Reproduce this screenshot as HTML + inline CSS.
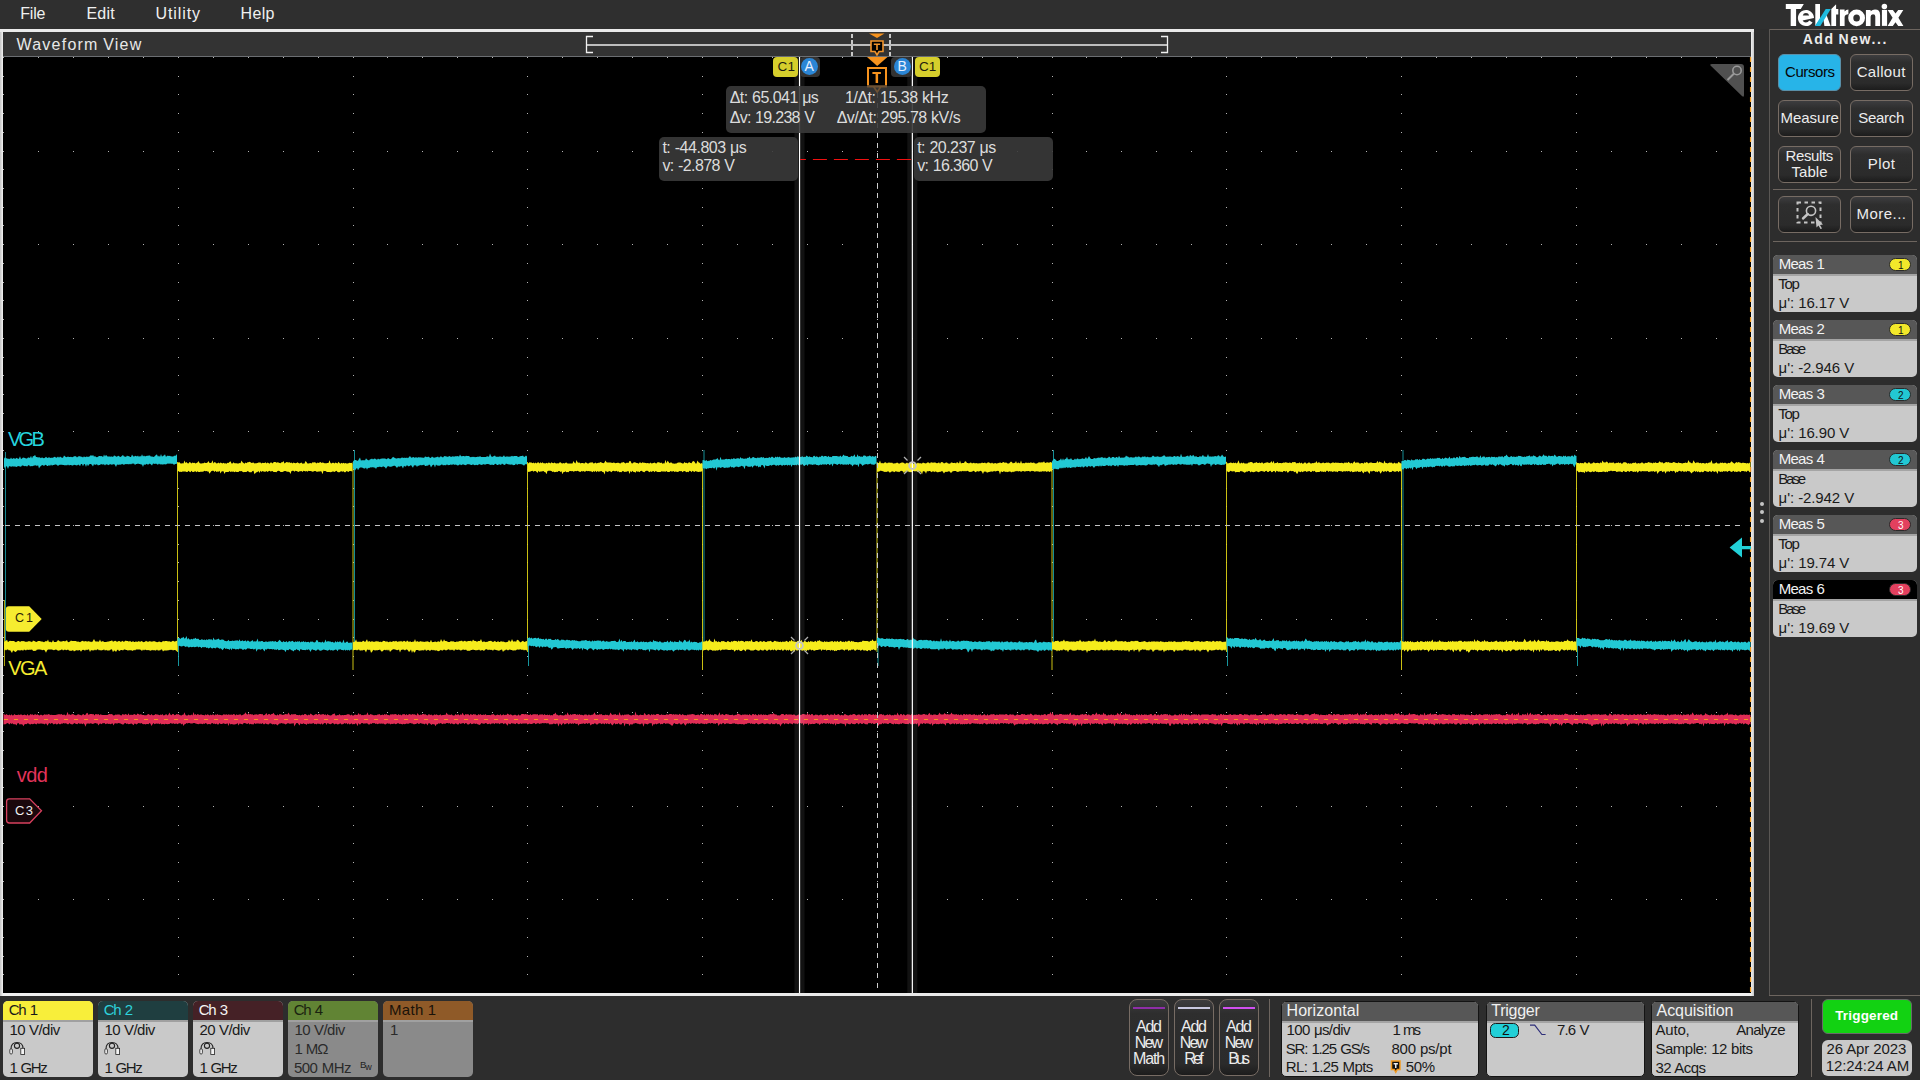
<!DOCTYPE html><html><head><meta charset="utf-8"><style>
*{margin:0;padding:0;box-sizing:border-box}
html,body{width:1920px;height:1080px;overflow:hidden;background:#2d2d2d;font-family:"Liberation Sans",sans-serif;color:#e6e6e6}
.a{position:absolute}
.t{position:absolute;white-space:nowrap;line-height:1}
</style></head><body>
<div class="a" style="left:0;top:0;width:1920px;height:29px;background:#2f2f2f"></div><div class="t" style="left:20.30px;top:6.00px;font-size:16px;color:#f0f0f0;letter-spacing:-0.250px;">File</div><div class="t" style="left:86.40px;top:6.00px;font-size:16px;color:#f0f0f0;letter-spacing:0.217px;">Edit</div><div class="t" style="left:155.50px;top:6.00px;font-size:16px;color:#f0f0f0;letter-spacing:0.917px;">Utility</div><div class="t" style="left:240.60px;top:6.00px;font-size:16px;color:#f0f0f0;letter-spacing:0.333px;">Help</div><div class="a" style="left:0;top:29px;width:1754px;height:967px;background:linear-gradient(90deg,#c4c4c4 0,#f2f2f2 3px,#e8e8e8 50%,#f2f2f2 calc(100% - 3px),#c8c8c8 100%)"></div><div class="a" style="left:0;top:29px;width:1754px;height:3px;background:#eaeaea"></div><div class="a" style="left:3px;top:32px;width:1748px;height:24px;background:#333333"></div><div class="a" style="left:3px;top:56px;width:1748px;height:1px;background:#6b6e72"></div><div class="a" style="left:3px;top:57px;width:1748px;height:936px;background:#000"></div><div class="t" style="left:16.40px;top:37.00px;font-size:16px;color:#e8e8e8;letter-spacing:1.250px;word-spacing:-1.250px;">Waveform View</div><svg class="a" style="left:0;top:0" width="1920" height="1080" viewBox="0 0 1920 1080"><path fill="#b4b4b4" shape-rendering="crispEdges" d="M3 57h1v1h-1zM3 76h1v1h-1zM3 94h1v1h-1zM3 113h1v1h-1zM3 132h1v1h-1zM3 151h1v1h-1zM3 169h1v1h-1zM3 188h1v1h-1zM3 207h1v1h-1zM3 225h1v1h-1zM3 244h1v1h-1zM3 263h1v1h-1zM3 282h1v1h-1zM3 300h1v1h-1zM3 319h1v1h-1zM3 338h1v1h-1zM3 357h1v1h-1zM3 375h1v1h-1zM3 394h1v1h-1zM3 413h1v1h-1zM3 431h1v1h-1zM3 450h1v1h-1zM3 469h1v1h-1zM3 488h1v1h-1zM3 506h1v1h-1zM3 525h1v1h-1zM3 544h1v1h-1zM3 562h1v1h-1zM3 581h1v1h-1zM3 600h1v1h-1zM3 619h1v1h-1zM3 637h1v1h-1zM3 656h1v1h-1zM3 675h1v1h-1zM3 693h1v1h-1zM3 712h1v1h-1zM3 731h1v1h-1zM3 750h1v1h-1zM3 768h1v1h-1zM3 787h1v1h-1zM3 806h1v1h-1zM3 825h1v1h-1zM3 843h1v1h-1zM3 862h1v1h-1zM3 881h1v1h-1zM3 899h1v1h-1zM3 918h1v1h-1zM3 937h1v1h-1zM3 956h1v1h-1zM3 974h1v1h-1zM38 57h1v1h-1zM38 151h1v1h-1zM38 244h1v1h-1zM38 338h1v1h-1zM38 431h1v1h-1zM38 525h1v1h-1zM38 619h1v1h-1zM38 712h1v1h-1zM38 806h1v1h-1zM38 899h1v1h-1zM73 57h1v1h-1zM73 151h1v1h-1zM73 244h1v1h-1zM73 338h1v1h-1zM73 431h1v1h-1zM73 525h1v1h-1zM73 619h1v1h-1zM73 712h1v1h-1zM73 806h1v1h-1zM73 899h1v1h-1zM108 57h1v1h-1zM108 151h1v1h-1zM108 244h1v1h-1zM108 338h1v1h-1zM108 431h1v1h-1zM108 525h1v1h-1zM108 619h1v1h-1zM108 712h1v1h-1zM108 806h1v1h-1zM108 899h1v1h-1zM143 57h1v1h-1zM143 151h1v1h-1zM143 244h1v1h-1zM143 338h1v1h-1zM143 431h1v1h-1zM143 525h1v1h-1zM143 619h1v1h-1zM143 712h1v1h-1zM143 806h1v1h-1zM143 899h1v1h-1zM178 57h1v1h-1zM178 76h1v1h-1zM178 94h1v1h-1zM178 113h1v1h-1zM178 132h1v1h-1zM178 151h1v1h-1zM178 169h1v1h-1zM178 188h1v1h-1zM178 207h1v1h-1zM178 225h1v1h-1zM178 244h1v1h-1zM178 263h1v1h-1zM178 282h1v1h-1zM178 300h1v1h-1zM178 319h1v1h-1zM178 338h1v1h-1zM178 357h1v1h-1zM178 375h1v1h-1zM178 394h1v1h-1zM178 413h1v1h-1zM178 431h1v1h-1zM178 450h1v1h-1zM178 469h1v1h-1zM178 488h1v1h-1zM178 506h1v1h-1zM178 525h1v1h-1zM178 544h1v1h-1zM178 562h1v1h-1zM178 581h1v1h-1zM178 600h1v1h-1zM178 619h1v1h-1zM178 637h1v1h-1zM178 656h1v1h-1zM178 675h1v1h-1zM178 693h1v1h-1zM178 712h1v1h-1zM178 731h1v1h-1zM178 750h1v1h-1zM178 768h1v1h-1zM178 787h1v1h-1zM178 806h1v1h-1zM178 825h1v1h-1zM178 843h1v1h-1zM178 862h1v1h-1zM178 881h1v1h-1zM178 899h1v1h-1zM178 918h1v1h-1zM178 937h1v1h-1zM178 956h1v1h-1zM178 974h1v1h-1zM213 57h1v1h-1zM213 151h1v1h-1zM213 244h1v1h-1zM213 338h1v1h-1zM213 431h1v1h-1zM213 525h1v1h-1zM213 619h1v1h-1zM213 712h1v1h-1zM213 806h1v1h-1zM213 899h1v1h-1zM248 57h1v1h-1zM248 151h1v1h-1zM248 244h1v1h-1zM248 338h1v1h-1zM248 431h1v1h-1zM248 525h1v1h-1zM248 619h1v1h-1zM248 712h1v1h-1zM248 806h1v1h-1zM248 899h1v1h-1zM283 57h1v1h-1zM283 151h1v1h-1zM283 244h1v1h-1zM283 338h1v1h-1zM283 431h1v1h-1zM283 525h1v1h-1zM283 619h1v1h-1zM283 712h1v1h-1zM283 806h1v1h-1zM283 899h1v1h-1zM318 57h1v1h-1zM318 151h1v1h-1zM318 244h1v1h-1zM318 338h1v1h-1zM318 431h1v1h-1zM318 525h1v1h-1zM318 619h1v1h-1zM318 712h1v1h-1zM318 806h1v1h-1zM318 899h1v1h-1zM353 57h1v1h-1zM353 76h1v1h-1zM353 94h1v1h-1zM353 113h1v1h-1zM353 132h1v1h-1zM353 151h1v1h-1zM353 169h1v1h-1zM353 188h1v1h-1zM353 207h1v1h-1zM353 225h1v1h-1zM353 244h1v1h-1zM353 263h1v1h-1zM353 282h1v1h-1zM353 300h1v1h-1zM353 319h1v1h-1zM353 338h1v1h-1zM353 357h1v1h-1zM353 375h1v1h-1zM353 394h1v1h-1zM353 413h1v1h-1zM353 431h1v1h-1zM353 450h1v1h-1zM353 469h1v1h-1zM353 488h1v1h-1zM353 506h1v1h-1zM353 525h1v1h-1zM353 544h1v1h-1zM353 562h1v1h-1zM353 581h1v1h-1zM353 600h1v1h-1zM353 619h1v1h-1zM353 637h1v1h-1zM353 656h1v1h-1zM353 675h1v1h-1zM353 693h1v1h-1zM353 712h1v1h-1zM353 731h1v1h-1zM353 750h1v1h-1zM353 768h1v1h-1zM353 787h1v1h-1zM353 806h1v1h-1zM353 825h1v1h-1zM353 843h1v1h-1zM353 862h1v1h-1zM353 881h1v1h-1zM353 899h1v1h-1zM353 918h1v1h-1zM353 937h1v1h-1zM353 956h1v1h-1zM353 974h1v1h-1zM387 57h1v1h-1zM387 151h1v1h-1zM387 244h1v1h-1zM387 338h1v1h-1zM387 431h1v1h-1zM387 525h1v1h-1zM387 619h1v1h-1zM387 712h1v1h-1zM387 806h1v1h-1zM387 899h1v1h-1zM422 57h1v1h-1zM422 151h1v1h-1zM422 244h1v1h-1zM422 338h1v1h-1zM422 431h1v1h-1zM422 525h1v1h-1zM422 619h1v1h-1zM422 712h1v1h-1zM422 806h1v1h-1zM422 899h1v1h-1zM457 57h1v1h-1zM457 151h1v1h-1zM457 244h1v1h-1zM457 338h1v1h-1zM457 431h1v1h-1zM457 525h1v1h-1zM457 619h1v1h-1zM457 712h1v1h-1zM457 806h1v1h-1zM457 899h1v1h-1zM492 57h1v1h-1zM492 151h1v1h-1zM492 244h1v1h-1zM492 338h1v1h-1zM492 431h1v1h-1zM492 525h1v1h-1zM492 619h1v1h-1zM492 712h1v1h-1zM492 806h1v1h-1zM492 899h1v1h-1zM527 57h1v1h-1zM527 76h1v1h-1zM527 94h1v1h-1zM527 113h1v1h-1zM527 132h1v1h-1zM527 151h1v1h-1zM527 169h1v1h-1zM527 188h1v1h-1zM527 207h1v1h-1zM527 225h1v1h-1zM527 244h1v1h-1zM527 263h1v1h-1zM527 282h1v1h-1zM527 300h1v1h-1zM527 319h1v1h-1zM527 338h1v1h-1zM527 357h1v1h-1zM527 375h1v1h-1zM527 394h1v1h-1zM527 413h1v1h-1zM527 431h1v1h-1zM527 450h1v1h-1zM527 469h1v1h-1zM527 488h1v1h-1zM527 506h1v1h-1zM527 525h1v1h-1zM527 544h1v1h-1zM527 562h1v1h-1zM527 581h1v1h-1zM527 600h1v1h-1zM527 619h1v1h-1zM527 637h1v1h-1zM527 656h1v1h-1zM527 675h1v1h-1zM527 693h1v1h-1zM527 712h1v1h-1zM527 731h1v1h-1zM527 750h1v1h-1zM527 768h1v1h-1zM527 787h1v1h-1zM527 806h1v1h-1zM527 825h1v1h-1zM527 843h1v1h-1zM527 862h1v1h-1zM527 881h1v1h-1zM527 899h1v1h-1zM527 918h1v1h-1zM527 937h1v1h-1zM527 956h1v1h-1zM527 974h1v1h-1zM562 57h1v1h-1zM562 151h1v1h-1zM562 244h1v1h-1zM562 338h1v1h-1zM562 431h1v1h-1zM562 525h1v1h-1zM562 619h1v1h-1zM562 712h1v1h-1zM562 806h1v1h-1zM562 899h1v1h-1zM597 57h1v1h-1zM597 151h1v1h-1zM597 244h1v1h-1zM597 338h1v1h-1zM597 431h1v1h-1zM597 525h1v1h-1zM597 619h1v1h-1zM597 712h1v1h-1zM597 806h1v1h-1zM597 899h1v1h-1zM632 57h1v1h-1zM632 151h1v1h-1zM632 244h1v1h-1zM632 338h1v1h-1zM632 431h1v1h-1zM632 525h1v1h-1zM632 619h1v1h-1zM632 712h1v1h-1zM632 806h1v1h-1zM632 899h1v1h-1zM667 57h1v1h-1zM667 151h1v1h-1zM667 244h1v1h-1zM667 338h1v1h-1zM667 431h1v1h-1zM667 525h1v1h-1zM667 619h1v1h-1zM667 712h1v1h-1zM667 806h1v1h-1zM667 899h1v1h-1zM702 57h1v1h-1zM702 76h1v1h-1zM702 94h1v1h-1zM702 113h1v1h-1zM702 132h1v1h-1zM702 151h1v1h-1zM702 169h1v1h-1zM702 188h1v1h-1zM702 207h1v1h-1zM702 225h1v1h-1zM702 244h1v1h-1zM702 263h1v1h-1zM702 282h1v1h-1zM702 300h1v1h-1zM702 319h1v1h-1zM702 338h1v1h-1zM702 357h1v1h-1zM702 375h1v1h-1zM702 394h1v1h-1zM702 413h1v1h-1zM702 431h1v1h-1zM702 450h1v1h-1zM702 469h1v1h-1zM702 488h1v1h-1zM702 506h1v1h-1zM702 525h1v1h-1zM702 544h1v1h-1zM702 562h1v1h-1zM702 581h1v1h-1zM702 600h1v1h-1zM702 619h1v1h-1zM702 637h1v1h-1zM702 656h1v1h-1zM702 675h1v1h-1zM702 693h1v1h-1zM702 712h1v1h-1zM702 731h1v1h-1zM702 750h1v1h-1zM702 768h1v1h-1zM702 787h1v1h-1zM702 806h1v1h-1zM702 825h1v1h-1zM702 843h1v1h-1zM702 862h1v1h-1zM702 881h1v1h-1zM702 899h1v1h-1zM702 918h1v1h-1zM702 937h1v1h-1zM702 956h1v1h-1zM702 974h1v1h-1zM737 57h1v1h-1zM737 151h1v1h-1zM737 244h1v1h-1zM737 338h1v1h-1zM737 431h1v1h-1zM737 525h1v1h-1zM737 619h1v1h-1zM737 712h1v1h-1zM737 806h1v1h-1zM737 899h1v1h-1zM772 57h1v1h-1zM772 151h1v1h-1zM772 244h1v1h-1zM772 338h1v1h-1zM772 431h1v1h-1zM772 525h1v1h-1zM772 619h1v1h-1zM772 712h1v1h-1zM772 806h1v1h-1zM772 899h1v1h-1zM807 57h1v1h-1zM807 151h1v1h-1zM807 244h1v1h-1zM807 338h1v1h-1zM807 431h1v1h-1zM807 525h1v1h-1zM807 619h1v1h-1zM807 712h1v1h-1zM807 806h1v1h-1zM807 899h1v1h-1zM842 57h1v1h-1zM842 151h1v1h-1zM842 244h1v1h-1zM842 338h1v1h-1zM842 431h1v1h-1zM842 525h1v1h-1zM842 619h1v1h-1zM842 712h1v1h-1zM842 806h1v1h-1zM842 899h1v1h-1zM877 57h1v1h-1zM877 76h1v1h-1zM877 94h1v1h-1zM877 113h1v1h-1zM877 132h1v1h-1zM877 151h1v1h-1zM877 169h1v1h-1zM877 188h1v1h-1zM877 207h1v1h-1zM877 225h1v1h-1zM877 244h1v1h-1zM877 263h1v1h-1zM877 282h1v1h-1zM877 300h1v1h-1zM877 319h1v1h-1zM877 338h1v1h-1zM877 357h1v1h-1zM877 375h1v1h-1zM877 394h1v1h-1zM877 413h1v1h-1zM877 431h1v1h-1zM877 450h1v1h-1zM877 469h1v1h-1zM877 488h1v1h-1zM877 506h1v1h-1zM877 525h1v1h-1zM877 544h1v1h-1zM877 562h1v1h-1zM877 581h1v1h-1zM877 600h1v1h-1zM877 619h1v1h-1zM877 637h1v1h-1zM877 656h1v1h-1zM877 675h1v1h-1zM877 693h1v1h-1zM877 712h1v1h-1zM877 731h1v1h-1zM877 750h1v1h-1zM877 768h1v1h-1zM877 787h1v1h-1zM877 806h1v1h-1zM877 825h1v1h-1zM877 843h1v1h-1zM877 862h1v1h-1zM877 881h1v1h-1zM877 899h1v1h-1zM877 918h1v1h-1zM877 937h1v1h-1zM877 956h1v1h-1zM877 974h1v1h-1zM912 57h1v1h-1zM912 151h1v1h-1zM912 244h1v1h-1zM912 338h1v1h-1zM912 431h1v1h-1zM912 525h1v1h-1zM912 619h1v1h-1zM912 712h1v1h-1zM912 806h1v1h-1zM912 899h1v1h-1zM947 57h1v1h-1zM947 151h1v1h-1zM947 244h1v1h-1zM947 338h1v1h-1zM947 431h1v1h-1zM947 525h1v1h-1zM947 619h1v1h-1zM947 712h1v1h-1zM947 806h1v1h-1zM947 899h1v1h-1zM982 57h1v1h-1zM982 151h1v1h-1zM982 244h1v1h-1zM982 338h1v1h-1zM982 431h1v1h-1zM982 525h1v1h-1zM982 619h1v1h-1zM982 712h1v1h-1zM982 806h1v1h-1zM982 899h1v1h-1zM1017 57h1v1h-1zM1017 151h1v1h-1zM1017 244h1v1h-1zM1017 338h1v1h-1zM1017 431h1v1h-1zM1017 525h1v1h-1zM1017 619h1v1h-1zM1017 712h1v1h-1zM1017 806h1v1h-1zM1017 899h1v1h-1zM1052 57h1v1h-1zM1052 76h1v1h-1zM1052 94h1v1h-1zM1052 113h1v1h-1zM1052 132h1v1h-1zM1052 151h1v1h-1zM1052 169h1v1h-1zM1052 188h1v1h-1zM1052 207h1v1h-1zM1052 225h1v1h-1zM1052 244h1v1h-1zM1052 263h1v1h-1zM1052 282h1v1h-1zM1052 300h1v1h-1zM1052 319h1v1h-1zM1052 338h1v1h-1zM1052 357h1v1h-1zM1052 375h1v1h-1zM1052 394h1v1h-1zM1052 413h1v1h-1zM1052 431h1v1h-1zM1052 450h1v1h-1zM1052 469h1v1h-1zM1052 488h1v1h-1zM1052 506h1v1h-1zM1052 525h1v1h-1zM1052 544h1v1h-1zM1052 562h1v1h-1zM1052 581h1v1h-1zM1052 600h1v1h-1zM1052 619h1v1h-1zM1052 637h1v1h-1zM1052 656h1v1h-1zM1052 675h1v1h-1zM1052 693h1v1h-1zM1052 712h1v1h-1zM1052 731h1v1h-1zM1052 750h1v1h-1zM1052 768h1v1h-1zM1052 787h1v1h-1zM1052 806h1v1h-1zM1052 825h1v1h-1zM1052 843h1v1h-1zM1052 862h1v1h-1zM1052 881h1v1h-1zM1052 899h1v1h-1zM1052 918h1v1h-1zM1052 937h1v1h-1zM1052 956h1v1h-1zM1052 974h1v1h-1zM1086 57h1v1h-1zM1086 151h1v1h-1zM1086 244h1v1h-1zM1086 338h1v1h-1zM1086 431h1v1h-1zM1086 525h1v1h-1zM1086 619h1v1h-1zM1086 712h1v1h-1zM1086 806h1v1h-1zM1086 899h1v1h-1zM1121 57h1v1h-1zM1121 151h1v1h-1zM1121 244h1v1h-1zM1121 338h1v1h-1zM1121 431h1v1h-1zM1121 525h1v1h-1zM1121 619h1v1h-1zM1121 712h1v1h-1zM1121 806h1v1h-1zM1121 899h1v1h-1zM1156 57h1v1h-1zM1156 151h1v1h-1zM1156 244h1v1h-1zM1156 338h1v1h-1zM1156 431h1v1h-1zM1156 525h1v1h-1zM1156 619h1v1h-1zM1156 712h1v1h-1zM1156 806h1v1h-1zM1156 899h1v1h-1zM1191 57h1v1h-1zM1191 151h1v1h-1zM1191 244h1v1h-1zM1191 338h1v1h-1zM1191 431h1v1h-1zM1191 525h1v1h-1zM1191 619h1v1h-1zM1191 712h1v1h-1zM1191 806h1v1h-1zM1191 899h1v1h-1zM1226 57h1v1h-1zM1226 76h1v1h-1zM1226 94h1v1h-1zM1226 113h1v1h-1zM1226 132h1v1h-1zM1226 151h1v1h-1zM1226 169h1v1h-1zM1226 188h1v1h-1zM1226 207h1v1h-1zM1226 225h1v1h-1zM1226 244h1v1h-1zM1226 263h1v1h-1zM1226 282h1v1h-1zM1226 300h1v1h-1zM1226 319h1v1h-1zM1226 338h1v1h-1zM1226 357h1v1h-1zM1226 375h1v1h-1zM1226 394h1v1h-1zM1226 413h1v1h-1zM1226 431h1v1h-1zM1226 450h1v1h-1zM1226 469h1v1h-1zM1226 488h1v1h-1zM1226 506h1v1h-1zM1226 525h1v1h-1zM1226 544h1v1h-1zM1226 562h1v1h-1zM1226 581h1v1h-1zM1226 600h1v1h-1zM1226 619h1v1h-1zM1226 637h1v1h-1zM1226 656h1v1h-1zM1226 675h1v1h-1zM1226 693h1v1h-1zM1226 712h1v1h-1zM1226 731h1v1h-1zM1226 750h1v1h-1zM1226 768h1v1h-1zM1226 787h1v1h-1zM1226 806h1v1h-1zM1226 825h1v1h-1zM1226 843h1v1h-1zM1226 862h1v1h-1zM1226 881h1v1h-1zM1226 899h1v1h-1zM1226 918h1v1h-1zM1226 937h1v1h-1zM1226 956h1v1h-1zM1226 974h1v1h-1zM1261 57h1v1h-1zM1261 151h1v1h-1zM1261 244h1v1h-1zM1261 338h1v1h-1zM1261 431h1v1h-1zM1261 525h1v1h-1zM1261 619h1v1h-1zM1261 712h1v1h-1zM1261 806h1v1h-1zM1261 899h1v1h-1zM1296 57h1v1h-1zM1296 151h1v1h-1zM1296 244h1v1h-1zM1296 338h1v1h-1zM1296 431h1v1h-1zM1296 525h1v1h-1zM1296 619h1v1h-1zM1296 712h1v1h-1zM1296 806h1v1h-1zM1296 899h1v1h-1zM1331 57h1v1h-1zM1331 151h1v1h-1zM1331 244h1v1h-1zM1331 338h1v1h-1zM1331 431h1v1h-1zM1331 525h1v1h-1zM1331 619h1v1h-1zM1331 712h1v1h-1zM1331 806h1v1h-1zM1331 899h1v1h-1zM1366 57h1v1h-1zM1366 151h1v1h-1zM1366 244h1v1h-1zM1366 338h1v1h-1zM1366 431h1v1h-1zM1366 525h1v1h-1zM1366 619h1v1h-1zM1366 712h1v1h-1zM1366 806h1v1h-1zM1366 899h1v1h-1zM1401 57h1v1h-1zM1401 76h1v1h-1zM1401 94h1v1h-1zM1401 113h1v1h-1zM1401 132h1v1h-1zM1401 151h1v1h-1zM1401 169h1v1h-1zM1401 188h1v1h-1zM1401 207h1v1h-1zM1401 225h1v1h-1zM1401 244h1v1h-1zM1401 263h1v1h-1zM1401 282h1v1h-1zM1401 300h1v1h-1zM1401 319h1v1h-1zM1401 338h1v1h-1zM1401 357h1v1h-1zM1401 375h1v1h-1zM1401 394h1v1h-1zM1401 413h1v1h-1zM1401 431h1v1h-1zM1401 450h1v1h-1zM1401 469h1v1h-1zM1401 488h1v1h-1zM1401 506h1v1h-1zM1401 525h1v1h-1zM1401 544h1v1h-1zM1401 562h1v1h-1zM1401 581h1v1h-1zM1401 600h1v1h-1zM1401 619h1v1h-1zM1401 637h1v1h-1zM1401 656h1v1h-1zM1401 675h1v1h-1zM1401 693h1v1h-1zM1401 712h1v1h-1zM1401 731h1v1h-1zM1401 750h1v1h-1zM1401 768h1v1h-1zM1401 787h1v1h-1zM1401 806h1v1h-1zM1401 825h1v1h-1zM1401 843h1v1h-1zM1401 862h1v1h-1zM1401 881h1v1h-1zM1401 899h1v1h-1zM1401 918h1v1h-1zM1401 937h1v1h-1zM1401 956h1v1h-1zM1401 974h1v1h-1zM1436 57h1v1h-1zM1436 151h1v1h-1zM1436 244h1v1h-1zM1436 338h1v1h-1zM1436 431h1v1h-1zM1436 525h1v1h-1zM1436 619h1v1h-1zM1436 712h1v1h-1zM1436 806h1v1h-1zM1436 899h1v1h-1zM1471 57h1v1h-1zM1471 151h1v1h-1zM1471 244h1v1h-1zM1471 338h1v1h-1zM1471 431h1v1h-1zM1471 525h1v1h-1zM1471 619h1v1h-1zM1471 712h1v1h-1zM1471 806h1v1h-1zM1471 899h1v1h-1zM1506 57h1v1h-1zM1506 151h1v1h-1zM1506 244h1v1h-1zM1506 338h1v1h-1zM1506 431h1v1h-1zM1506 525h1v1h-1zM1506 619h1v1h-1zM1506 712h1v1h-1zM1506 806h1v1h-1zM1506 899h1v1h-1zM1541 57h1v1h-1zM1541 151h1v1h-1zM1541 244h1v1h-1zM1541 338h1v1h-1zM1541 431h1v1h-1zM1541 525h1v1h-1zM1541 619h1v1h-1zM1541 712h1v1h-1zM1541 806h1v1h-1zM1541 899h1v1h-1zM1576 57h1v1h-1zM1576 76h1v1h-1zM1576 94h1v1h-1zM1576 113h1v1h-1zM1576 132h1v1h-1zM1576 151h1v1h-1zM1576 169h1v1h-1zM1576 188h1v1h-1zM1576 207h1v1h-1zM1576 225h1v1h-1zM1576 244h1v1h-1zM1576 263h1v1h-1zM1576 282h1v1h-1zM1576 300h1v1h-1zM1576 319h1v1h-1zM1576 338h1v1h-1zM1576 357h1v1h-1zM1576 375h1v1h-1zM1576 394h1v1h-1zM1576 413h1v1h-1zM1576 431h1v1h-1zM1576 450h1v1h-1zM1576 469h1v1h-1zM1576 488h1v1h-1zM1576 506h1v1h-1zM1576 525h1v1h-1zM1576 544h1v1h-1zM1576 562h1v1h-1zM1576 581h1v1h-1zM1576 600h1v1h-1zM1576 619h1v1h-1zM1576 637h1v1h-1zM1576 656h1v1h-1zM1576 675h1v1h-1zM1576 693h1v1h-1zM1576 712h1v1h-1zM1576 731h1v1h-1zM1576 750h1v1h-1zM1576 768h1v1h-1zM1576 787h1v1h-1zM1576 806h1v1h-1zM1576 825h1v1h-1zM1576 843h1v1h-1zM1576 862h1v1h-1zM1576 881h1v1h-1zM1576 899h1v1h-1zM1576 918h1v1h-1zM1576 937h1v1h-1zM1576 956h1v1h-1zM1576 974h1v1h-1zM1611 57h1v1h-1zM1611 151h1v1h-1zM1611 244h1v1h-1zM1611 338h1v1h-1zM1611 431h1v1h-1zM1611 525h1v1h-1zM1611 619h1v1h-1zM1611 712h1v1h-1zM1611 806h1v1h-1zM1611 899h1v1h-1zM1646 57h1v1h-1zM1646 151h1v1h-1zM1646 244h1v1h-1zM1646 338h1v1h-1zM1646 431h1v1h-1zM1646 525h1v1h-1zM1646 619h1v1h-1zM1646 712h1v1h-1zM1646 806h1v1h-1zM1646 899h1v1h-1zM1681 57h1v1h-1zM1681 151h1v1h-1zM1681 244h1v1h-1zM1681 338h1v1h-1zM1681 431h1v1h-1zM1681 525h1v1h-1zM1681 619h1v1h-1zM1681 712h1v1h-1zM1681 806h1v1h-1zM1681 899h1v1h-1zM1716 57h1v1h-1zM1716 151h1v1h-1zM1716 244h1v1h-1zM1716 338h1v1h-1zM1716 431h1v1h-1zM1716 525h1v1h-1zM1716 619h1v1h-1zM1716 712h1v1h-1zM1716 806h1v1h-1zM1716 899h1v1h-1z"/><rect x="177.0" y="462" width="1" height="190" fill="#e0d414" opacity="0.9"/><rect x="178.0" y="644" width="1" height="22" fill="#1ab0ba" opacity="0.85"/><rect x="352.5" y="464" width="1" height="206" fill="#e0d414" opacity="0.9"/><rect x="354.0" y="450" width="1" height="194" fill="#1ab0ba" opacity="0.8"/><rect x="527.0" y="462" width="1" height="190" fill="#e0d414" opacity="0.9"/><rect x="528.0" y="644" width="1" height="22" fill="#1ab0ba" opacity="0.85"/><rect x="702.0" y="464" width="1" height="206" fill="#e0d414" opacity="0.9"/><rect x="703.5" y="450" width="1" height="194" fill="#1ab0ba" opacity="0.8"/><rect x="876.5" y="462" width="1" height="190" fill="#e0d414" opacity="0.9"/><rect x="877.5" y="644" width="1" height="22" fill="#1ab0ba" opacity="0.85"/><rect x="1051.5" y="464" width="1" height="206" fill="#e0d414" opacity="0.9"/><rect x="1053.0" y="450" width="1" height="194" fill="#1ab0ba" opacity="0.8"/><rect x="1226.0" y="462" width="1" height="190" fill="#e0d414" opacity="0.9"/><rect x="1227.0" y="644" width="1" height="22" fill="#1ab0ba" opacity="0.85"/><rect x="1401.0" y="464" width="1" height="206" fill="#e0d414" opacity="0.9"/><rect x="1402.5" y="450" width="1" height="194" fill="#1ab0ba" opacity="0.8"/><rect x="1576.0" y="462" width="1" height="190" fill="#e0d414" opacity="0.9"/><rect x="1577.0" y="644" width="1" height="22" fill="#1ab0ba" opacity="0.85"/><rect x="4" y="600" width="1" height="66" fill="#d8cc10" opacity="0.8"/><rect x="5" y="452" width="1" height="190" fill="#1aa8b2" opacity="0.8"/><path fill="#22c8d3" d="M4.0 458.8 L5.0 457.3 L6.0 458.2 L7.0 458.3 L8.0 459.0 L9.0 458.4 L10.0 459.2 L11.0 457.4 L12.0 458.9 L13.0 458.5 L14.0 458.1 L15.0 458.9 L16.0 458.3 L17.0 457.7 L18.0 459.0 L19.0 458.4 L20.0 456.2 L21.0 459.0 L22.0 458.5 L23.0 457.5 L24.0 457.7 L25.0 458.0 L26.0 458.6 L27.0 458.6 L28.0 457.5 L29.0 457.6 L30.0 458.0 L31.0 455.7 L32.0 458.4 L33.0 456.1 L34.0 456.2 L35.0 454.8 L36.0 457.1 L37.0 457.1 L38.0 457.6 L39.0 457.2 L40.0 457.6 L41.0 458.3 L42.0 457.3 L43.0 457.9 L44.0 458.2 L45.0 457.8 L46.0 456.7 L47.0 457.7 L48.0 458.1 L49.0 456.9 L50.0 458.0 L51.0 457.8 L52.0 457.7 L53.0 457.7 L54.0 457.1 L55.0 456.7 L56.0 457.7 L57.0 457.4 L58.0 456.4 L59.0 457.8 L60.0 456.6 L61.0 457.2 L62.0 457.7 L63.0 457.7 L64.0 455.4 L65.0 456.2 L66.0 457.3 L67.0 457.1 L68.0 456.5 L69.0 457.0 L70.0 457.1 L71.0 456.8 L72.0 457.2 L73.0 457.0 L74.0 456.2 L75.0 456.2 L76.0 456.3 L77.0 457.4 L78.0 456.6 L79.0 456.2 L80.0 456.3 L81.0 456.7 L82.0 456.8 L83.0 457.5 L84.0 456.3 L85.0 457.2 L86.0 456.8 L87.0 456.6 L88.0 457.1 L89.0 456.6 L90.0 456.3 L91.0 454.7 L92.0 456.3 L93.0 454.7 L94.0 456.7 L95.0 456.0 L96.0 457.1 L97.0 457.3 L98.0 456.8 L99.0 455.9 L100.0 455.9 L101.0 456.2 L102.0 456.0 L103.0 457.3 L104.0 454.6 L105.0 456.5 L106.0 454.8 L107.0 456.0 L108.0 456.7 L109.0 456.2 L110.0 456.7 L111.0 456.6 L112.0 456.5 L113.0 456.9 L114.0 455.5 L115.0 455.8 L116.0 456.6 L117.0 456.8 L118.0 455.7 L119.0 456.0 L120.0 457.1 L121.0 456.7 L122.0 455.7 L123.0 454.9 L124.0 456.6 L125.0 456.4 L126.0 457.0 L127.0 455.6 L128.0 456.2 L129.0 455.9 L130.0 457.0 L131.0 456.9 L132.0 454.5 L133.0 456.0 L134.0 456.8 L135.0 455.7 L136.0 455.9 L137.0 456.4 L138.0 455.5 L139.0 457.0 L140.0 455.8 L141.0 456.8 L142.0 454.2 L143.0 456.6 L144.0 455.6 L145.0 456.6 L146.0 455.9 L147.0 455.7 L148.0 455.8 L149.0 455.6 L150.0 455.6 L151.0 456.8 L152.0 456.2 L153.0 457.0 L154.0 456.8 L155.0 456.0 L156.0 454.7 L157.0 454.6 L158.0 456.7 L159.0 455.6 L160.0 456.9 L161.0 453.9 L162.0 456.8 L163.0 455.8 L164.0 455.5 L165.0 454.3 L166.0 456.9 L167.0 455.7 L168.0 455.8 L169.0 456.0 L170.0 455.7 L171.0 456.4 L172.0 456.2 L173.0 456.7 L174.0 455.8 L175.0 455.7 L176.0 455.6 L177.0 454.0 L177.0 463.4 L176.0 464.0 L175.0 464.0 L174.0 464.9 L173.0 463.7 L172.0 463.7 L171.0 463.7 L170.0 463.4 L169.0 463.8 L168.0 463.4 L167.0 463.8 L166.0 464.4 L165.0 464.3 L164.0 464.2 L163.0 464.4 L162.0 464.4 L161.0 464.3 L160.0 464.5 L159.0 463.6 L158.0 464.8 L157.0 464.3 L156.0 463.4 L155.0 464.1 L154.0 463.7 L153.0 463.6 L152.0 465.4 L151.0 464.6 L150.0 463.8 L149.0 463.7 L148.0 464.9 L147.0 463.8 L146.0 464.3 L145.0 465.0 L144.0 464.2 L143.0 466.9 L142.0 464.6 L141.0 464.5 L140.0 464.1 L139.0 463.9 L138.0 463.6 L137.0 464.0 L136.0 464.1 L135.0 465.0 L134.0 463.5 L133.0 463.7 L132.0 463.5 L131.0 464.6 L130.0 463.7 L129.0 464.4 L128.0 463.9 L127.0 464.3 L126.0 463.9 L125.0 464.3 L124.0 464.7 L123.0 464.5 L122.0 463.8 L121.0 464.8 L120.0 464.4 L119.0 464.7 L118.0 464.8 L117.0 464.4 L116.0 466.9 L115.0 464.9 L114.0 464.0 L113.0 464.6 L112.0 464.4 L111.0 464.8 L110.0 463.7 L109.0 465.2 L108.0 464.8 L107.0 464.6 L106.0 464.3 L105.0 465.4 L104.0 464.3 L103.0 464.6 L102.0 464.4 L101.0 464.1 L100.0 465.1 L99.0 464.9 L98.0 465.6 L97.0 464.3 L96.0 464.4 L95.0 465.1 L94.0 464.1 L93.0 466.5 L92.0 465.0 L91.0 464.1 L90.0 464.0 L89.0 464.4 L88.0 466.3 L87.0 464.0 L86.0 467.0 L85.0 464.3 L84.0 464.1 L83.0 466.3 L82.0 464.0 L81.0 464.0 L80.0 466.3 L79.0 464.7 L78.0 464.8 L77.0 465.6 L76.0 465.2 L75.0 465.1 L74.0 464.8 L73.0 465.6 L72.0 465.5 L71.0 465.0 L70.0 464.9 L69.0 465.4 L68.0 464.6 L67.0 465.4 L66.0 465.1 L65.0 465.5 L64.0 465.1 L63.0 464.9 L62.0 464.8 L61.0 464.7 L60.0 464.7 L59.0 465.0 L58.0 465.9 L57.0 464.9 L56.0 464.6 L55.0 464.6 L54.0 465.1 L53.0 465.0 L52.0 465.7 L51.0 464.6 L50.0 465.9 L49.0 464.9 L48.0 466.1 L47.0 466.1 L46.0 464.7 L45.0 465.0 L44.0 466.0 L43.0 465.2 L42.0 465.0 L41.0 466.1 L40.0 466.8 L39.0 468.6 L38.0 465.0 L37.0 466.2 L36.0 465.3 L35.0 465.5 L34.0 465.5 L33.0 466.0 L32.0 466.3 L31.0 466.1 L30.0 466.6 L29.0 465.1 L28.0 465.5 L27.0 466.7 L26.0 465.7 L25.0 466.2 L24.0 465.9 L23.0 465.5 L22.0 465.4 L21.0 466.8 L20.0 466.5 L19.0 466.2 L18.0 466.1 L17.0 466.7 L16.0 466.9 L15.0 466.2 L14.0 466.7 L13.0 466.3 L12.0 466.5 L11.0 466.8 L10.0 466.2 L9.0 466.2 L8.0 469.0 L7.0 466.4 L6.0 466.3 L5.0 468.4 L4.0 466.5 Z"/><path fill="#f6ec1c" d="M4.0 642.1 L5.0 641.2 L6.0 640.8 L7.0 639.8 L8.0 642.2 L9.0 641.3 L10.0 640.8 L11.0 641.0 L12.0 640.9 L13.0 641.1 L14.0 641.1 L15.0 641.8 L16.0 642.2 L17.0 641.5 L18.0 641.1 L19.0 641.0 L20.0 641.9 L21.0 641.3 L22.0 640.9 L23.0 641.2 L24.0 641.1 L25.0 641.8 L26.0 641.7 L27.0 641.8 L28.0 641.6 L29.0 641.1 L30.0 641.6 L31.0 641.5 L32.0 642.3 L33.0 640.6 L34.0 641.0 L35.0 641.3 L36.0 641.9 L37.0 641.7 L38.0 641.0 L39.0 641.0 L40.0 641.0 L41.0 641.6 L42.0 641.6 L43.0 641.8 L44.0 642.2 L45.0 641.4 L46.0 641.0 L47.0 641.4 L48.0 639.6 L49.0 642.2 L50.0 641.5 L51.0 642.2 L52.0 642.2 L53.0 639.9 L54.0 642.1 L55.0 642.0 L56.0 642.0 L57.0 641.5 L58.0 640.0 L59.0 640.8 L60.0 641.6 L61.0 641.6 L62.0 641.4 L63.0 641.1 L64.0 641.0 L65.0 641.4 L66.0 640.8 L67.0 640.2 L68.0 642.2 L69.0 641.9 L70.0 641.5 L71.0 640.4 L72.0 641.0 L73.0 640.9 L74.0 641.1 L75.0 641.0 L76.0 641.0 L77.0 641.7 L78.0 641.6 L79.0 641.7 L80.0 642.3 L81.0 641.4 L82.0 641.1 L83.0 640.7 L84.0 641.7 L85.0 640.9 L86.0 641.3 L87.0 641.6 L88.0 641.5 L89.0 640.9 L90.0 642.0 L91.0 641.6 L92.0 642.2 L93.0 640.8 L94.0 639.0 L95.0 640.9 L96.0 641.7 L97.0 641.2 L98.0 641.8 L99.0 641.4 L100.0 639.4 L101.0 641.8 L102.0 641.6 L103.0 641.1 L104.0 642.1 L105.0 641.9 L106.0 642.1 L107.0 641.7 L108.0 641.5 L109.0 641.4 L110.0 641.0 L111.0 640.9 L112.0 640.2 L113.0 641.7 L114.0 641.3 L115.0 640.8 L116.0 640.9 L117.0 642.0 L118.0 641.2 L119.0 641.0 L120.0 641.2 L121.0 642.2 L122.0 640.7 L123.0 641.3 L124.0 642.1 L125.0 640.7 L126.0 640.7 L127.0 641.0 L128.0 641.1 L129.0 641.8 L130.0 640.8 L131.0 641.7 L132.0 642.1 L133.0 641.1 L134.0 642.1 L135.0 641.9 L136.0 641.2 L137.0 641.9 L138.0 641.6 L139.0 641.1 L140.0 642.0 L141.0 641.2 L142.0 641.0 L143.0 642.2 L144.0 642.0 L145.0 641.7 L146.0 640.8 L147.0 641.5 L148.0 641.7 L149.0 641.4 L150.0 641.1 L151.0 641.8 L152.0 641.4 L153.0 641.4 L154.0 641.1 L155.0 641.4 L156.0 641.7 L157.0 642.3 L158.0 642.0 L159.0 641.6 L160.0 641.7 L161.0 642.2 L162.0 641.9 L163.0 640.8 L164.0 641.4 L165.0 641.1 L166.0 641.1 L167.0 640.9 L168.0 641.5 L169.0 641.3 L170.0 641.4 L171.0 642.0 L172.0 641.3 L173.0 640.7 L174.0 641.2 L175.0 641.8 L176.0 640.8 L177.0 640.9 L177.0 651.6 L176.0 650.6 L175.0 649.9 L174.0 650.1 L173.0 650.5 L172.0 649.7 L171.0 649.9 L170.0 649.8 L169.0 650.3 L168.0 650.2 L167.0 650.5 L166.0 650.6 L165.0 650.5 L164.0 650.4 L163.0 651.4 L162.0 649.5 L161.0 649.6 L160.0 650.6 L159.0 650.2 L158.0 650.8 L157.0 649.4 L156.0 650.5 L155.0 650.4 L154.0 650.0 L153.0 650.6 L152.0 649.8 L151.0 650.7 L150.0 650.5 L149.0 650.2 L148.0 649.9 L147.0 650.3 L146.0 649.9 L145.0 649.5 L144.0 650.5 L143.0 649.5 L142.0 650.9 L141.0 650.1 L140.0 649.5 L139.0 649.6 L138.0 649.5 L137.0 649.6 L136.0 649.5 L135.0 650.5 L134.0 649.7 L133.0 650.7 L132.0 650.7 L131.0 649.9 L130.0 650.6 L129.0 650.1 L128.0 650.8 L127.0 650.1 L126.0 650.1 L125.0 649.6 L124.0 649.4 L123.0 650.4 L122.0 650.0 L121.0 650.1 L120.0 650.4 L119.0 651.2 L118.0 649.5 L117.0 650.3 L116.0 651.9 L115.0 650.7 L114.0 650.6 L113.0 652.3 L112.0 649.5 L111.0 649.3 L110.0 650.3 L109.0 650.5 L108.0 650.6 L107.0 650.4 L106.0 649.8 L105.0 650.8 L104.0 649.3 L103.0 650.3 L102.0 650.0 L101.0 650.7 L100.0 649.7 L99.0 650.5 L98.0 649.3 L97.0 649.4 L96.0 650.6 L95.0 649.6 L94.0 650.5 L93.0 650.2 L92.0 650.5 L91.0 649.9 L90.0 651.9 L89.0 649.5 L88.0 649.5 L87.0 650.2 L86.0 649.5 L85.0 650.7 L84.0 650.0 L83.0 649.8 L82.0 650.3 L81.0 651.8 L80.0 650.2 L79.0 649.9 L78.0 650.7 L77.0 649.9 L76.0 650.6 L75.0 650.8 L74.0 651.4 L73.0 650.1 L72.0 650.7 L71.0 650.8 L70.0 650.8 L69.0 650.6 L68.0 649.5 L67.0 650.1 L66.0 650.3 L65.0 649.4 L64.0 650.1 L63.0 650.5 L62.0 649.3 L61.0 650.0 L60.0 650.3 L59.0 650.6 L58.0 650.7 L57.0 649.9 L56.0 649.6 L55.0 649.7 L54.0 650.3 L53.0 650.1 L52.0 649.6 L51.0 649.5 L50.0 649.5 L49.0 649.4 L48.0 649.6 L47.0 650.6 L46.0 652.8 L45.0 650.7 L44.0 649.8 L43.0 650.0 L42.0 650.3 L41.0 649.4 L40.0 649.8 L39.0 649.3 L38.0 649.7 L37.0 649.6 L36.0 650.8 L35.0 650.7 L34.0 650.9 L33.0 650.8 L32.0 649.5 L31.0 649.7 L30.0 649.8 L29.0 649.7 L28.0 649.9 L27.0 649.5 L26.0 650.4 L25.0 650.0 L24.0 649.4 L23.0 650.9 L22.0 649.7 L21.0 650.6 L20.0 650.3 L19.0 650.6 L18.0 650.0 L17.0 650.8 L16.0 651.7 L15.0 651.9 L14.0 650.8 L13.0 650.5 L12.0 652.9 L11.0 651.5 L10.0 650.1 L9.0 650.6 L8.0 649.5 L7.0 649.6 L6.0 650.4 L5.0 649.6 L4.0 650.5 Z"/><path fill="#f6ec1c" d="M177.5 463.6 L178.5 462.3 L179.5 462.3 L180.5 463.5 L181.5 463.5 L182.5 463.2 L183.5 463.5 L184.5 460.6 L185.5 462.9 L186.5 462.1 L187.5 463.2 L188.5 463.6 L189.5 462.1 L190.5 462.6 L191.5 463.5 L192.5 462.6 L193.5 462.9 L194.5 462.8 L195.5 463.4 L196.5 462.9 L197.5 462.6 L198.5 461.0 L199.5 463.0 L200.5 463.6 L201.5 463.6 L202.5 463.2 L203.5 463.2 L204.5 462.4 L205.5 463.1 L206.5 463.0 L207.5 462.6 L208.5 461.0 L209.5 463.0 L210.5 463.0 L211.5 462.8 L212.5 460.3 L213.5 463.6 L214.5 462.1 L215.5 462.4 L216.5 463.5 L217.5 463.2 L218.5 462.6 L219.5 463.4 L220.5 462.4 L221.5 463.0 L222.5 463.4 L223.5 462.8 L224.5 463.4 L225.5 463.2 L226.5 463.7 L227.5 462.8 L228.5 463.1 L229.5 462.1 L230.5 461.2 L231.5 463.5 L232.5 463.4 L233.5 462.2 L234.5 463.3 L235.5 463.2 L236.5 463.3 L237.5 463.4 L238.5 463.5 L239.5 463.0 L240.5 463.2 L241.5 460.4 L242.5 462.3 L243.5 463.1 L244.5 463.7 L245.5 462.5 L246.5 463.3 L247.5 462.2 L248.5 462.2 L249.5 461.7 L250.5 462.3 L251.5 463.1 L252.5 462.8 L253.5 462.5 L254.5 463.5 L255.5 463.2 L256.5 463.3 L257.5 463.0 L258.5 462.5 L259.5 462.5 L260.5 462.4 L261.5 463.6 L262.5 462.8 L263.5 463.1 L264.5 462.9 L265.5 462.2 L266.5 463.5 L267.5 462.5 L268.5 462.9 L269.5 463.7 L270.5 462.4 L271.5 462.4 L272.5 463.6 L273.5 462.2 L274.5 462.1 L275.5 462.1 L276.5 462.8 L277.5 462.3 L278.5 462.4 L279.5 462.9 L280.5 463.2 L281.5 462.2 L282.5 462.2 L283.5 461.1 L284.5 463.5 L285.5 462.7 L286.5 462.1 L287.5 462.3 L288.5 462.6 L289.5 462.2 L290.5 462.9 L291.5 462.5 L292.5 463.4 L293.5 462.4 L294.5 462.9 L295.5 463.2 L296.5 462.9 L297.5 462.3 L298.5 463.0 L299.5 463.6 L300.5 462.9 L301.5 462.6 L302.5 463.7 L303.5 463.5 L304.5 463.6 L305.5 461.0 L306.5 462.1 L307.5 463.6 L308.5 463.5 L309.5 463.2 L310.5 463.1 L311.5 463.6 L312.5 462.3 L313.5 462.5 L314.5 462.3 L315.5 462.6 L316.5 463.4 L317.5 462.4 L318.5 463.1 L319.5 462.5 L320.5 462.1 L321.5 463.0 L322.5 462.6 L323.5 462.8 L324.5 463.3 L325.5 463.3 L326.5 463.2 L327.5 462.9 L328.5 462.9 L329.5 460.2 L330.5 462.9 L331.5 463.4 L332.5 462.8 L333.5 462.7 L334.5 463.4 L335.5 462.4 L336.5 463.0 L337.5 463.4 L338.5 461.7 L339.5 462.9 L340.5 463.7 L341.5 462.7 L342.5 463.6 L343.5 462.7 L344.5 463.5 L345.5 463.1 L346.5 463.4 L347.5 463.4 L348.5 463.2 L349.5 462.8 L350.5 462.9 L351.5 463.1 L352.5 462.2 L352.5 471.4 L351.5 471.3 L350.5 471.0 L349.5 471.0 L348.5 472.0 L347.5 471.5 L346.5 471.0 L345.5 472.3 L344.5 472.2 L343.5 471.3 L342.5 471.8 L341.5 471.3 L340.5 471.5 L339.5 472.2 L338.5 472.2 L337.5 472.0 L336.5 470.8 L335.5 471.2 L334.5 472.1 L333.5 471.6 L332.5 471.4 L331.5 472.1 L330.5 472.2 L329.5 472.1 L328.5 472.0 L327.5 471.9 L326.5 471.7 L325.5 470.9 L324.5 470.9 L323.5 470.8 L322.5 474.2 L321.5 471.5 L320.5 471.3 L319.5 471.5 L318.5 471.5 L317.5 471.8 L316.5 471.7 L315.5 471.1 L314.5 470.9 L313.5 471.4 L312.5 471.7 L311.5 471.2 L310.5 471.1 L309.5 471.1 L308.5 470.8 L307.5 471.7 L306.5 470.9 L305.5 471.5 L304.5 471.1 L303.5 470.8 L302.5 472.0 L301.5 471.1 L300.5 471.3 L299.5 471.3 L298.5 471.9 L297.5 471.6 L296.5 471.1 L295.5 470.8 L294.5 471.8 L293.5 470.7 L292.5 470.7 L291.5 471.0 L290.5 474.0 L289.5 472.1 L288.5 471.8 L287.5 471.8 L286.5 471.5 L285.5 471.0 L284.5 471.1 L283.5 471.5 L282.5 472.0 L281.5 471.9 L280.5 472.0 L279.5 471.1 L278.5 470.8 L277.5 471.0 L276.5 472.2 L275.5 472.0 L274.5 472.0 L273.5 471.9 L272.5 470.9 L271.5 471.3 L270.5 471.5 L269.5 470.8 L268.5 471.2 L267.5 472.0 L266.5 471.1 L265.5 471.8 L264.5 471.7 L263.5 471.4 L262.5 470.9 L261.5 472.1 L260.5 470.8 L259.5 473.0 L258.5 470.9 L257.5 471.9 L256.5 472.2 L255.5 473.0 L254.5 474.3 L253.5 470.8 L252.5 471.0 L251.5 472.2 L250.5 472.2 L249.5 472.2 L248.5 471.6 L247.5 471.0 L246.5 472.0 L245.5 471.9 L244.5 472.1 L243.5 472.3 L242.5 471.7 L241.5 470.9 L240.5 471.3 L239.5 471.0 L238.5 472.1 L237.5 471.9 L236.5 472.0 L235.5 471.4 L234.5 472.2 L233.5 471.6 L232.5 471.8 L231.5 471.6 L230.5 472.1 L229.5 471.1 L228.5 472.1 L227.5 472.1 L226.5 472.0 L225.5 472.0 L224.5 474.1 L223.5 471.3 L222.5 471.3 L221.5 471.4 L220.5 473.6 L219.5 470.8 L218.5 471.8 L217.5 471.4 L216.5 471.9 L215.5 470.8 L214.5 471.9 L213.5 470.8 L212.5 470.7 L211.5 470.9 L210.5 472.2 L209.5 473.8 L208.5 471.6 L207.5 471.4 L206.5 471.1 L205.5 471.3 L204.5 470.8 L203.5 471.4 L202.5 471.7 L201.5 471.7 L200.5 471.7 L199.5 472.1 L198.5 472.0 L197.5 471.2 L196.5 472.3 L195.5 471.3 L194.5 471.6 L193.5 471.9 L192.5 472.1 L191.5 470.8 L190.5 472.3 L189.5 471.7 L188.5 470.8 L187.5 472.0 L186.5 472.0 L185.5 471.5 L184.5 471.5 L183.5 471.6 L182.5 471.5 L181.5 472.0 L180.5 471.7 L179.5 472.1 L178.5 471.1 L177.5 471.7 Z"/><path fill="#22c8d3" d="M177.5 638.2 L178.5 638.1 L179.5 638.1 L180.5 638.9 L181.5 637.7 L182.5 637.8 L183.5 636.7 L184.5 638.8 L185.5 637.9 L186.5 636.1 L187.5 639.4 L188.5 638.0 L189.5 639.4 L190.5 639.6 L191.5 638.7 L192.5 639.6 L193.5 638.5 L194.5 638.7 L195.5 637.8 L196.5 638.9 L197.5 638.8 L198.5 638.7 L199.5 639.9 L200.5 639.9 L201.5 639.3 L202.5 639.5 L203.5 639.9 L204.5 639.4 L205.5 640.3 L206.5 639.3 L207.5 639.9 L208.5 639.3 L209.5 639.2 L210.5 639.6 L211.5 639.3 L212.5 640.6 L213.5 637.4 L214.5 639.8 L215.5 639.7 L216.5 639.6 L217.5 639.3 L218.5 638.4 L219.5 639.7 L220.5 639.9 L221.5 639.5 L222.5 639.6 L223.5 639.8 L224.5 640.8 L225.5 640.9 L226.5 641.2 L227.5 640.9 L228.5 639.8 L229.5 641.3 L230.5 641.1 L231.5 640.9 L232.5 640.5 L233.5 641.0 L234.5 640.8 L235.5 640.4 L236.5 640.5 L237.5 640.3 L238.5 641.3 L239.5 639.2 L240.5 641.2 L241.5 640.9 L242.5 640.2 L243.5 641.3 L244.5 641.0 L245.5 640.2 L246.5 641.7 L247.5 640.5 L248.5 640.8 L249.5 641.8 L250.5 641.5 L251.5 640.9 L252.5 639.9 L253.5 641.7 L254.5 641.2 L255.5 641.4 L256.5 641.2 L257.5 638.5 L258.5 641.8 L259.5 641.3 L260.5 641.6 L261.5 641.0 L262.5 640.9 L263.5 642.1 L264.5 642.1 L265.5 641.6 L266.5 641.4 L267.5 642.1 L268.5 641.4 L269.5 641.6 L270.5 641.3 L271.5 641.6 L272.5 640.9 L273.5 641.6 L274.5 641.6 L275.5 640.9 L276.5 641.9 L277.5 641.9 L278.5 641.1 L279.5 639.7 L280.5 640.8 L281.5 642.0 L282.5 642.2 L283.5 641.1 L284.5 642.0 L285.5 642.1 L286.5 641.1 L287.5 642.4 L288.5 641.6 L289.5 641.0 L290.5 641.8 L291.5 641.2 L292.5 640.7 L293.5 641.8 L294.5 642.3 L295.5 641.2 L296.5 642.0 L297.5 641.2 L298.5 641.8 L299.5 641.0 L300.5 642.6 L301.5 641.5 L302.5 642.0 L303.5 641.1 L304.5 642.3 L305.5 641.5 L306.5 642.2 L307.5 641.9 L308.5 641.7 L309.5 642.7 L310.5 641.5 L311.5 641.8 L312.5 641.4 L313.5 642.3 L314.5 642.6 L315.5 642.1 L316.5 640.1 L317.5 640.3 L318.5 642.3 L319.5 642.1 L320.5 642.3 L321.5 642.5 L322.5 641.5 L323.5 642.7 L324.5 642.2 L325.5 639.4 L326.5 642.0 L327.5 641.2 L328.5 641.3 L329.5 641.4 L330.5 641.4 L331.5 642.2 L332.5 641.8 L333.5 642.5 L334.5 642.8 L335.5 641.0 L336.5 642.5 L337.5 641.3 L338.5 642.2 L339.5 641.5 L340.5 641.5 L341.5 642.8 L342.5 642.6 L343.5 639.5 L344.5 642.7 L345.5 642.8 L346.5 641.7 L347.5 641.6 L348.5 642.9 L349.5 642.7 L350.5 642.6 L351.5 642.7 L352.5 642.0 L352.5 650.2 L351.5 649.6 L350.5 649.8 L349.5 650.7 L348.5 649.7 L347.5 650.5 L346.5 649.7 L345.5 650.8 L344.5 649.4 L343.5 650.5 L342.5 650.0 L341.5 650.1 L340.5 649.3 L339.5 649.6 L338.5 649.6 L337.5 651.2 L336.5 649.8 L335.5 649.5 L334.5 650.0 L333.5 650.5 L332.5 650.4 L331.5 650.1 L330.5 650.5 L329.5 649.5 L328.5 650.2 L327.5 650.7 L326.5 650.2 L325.5 649.9 L324.5 649.8 L323.5 649.5 L322.5 650.0 L321.5 650.6 L320.5 650.7 L319.5 650.5 L318.5 649.5 L317.5 649.6 L316.5 650.5 L315.5 650.7 L314.5 650.1 L313.5 650.0 L312.5 649.2 L311.5 649.8 L310.5 652.0 L309.5 649.9 L308.5 649.2 L307.5 650.1 L306.5 649.6 L305.5 650.3 L304.5 650.1 L303.5 650.0 L302.5 649.9 L301.5 649.5 L300.5 649.1 L299.5 651.6 L298.5 649.9 L297.5 649.9 L296.5 649.1 L295.5 650.3 L294.5 650.1 L293.5 651.6 L292.5 650.5 L291.5 650.3 L290.5 649.4 L289.5 649.1 L288.5 650.3 L287.5 650.0 L286.5 649.8 L285.5 652.3 L284.5 650.2 L283.5 650.1 L282.5 649.7 L281.5 649.5 L280.5 649.8 L279.5 650.1 L278.5 650.3 L277.5 648.9 L276.5 650.0 L275.5 649.5 L274.5 649.7 L273.5 649.1 L272.5 649.6 L271.5 648.9 L270.5 648.9 L269.5 649.3 L268.5 648.8 L267.5 648.7 L266.5 649.7 L265.5 649.1 L264.5 651.6 L263.5 650.0 L262.5 648.7 L261.5 649.3 L260.5 649.8 L259.5 649.2 L258.5 649.2 L257.5 649.6 L256.5 651.7 L255.5 648.6 L254.5 649.2 L253.5 649.5 L252.5 648.8 L251.5 648.9 L250.5 648.9 L249.5 648.6 L248.5 648.6 L247.5 648.3 L246.5 649.3 L245.5 649.7 L244.5 648.9 L243.5 649.7 L242.5 649.7 L241.5 648.7 L240.5 648.8 L239.5 648.4 L238.5 649.4 L237.5 649.1 L236.5 649.3 L235.5 649.4 L234.5 648.7 L233.5 649.0 L232.5 648.2 L231.5 650.3 L230.5 648.2 L229.5 650.0 L228.5 648.9 L227.5 649.1 L226.5 648.4 L225.5 649.0 L224.5 647.8 L223.5 648.9 L222.5 650.3 L221.5 648.9 L220.5 648.2 L219.5 648.8 L218.5 648.0 L217.5 647.4 L216.5 647.5 L215.5 648.6 L214.5 647.9 L213.5 647.7 L212.5 648.4 L211.5 648.3 L210.5 647.2 L209.5 647.9 L208.5 648.4 L207.5 647.4 L206.5 648.1 L205.5 647.1 L204.5 647.2 L203.5 647.2 L202.5 647.1 L201.5 648.2 L200.5 646.9 L199.5 646.8 L198.5 647.6 L197.5 646.5 L196.5 646.8 L195.5 647.0 L194.5 647.2 L193.5 646.8 L192.5 646.9 L191.5 647.2 L190.5 646.8 L189.5 647.3 L188.5 647.4 L187.5 646.5 L186.5 646.4 L185.5 647.1 L184.5 646.2 L183.5 645.7 L182.5 646.3 L181.5 646.6 L180.5 646.3 L179.5 645.7 L178.5 646.2 L177.5 645.1 Z"/><path fill="#22c8d3" d="M353.0 461.4 L354.0 460.2 L355.0 459.9 L356.0 460.0 L357.0 460.8 L358.0 460.7 L359.0 459.0 L360.0 457.6 L361.0 460.8 L362.0 460.0 L363.0 460.4 L364.0 459.9 L365.0 460.6 L366.0 458.2 L367.0 459.6 L368.0 459.9 L369.0 460.4 L370.0 459.2 L371.0 459.3 L372.0 458.6 L373.0 459.5 L374.0 458.7 L375.0 458.5 L376.0 459.2 L377.0 459.7 L378.0 458.6 L379.0 459.3 L380.0 459.2 L381.0 458.4 L382.0 458.8 L383.0 458.3 L384.0 458.8 L385.0 458.2 L386.0 459.2 L387.0 459.1 L388.0 458.1 L389.0 458.5 L390.0 459.2 L391.0 458.9 L392.0 458.1 L393.0 456.8 L394.0 457.6 L395.0 458.0 L396.0 458.4 L397.0 458.6 L398.0 457.9 L399.0 458.3 L400.0 458.2 L401.0 458.3 L402.0 457.3 L403.0 457.9 L404.0 457.8 L405.0 457.8 L406.0 457.9 L407.0 457.6 L408.0 458.2 L409.0 457.1 L410.0 456.1 L411.0 457.6 L412.0 457.8 L413.0 457.0 L414.0 457.2 L415.0 458.1 L416.0 456.8 L417.0 458.1 L418.0 457.3 L419.0 457.2 L420.0 457.5 L421.0 457.2 L422.0 457.8 L423.0 457.5 L424.0 457.9 L425.0 456.6 L426.0 456.8 L427.0 457.2 L428.0 456.8 L429.0 456.7 L430.0 457.9 L431.0 457.8 L432.0 456.4 L433.0 457.3 L434.0 457.8 L435.0 457.6 L436.0 457.3 L437.0 457.0 L438.0 456.4 L439.0 457.8 L440.0 456.7 L441.0 456.3 L442.0 457.0 L443.0 457.6 L444.0 456.2 L445.0 456.1 L446.0 456.5 L447.0 456.5 L448.0 456.9 L449.0 456.1 L450.0 456.2 L451.0 457.1 L452.0 456.5 L453.0 456.2 L454.0 456.8 L455.0 456.2 L456.0 456.3 L457.0 456.3 L458.0 455.9 L459.0 456.8 L460.0 454.5 L461.0 456.3 L462.0 456.2 L463.0 455.9 L464.0 455.9 L465.0 456.4 L466.0 455.8 L467.0 455.9 L468.0 456.0 L469.0 456.1 L470.0 457.0 L471.0 457.2 L472.0 456.8 L473.0 456.9 L474.0 456.8 L475.0 457.2 L476.0 457.0 L477.0 457.0 L478.0 456.5 L479.0 456.9 L480.0 456.0 L481.0 457.1 L482.0 456.9 L483.0 457.0 L484.0 457.0 L485.0 456.9 L486.0 456.9 L487.0 456.2 L488.0 456.6 L489.0 456.7 L490.0 453.6 L491.0 456.0 L492.0 457.0 L493.0 456.4 L494.0 455.9 L495.0 455.6 L496.0 456.9 L497.0 456.4 L498.0 457.0 L499.0 456.5 L500.0 456.6 L501.0 456.6 L502.0 457.1 L503.0 456.4 L504.0 455.2 L505.0 457.0 L506.0 456.4 L507.0 456.5 L508.0 456.4 L509.0 456.8 L510.0 456.6 L511.0 456.4 L512.0 455.7 L513.0 456.6 L514.0 456.1 L515.0 455.9 L516.0 456.1 L517.0 456.1 L518.0 456.9 L519.0 456.7 L520.0 456.2 L521.0 455.9 L522.0 455.9 L523.0 455.5 L524.0 456.9 L525.0 456.6 L526.0 455.6 L527.0 456.4 L527.0 464.5 L526.0 463.9 L525.0 464.5 L524.0 465.7 L523.0 464.7 L522.0 464.4 L521.0 464.0 L520.0 464.3 L519.0 463.9 L518.0 464.2 L517.0 465.0 L516.0 463.6 L515.0 465.0 L514.0 465.0 L513.0 465.2 L512.0 464.3 L511.0 464.8 L510.0 464.6 L509.0 464.6 L508.0 464.2 L507.0 463.9 L506.0 463.6 L505.0 464.9 L504.0 464.7 L503.0 464.2 L502.0 463.6 L501.0 465.0 L500.0 464.5 L499.0 464.2 L498.0 465.0 L497.0 464.9 L496.0 464.0 L495.0 463.8 L494.0 464.9 L493.0 465.1 L492.0 464.6 L491.0 465.1 L490.0 464.7 L489.0 464.3 L488.0 464.1 L487.0 464.0 L486.0 464.3 L485.0 464.8 L484.0 464.2 L483.0 464.3 L482.0 464.9 L481.0 464.8 L480.0 464.4 L479.0 464.1 L478.0 465.2 L477.0 465.1 L476.0 464.7 L475.0 465.2 L474.0 464.9 L473.0 464.3 L472.0 465.1 L471.0 465.0 L470.0 464.5 L469.0 464.3 L468.0 464.3 L467.0 464.2 L466.0 465.3 L465.0 465.1 L464.0 464.8 L463.0 464.2 L462.0 464.8 L461.0 465.3 L460.0 464.3 L459.0 465.0 L458.0 465.4 L457.0 465.3 L456.0 464.6 L455.0 464.8 L454.0 464.8 L453.0 464.1 L452.0 465.3 L451.0 464.3 L450.0 464.9 L449.0 464.9 L448.0 465.3 L447.0 464.2 L446.0 465.3 L445.0 465.2 L444.0 465.1 L443.0 465.5 L442.0 464.3 L441.0 464.9 L440.0 465.4 L439.0 465.7 L438.0 465.5 L437.0 465.4 L436.0 464.6 L435.0 467.4 L434.0 464.8 L433.0 464.8 L432.0 465.7 L431.0 467.5 L430.0 465.0 L429.0 464.6 L428.0 465.8 L427.0 465.5 L426.0 465.9 L425.0 465.9 L424.0 464.6 L423.0 465.3 L422.0 465.0 L421.0 465.5 L420.0 464.7 L419.0 465.9 L418.0 465.4 L417.0 466.9 L416.0 465.2 L415.0 465.6 L414.0 465.2 L413.0 467.8 L412.0 466.4 L411.0 465.0 L410.0 465.8 L409.0 466.2 L408.0 466.2 L407.0 465.1 L406.0 466.4 L405.0 466.5 L404.0 465.8 L403.0 468.5 L402.0 466.4 L401.0 465.8 L400.0 466.7 L399.0 466.6 L398.0 466.5 L397.0 468.0 L396.0 466.8 L395.0 465.8 L394.0 465.8 L393.0 466.1 L392.0 466.4 L391.0 466.8 L390.0 466.8 L389.0 466.4 L388.0 465.9 L387.0 467.1 L386.0 468.8 L385.0 467.2 L384.0 466.8 L383.0 466.2 L382.0 467.2 L381.0 467.1 L380.0 466.7 L379.0 466.8 L378.0 467.3 L377.0 467.1 L376.0 469.0 L375.0 467.5 L374.0 467.8 L373.0 467.1 L372.0 467.6 L371.0 467.3 L370.0 467.4 L369.0 468.2 L368.0 467.7 L367.0 469.8 L366.0 467.4 L365.0 468.5 L364.0 468.6 L363.0 468.0 L362.0 467.6 L361.0 467.5 L360.0 467.6 L359.0 468.6 L358.0 470.3 L357.0 467.8 L356.0 468.9 L355.0 470.4 L354.0 469.3 L353.0 468.6 Z"/><path fill="#f6ec1c" d="M353.0 642.2 L354.0 642.0 L355.0 641.6 L356.0 639.3 L357.0 642.1 L358.0 641.6 L359.0 642.0 L360.0 641.5 L361.0 642.0 L362.0 641.8 L363.0 640.8 L364.0 641.0 L365.0 642.3 L366.0 640.8 L367.0 639.3 L368.0 642.0 L369.0 641.1 L370.0 641.6 L371.0 642.0 L372.0 640.7 L373.0 641.9 L374.0 641.6 L375.0 642.0 L376.0 640.8 L377.0 641.8 L378.0 641.0 L379.0 641.9 L380.0 641.8 L381.0 641.8 L382.0 642.2 L383.0 640.7 L384.0 641.1 L385.0 641.0 L386.0 642.1 L387.0 640.9 L388.0 642.3 L389.0 642.0 L390.0 641.5 L391.0 641.8 L392.0 641.9 L393.0 640.9 L394.0 641.3 L395.0 641.4 L396.0 640.8 L397.0 641.5 L398.0 642.1 L399.0 640.9 L400.0 641.7 L401.0 640.8 L402.0 641.8 L403.0 641.5 L404.0 640.8 L405.0 641.3 L406.0 641.9 L407.0 640.6 L408.0 641.1 L409.0 642.2 L410.0 640.9 L411.0 642.0 L412.0 642.0 L413.0 641.6 L414.0 641.7 L415.0 639.0 L416.0 642.0 L417.0 641.0 L418.0 641.6 L419.0 642.1 L420.0 641.2 L421.0 641.2 L422.0 641.8 L423.0 641.4 L424.0 641.9 L425.0 641.8 L426.0 641.4 L427.0 641.4 L428.0 641.3 L429.0 642.3 L430.0 642.0 L431.0 639.8 L432.0 642.2 L433.0 642.1 L434.0 642.0 L435.0 641.6 L436.0 641.7 L437.0 642.2 L438.0 641.0 L439.0 641.8 L440.0 641.8 L441.0 639.1 L442.0 641.1 L443.0 641.7 L444.0 639.3 L445.0 640.9 L446.0 641.1 L447.0 641.2 L448.0 641.9 L449.0 642.0 L450.0 642.1 L451.0 640.7 L452.0 641.8 L453.0 640.9 L454.0 641.7 L455.0 642.1 L456.0 641.9 L457.0 641.3 L458.0 642.0 L459.0 641.1 L460.0 641.3 L461.0 640.8 L462.0 640.7 L463.0 641.8 L464.0 641.0 L465.0 640.8 L466.0 641.6 L467.0 641.6 L468.0 640.9 L469.0 641.0 L470.0 641.1 L471.0 640.8 L472.0 641.8 L473.0 639.5 L474.0 640.7 L475.0 641.1 L476.0 640.9 L477.0 642.1 L478.0 641.1 L479.0 641.0 L480.0 641.0 L481.0 638.9 L482.0 641.5 L483.0 642.3 L484.0 641.0 L485.0 642.2 L486.0 641.8 L487.0 642.0 L488.0 641.4 L489.0 641.1 L490.0 640.9 L491.0 640.8 L492.0 641.4 L493.0 642.1 L494.0 641.4 L495.0 640.7 L496.0 642.1 L497.0 642.0 L498.0 641.1 L499.0 642.1 L500.0 642.1 L501.0 641.1 L502.0 641.8 L503.0 641.5 L504.0 641.8 L505.0 642.2 L506.0 642.2 L507.0 642.1 L508.0 641.8 L509.0 639.8 L510.0 641.4 L511.0 641.6 L512.0 639.0 L513.0 641.3 L514.0 641.7 L515.0 641.0 L516.0 642.0 L517.0 639.8 L518.0 639.9 L519.0 640.7 L520.0 642.3 L521.0 642.3 L522.0 641.2 L523.0 640.8 L524.0 641.7 L525.0 641.9 L526.0 641.0 L527.0 641.3 L527.0 650.4 L526.0 650.2 L525.0 649.8 L524.0 650.4 L523.0 649.4 L522.0 650.0 L521.0 649.5 L520.0 649.3 L519.0 649.7 L518.0 649.4 L517.0 649.6 L516.0 650.3 L515.0 650.5 L514.0 650.3 L513.0 650.8 L512.0 650.1 L511.0 649.9 L510.0 649.4 L509.0 649.7 L508.0 650.5 L507.0 649.7 L506.0 649.6 L505.0 650.6 L504.0 650.4 L503.0 652.1 L502.0 649.4 L501.0 649.7 L500.0 650.2 L499.0 650.8 L498.0 650.4 L497.0 650.3 L496.0 650.0 L495.0 649.8 L494.0 649.4 L493.0 650.8 L492.0 650.0 L491.0 649.7 L490.0 650.1 L489.0 649.5 L488.0 650.2 L487.0 649.3 L486.0 649.3 L485.0 649.8 L484.0 650.9 L483.0 650.3 L482.0 650.1 L481.0 650.4 L480.0 650.5 L479.0 649.4 L478.0 650.3 L477.0 649.9 L476.0 650.6 L475.0 650.1 L474.0 650.1 L473.0 649.6 L472.0 649.9 L471.0 650.0 L470.0 650.8 L469.0 650.7 L468.0 650.8 L467.0 650.7 L466.0 649.4 L465.0 649.9 L464.0 649.7 L463.0 649.4 L462.0 650.0 L461.0 650.4 L460.0 650.3 L459.0 649.6 L458.0 649.8 L457.0 650.1 L456.0 649.5 L455.0 649.5 L454.0 651.2 L453.0 649.5 L452.0 650.2 L451.0 649.6 L450.0 650.6 L449.0 649.3 L448.0 649.5 L447.0 650.0 L446.0 650.5 L445.0 650.1 L444.0 649.4 L443.0 650.3 L442.0 650.8 L441.0 649.7 L440.0 650.4 L439.0 650.9 L438.0 651.2 L437.0 650.4 L436.0 650.2 L435.0 650.8 L434.0 649.8 L433.0 650.6 L432.0 649.8 L431.0 650.0 L430.0 650.9 L429.0 650.3 L428.0 649.8 L427.0 650.4 L426.0 650.7 L425.0 649.3 L424.0 650.6 L423.0 650.3 L422.0 650.3 L421.0 650.5 L420.0 650.5 L419.0 650.7 L418.0 649.9 L417.0 650.0 L416.0 650.0 L415.0 652.2 L414.0 652.4 L413.0 650.6 L412.0 653.0 L411.0 649.6 L410.0 650.9 L409.0 651.9 L408.0 650.4 L407.0 649.4 L406.0 649.4 L405.0 650.6 L404.0 649.7 L403.0 649.5 L402.0 649.7 L401.0 650.1 L400.0 652.5 L399.0 649.6 L398.0 649.9 L397.0 650.3 L396.0 649.8 L395.0 649.4 L394.0 649.3 L393.0 649.3 L392.0 649.9 L391.0 650.8 L390.0 652.0 L389.0 649.5 L388.0 650.8 L387.0 649.5 L386.0 650.6 L385.0 649.8 L384.0 649.9 L383.0 650.7 L382.0 651.8 L381.0 650.9 L380.0 649.6 L379.0 650.1 L378.0 649.9 L377.0 650.4 L376.0 650.1 L375.0 650.8 L374.0 649.7 L373.0 650.2 L372.0 652.1 L371.0 652.8 L370.0 649.6 L369.0 650.3 L368.0 649.4 L367.0 649.7 L366.0 652.6 L365.0 650.6 L364.0 649.7 L363.0 650.3 L362.0 650.4 L361.0 650.3 L360.0 650.7 L359.0 649.5 L358.0 649.7 L357.0 650.4 L356.0 649.8 L355.0 650.1 L354.0 649.9 L353.0 650.5 Z"/><path fill="#f6ec1c" d="M527.5 463.4 L528.5 463.2 L529.5 462.2 L530.5 462.4 L531.5 462.5 L532.5 463.3 L533.5 462.6 L534.5 463.5 L535.5 462.5 L536.5 463.4 L537.5 462.6 L538.5 462.2 L539.5 463.6 L540.5 462.3 L541.5 463.2 L542.5 462.2 L543.5 463.2 L544.5 463.2 L545.5 463.6 L546.5 462.8 L547.5 463.6 L548.5 462.6 L549.5 462.8 L550.5 463.6 L551.5 462.3 L552.5 463.0 L553.5 463.3 L554.5 462.5 L555.5 463.3 L556.5 463.6 L557.5 463.2 L558.5 463.6 L559.5 462.5 L560.5 462.3 L561.5 463.3 L562.5 463.4 L563.5 463.1 L564.5 463.5 L565.5 462.7 L566.5 462.5 L567.5 463.5 L568.5 463.4 L569.5 463.4 L570.5 463.4 L571.5 463.4 L572.5 463.5 L573.5 460.9 L574.5 462.8 L575.5 463.5 L576.5 460.1 L577.5 462.2 L578.5 462.8 L579.5 462.6 L580.5 463.5 L581.5 463.0 L582.5 462.9 L583.5 463.2 L584.5 463.6 L585.5 462.2 L586.5 462.8 L587.5 463.4 L588.5 463.4 L589.5 462.8 L590.5 462.4 L591.5 462.4 L592.5 462.3 L593.5 463.4 L594.5 463.3 L595.5 462.4 L596.5 463.5 L597.5 463.0 L598.5 462.8 L599.5 462.8 L600.5 462.1 L601.5 462.5 L602.5 463.1 L603.5 463.3 L604.5 462.5 L605.5 460.6 L606.5 462.3 L607.5 462.6 L608.5 462.4 L609.5 462.4 L610.5 462.6 L611.5 462.8 L612.5 462.9 L613.5 462.4 L614.5 462.7 L615.5 463.2 L616.5 463.0 L617.5 462.7 L618.5 462.8 L619.5 463.3 L620.5 463.5 L621.5 462.6 L622.5 462.4 L623.5 462.1 L624.5 462.7 L625.5 463.6 L626.5 462.7 L627.5 462.7 L628.5 463.0 L629.5 461.1 L630.5 460.9 L631.5 463.3 L632.5 463.6 L633.5 462.4 L634.5 462.2 L635.5 462.5 L636.5 463.1 L637.5 463.1 L638.5 463.7 L639.5 462.5 L640.5 462.4 L641.5 463.3 L642.5 462.2 L643.5 462.8 L644.5 462.7 L645.5 463.0 L646.5 463.2 L647.5 462.9 L648.5 463.2 L649.5 463.6 L650.5 462.6 L651.5 463.4 L652.5 463.2 L653.5 463.1 L654.5 462.5 L655.5 463.3 L656.5 463.6 L657.5 462.2 L658.5 462.3 L659.5 462.5 L660.5 462.9 L661.5 462.5 L662.5 463.7 L663.5 463.3 L664.5 463.6 L665.5 459.8 L666.5 463.3 L667.5 460.8 L668.5 461.8 L669.5 463.2 L670.5 462.4 L671.5 462.4 L672.5 463.6 L673.5 463.6 L674.5 463.7 L675.5 463.5 L676.5 463.4 L677.5 462.8 L678.5 462.4 L679.5 462.4 L680.5 462.5 L681.5 463.0 L682.5 463.6 L683.5 463.6 L684.5 462.1 L685.5 463.1 L686.5 462.7 L687.5 463.5 L688.5 462.6 L689.5 462.2 L690.5 462.9 L691.5 463.2 L692.5 461.6 L693.5 461.0 L694.5 461.7 L695.5 463.4 L696.5 463.5 L697.5 460.5 L698.5 462.3 L699.5 462.7 L700.5 463.7 L701.5 463.3 L702.5 462.5 L702.5 470.9 L701.5 471.6 L700.5 471.7 L699.5 471.8 L698.5 471.9 L697.5 471.8 L696.5 471.5 L695.5 470.9 L694.5 472.0 L693.5 471.6 L692.5 470.7 L691.5 472.2 L690.5 470.9 L689.5 470.7 L688.5 472.3 L687.5 471.8 L686.5 472.2 L685.5 471.6 L684.5 471.0 L683.5 471.3 L682.5 472.3 L681.5 471.0 L680.5 471.3 L679.5 470.9 L678.5 471.8 L677.5 472.0 L676.5 471.8 L675.5 471.4 L674.5 471.9 L673.5 471.1 L672.5 471.5 L671.5 471.5 L670.5 470.9 L669.5 471.9 L668.5 472.1 L667.5 472.0 L666.5 470.9 L665.5 471.8 L664.5 471.5 L663.5 471.4 L662.5 471.4 L661.5 471.3 L660.5 471.9 L659.5 471.9 L658.5 472.1 L657.5 471.9 L656.5 471.6 L655.5 470.9 L654.5 472.2 L653.5 471.0 L652.5 471.2 L651.5 472.0 L650.5 471.3 L649.5 472.2 L648.5 471.6 L647.5 470.7 L646.5 470.7 L645.5 470.9 L644.5 472.2 L643.5 472.1 L642.5 471.4 L641.5 470.8 L640.5 471.0 L639.5 472.3 L638.5 471.4 L637.5 471.8 L636.5 470.9 L635.5 472.8 L634.5 472.1 L633.5 471.9 L632.5 470.8 L631.5 472.2 L630.5 471.1 L629.5 474.0 L628.5 471.1 L627.5 471.3 L626.5 471.7 L625.5 471.7 L624.5 472.1 L623.5 471.2 L622.5 470.9 L621.5 472.2 L620.5 472.0 L619.5 472.2 L618.5 471.2 L617.5 471.7 L616.5 470.7 L615.5 471.3 L614.5 471.3 L613.5 470.8 L612.5 471.0 L611.5 472.3 L610.5 471.5 L609.5 471.0 L608.5 471.4 L607.5 471.9 L606.5 471.4 L605.5 470.8 L604.5 474.5 L603.5 471.9 L602.5 472.1 L601.5 471.1 L600.5 471.2 L599.5 471.5 L598.5 471.7 L597.5 470.9 L596.5 472.2 L595.5 470.7 L594.5 472.1 L593.5 471.0 L592.5 472.2 L591.5 471.6 L590.5 471.2 L589.5 471.3 L588.5 471.1 L587.5 471.3 L586.5 470.8 L585.5 471.6 L584.5 471.8 L583.5 471.0 L582.5 471.5 L581.5 470.9 L580.5 471.9 L579.5 471.7 L578.5 471.3 L577.5 470.8 L576.5 471.2 L575.5 471.0 L574.5 471.2 L573.5 471.7 L572.5 470.9 L571.5 471.3 L570.5 470.9 L569.5 471.1 L568.5 472.3 L567.5 471.9 L566.5 472.2 L565.5 471.3 L564.5 472.0 L563.5 472.1 L562.5 474.2 L561.5 471.2 L560.5 472.1 L559.5 471.1 L558.5 470.9 L557.5 471.9 L556.5 471.7 L555.5 472.1 L554.5 472.3 L553.5 471.4 L552.5 472.0 L551.5 470.9 L550.5 470.8 L549.5 470.8 L548.5 470.8 L547.5 470.9 L546.5 474.2 L545.5 472.2 L544.5 471.9 L543.5 471.1 L542.5 471.3 L541.5 471.5 L540.5 471.5 L539.5 472.1 L538.5 470.8 L537.5 473.1 L536.5 471.8 L535.5 471.0 L534.5 471.0 L533.5 471.7 L532.5 470.7 L531.5 471.1 L530.5 471.6 L529.5 471.8 L528.5 472.0 L527.5 470.9 Z"/><path fill="#22c8d3" d="M527.5 638.0 L528.5 638.1 L529.5 637.3 L530.5 638.5 L531.5 637.6 L532.5 638.7 L533.5 638.3 L534.5 637.9 L535.5 637.8 L536.5 638.6 L537.5 638.3 L538.5 637.4 L539.5 639.0 L540.5 638.6 L541.5 638.9 L542.5 639.2 L543.5 638.8 L544.5 639.9 L545.5 638.7 L546.5 638.6 L547.5 639.9 L548.5 638.8 L549.5 639.0 L550.5 638.8 L551.5 639.8 L552.5 640.0 L553.5 639.9 L554.5 639.9 L555.5 638.9 L556.5 639.9 L557.5 639.1 L558.5 639.6 L559.5 640.5 L560.5 640.6 L561.5 639.4 L562.5 639.8 L563.5 639.7 L564.5 640.3 L565.5 640.5 L566.5 639.7 L567.5 639.8 L568.5 640.2 L569.5 640.0 L570.5 640.7 L571.5 640.6 L572.5 640.0 L573.5 640.4 L574.5 640.0 L575.5 640.8 L576.5 640.5 L577.5 641.1 L578.5 641.3 L579.5 641.3 L580.5 641.2 L581.5 640.5 L582.5 640.5 L583.5 640.5 L584.5 640.5 L585.5 640.0 L586.5 640.3 L587.5 641.0 L588.5 641.1 L589.5 640.4 L590.5 641.5 L591.5 641.5 L592.5 640.2 L593.5 641.4 L594.5 640.6 L595.5 641.1 L596.5 640.7 L597.5 640.4 L598.5 640.4 L599.5 640.8 L600.5 640.6 L601.5 641.7 L602.5 640.9 L603.5 640.5 L604.5 641.5 L605.5 641.8 L606.5 641.0 L607.5 641.5 L608.5 641.8 L609.5 641.7 L610.5 641.6 L611.5 640.9 L612.5 641.0 L613.5 640.9 L614.5 640.8 L615.5 641.1 L616.5 641.9 L617.5 642.0 L618.5 641.4 L619.5 638.4 L620.5 641.9 L621.5 639.7 L622.5 642.0 L623.5 641.1 L624.5 640.9 L625.5 641.0 L626.5 642.2 L627.5 642.1 L628.5 642.0 L629.5 641.7 L630.5 641.9 L631.5 641.2 L632.5 642.2 L633.5 641.2 L634.5 639.6 L635.5 642.3 L636.5 642.1 L637.5 641.2 L638.5 642.2 L639.5 642.2 L640.5 641.7 L641.5 641.6 L642.5 642.3 L643.5 641.2 L644.5 642.2 L645.5 642.1 L646.5 641.7 L647.5 642.4 L648.5 641.9 L649.5 641.7 L650.5 641.3 L651.5 641.9 L652.5 642.2 L653.5 639.7 L654.5 641.3 L655.5 641.0 L656.5 641.5 L657.5 641.6 L658.5 642.2 L659.5 641.3 L660.5 641.4 L661.5 642.6 L662.5 642.6 L663.5 642.4 L664.5 641.8 L665.5 642.0 L666.5 642.0 L667.5 640.6 L668.5 642.5 L669.5 642.3 L670.5 640.6 L671.5 642.1 L672.5 641.6 L673.5 642.5 L674.5 641.2 L675.5 641.8 L676.5 642.0 L677.5 641.9 L678.5 642.3 L679.5 640.0 L680.5 641.6 L681.5 641.5 L682.5 642.7 L683.5 641.3 L684.5 639.8 L685.5 640.2 L686.5 642.0 L687.5 641.4 L688.5 641.5 L689.5 639.5 L690.5 642.8 L691.5 641.4 L692.5 642.4 L693.5 642.0 L694.5 641.7 L695.5 642.1 L696.5 642.1 L697.5 642.7 L698.5 642.9 L699.5 642.3 L700.5 642.6 L701.5 641.6 L702.5 642.1 L702.5 650.5 L701.5 649.7 L700.5 650.2 L699.5 649.6 L698.5 650.8 L697.5 649.7 L696.5 650.4 L695.5 649.7 L694.5 650.3 L693.5 649.7 L692.5 649.7 L691.5 649.4 L690.5 649.9 L689.5 650.6 L688.5 650.6 L687.5 649.4 L686.5 649.3 L685.5 650.4 L684.5 650.4 L683.5 650.0 L682.5 649.6 L681.5 650.1 L680.5 649.9 L679.5 649.4 L678.5 650.5 L677.5 649.6 L676.5 649.7 L675.5 650.0 L674.5 650.4 L673.5 651.8 L672.5 650.4 L671.5 649.7 L670.5 650.2 L669.5 650.3 L668.5 649.9 L667.5 650.7 L666.5 650.5 L665.5 649.9 L664.5 650.6 L663.5 650.5 L662.5 649.9 L661.5 649.7 L660.5 649.2 L659.5 650.2 L658.5 650.8 L657.5 649.8 L656.5 649.2 L655.5 650.5 L654.5 649.9 L653.5 649.8 L652.5 649.4 L651.5 649.4 L650.5 649.1 L649.5 652.2 L648.5 649.3 L647.5 649.6 L646.5 649.8 L645.5 650.5 L644.5 650.1 L643.5 650.2 L642.5 649.8 L641.5 648.9 L640.5 649.5 L639.5 649.1 L638.5 649.2 L637.5 650.4 L636.5 649.9 L635.5 649.5 L634.5 649.7 L633.5 649.2 L632.5 649.2 L631.5 650.4 L630.5 649.6 L629.5 649.8 L628.5 649.2 L627.5 649.2 L626.5 650.2 L625.5 649.2 L624.5 648.9 L623.5 651.7 L622.5 649.8 L621.5 649.5 L620.5 649.1 L619.5 649.7 L618.5 650.2 L617.5 649.6 L616.5 649.5 L615.5 649.7 L614.5 649.4 L613.5 649.4 L612.5 649.6 L611.5 648.8 L610.5 649.6 L609.5 648.6 L608.5 649.2 L607.5 649.2 L606.5 649.1 L605.5 649.0 L604.5 649.3 L603.5 649.9 L602.5 649.4 L601.5 648.7 L600.5 649.2 L599.5 649.4 L598.5 648.9 L597.5 650.1 L596.5 649.4 L595.5 648.8 L594.5 649.2 L593.5 650.5 L592.5 649.4 L591.5 648.5 L590.5 648.3 L589.5 648.6 L588.5 649.0 L587.5 650.4 L586.5 649.4 L585.5 649.0 L584.5 649.0 L583.5 647.9 L582.5 650.4 L581.5 648.0 L580.5 648.5 L579.5 649.2 L578.5 648.1 L577.5 648.4 L576.5 648.8 L575.5 648.4 L574.5 648.2 L573.5 648.7 L572.5 650.1 L571.5 648.6 L570.5 647.8 L569.5 647.9 L568.5 648.6 L567.5 648.0 L566.5 648.8 L565.5 648.4 L564.5 647.6 L563.5 648.0 L562.5 648.0 L561.5 648.0 L560.5 648.1 L559.5 648.3 L558.5 648.4 L557.5 648.6 L556.5 647.2 L555.5 647.0 L554.5 647.2 L553.5 647.3 L552.5 648.8 L551.5 649.7 L550.5 647.4 L549.5 648.0 L548.5 647.6 L547.5 646.6 L546.5 646.5 L545.5 647.0 L544.5 646.8 L543.5 646.5 L542.5 647.6 L541.5 646.4 L540.5 646.2 L539.5 648.0 L538.5 646.2 L537.5 646.4 L536.5 647.3 L535.5 646.7 L534.5 645.7 L533.5 646.4 L532.5 645.8 L531.5 646.2 L530.5 645.7 L529.5 645.4 L528.5 646.1 L527.5 646.4 Z"/><path fill="#22c8d3" d="M702.5 460.2 L703.5 460.0 L704.5 460.5 L705.5 460.8 L706.5 460.0 L707.5 461.2 L708.5 460.7 L709.5 460.8 L710.5 459.9 L711.5 460.6 L712.5 460.1 L713.5 459.4 L714.5 459.6 L715.5 459.6 L716.5 458.9 L717.5 458.1 L718.5 459.7 L719.5 460.3 L720.5 456.8 L721.5 459.7 L722.5 459.4 L723.5 459.6 L724.5 459.4 L725.5 458.9 L726.5 458.8 L727.5 459.3 L728.5 458.9 L729.5 459.1 L730.5 459.5 L731.5 458.6 L732.5 459.3 L733.5 458.2 L734.5 458.5 L735.5 459.1 L736.5 458.6 L737.5 458.3 L738.5 458.2 L739.5 459.0 L740.5 457.0 L741.5 458.6 L742.5 458.3 L743.5 458.8 L744.5 458.8 L745.5 458.5 L746.5 458.8 L747.5 457.8 L748.5 458.1 L749.5 456.5 L750.5 458.4 L751.5 458.2 L752.5 457.2 L753.5 457.1 L754.5 457.7 L755.5 458.0 L756.5 458.2 L757.5 457.6 L758.5 457.8 L759.5 457.7 L760.5 457.5 L761.5 457.1 L762.5 457.7 L763.5 457.0 L764.5 458.3 L765.5 458.0 L766.5 457.7 L767.5 458.0 L768.5 457.7 L769.5 457.0 L770.5 458.0 L771.5 456.8 L772.5 456.7 L773.5 457.8 L774.5 457.9 L775.5 456.6 L776.5 457.5 L777.5 456.5 L778.5 457.5 L779.5 456.6 L780.5 457.5 L781.5 457.7 L782.5 457.8 L783.5 457.7 L784.5 457.1 L785.5 457.8 L786.5 457.7 L787.5 457.4 L788.5 457.0 L789.5 457.6 L790.5 457.7 L791.5 457.5 L792.5 457.4 L793.5 457.3 L794.5 457.4 L795.5 456.4 L796.5 457.5 L797.5 456.2 L798.5 456.8 L799.5 456.7 L800.5 456.9 L801.5 456.8 L802.5 456.3 L803.5 457.2 L804.5 456.7 L805.5 457.0 L806.5 455.4 L807.5 456.3 L808.5 456.9 L809.5 456.2 L810.5 457.0 L811.5 456.9 L812.5 457.4 L813.5 456.0 L814.5 455.8 L815.5 457.0 L816.5 456.3 L817.5 456.7 L818.5 457.4 L819.5 456.4 L820.5 457.0 L821.5 455.8 L822.5 455.7 L823.5 456.8 L824.5 456.1 L825.5 456.0 L826.5 456.3 L827.5 456.9 L828.5 455.8 L829.5 457.1 L830.5 456.8 L831.5 457.2 L832.5 456.0 L833.5 456.1 L834.5 456.0 L835.5 455.9 L836.5 456.1 L837.5 456.2 L838.5 456.4 L839.5 456.6 L840.5 455.6 L841.5 456.9 L842.5 455.9 L843.5 454.5 L844.5 455.8 L845.5 455.7 L846.5 455.9 L847.5 456.1 L848.5 457.1 L849.5 457.0 L850.5 456.7 L851.5 455.7 L852.5 456.6 L853.5 456.1 L854.5 454.3 L855.5 456.9 L856.5 457.0 L857.5 454.3 L858.5 456.4 L859.5 455.9 L860.5 456.7 L861.5 456.5 L862.5 457.0 L863.5 455.6 L864.5 455.5 L865.5 455.7 L866.5 456.8 L867.5 456.2 L868.5 456.3 L869.5 455.5 L870.5 456.1 L871.5 456.8 L872.5 455.9 L873.5 456.4 L874.5 456.7 L875.5 455.7 L876.5 456.4 L876.5 464.7 L875.5 463.6 L874.5 464.7 L873.5 464.7 L872.5 464.6 L871.5 464.5 L870.5 463.5 L869.5 464.0 L868.5 464.3 L867.5 464.5 L866.5 464.1 L865.5 464.3 L864.5 464.6 L863.5 465.0 L862.5 466.0 L861.5 464.4 L860.5 463.8 L859.5 463.5 L858.5 467.2 L857.5 464.5 L856.5 465.0 L855.5 464.6 L854.5 464.4 L853.5 464.8 L852.5 466.6 L851.5 464.8 L850.5 464.5 L849.5 463.7 L848.5 465.0 L847.5 464.2 L846.5 464.8 L845.5 464.6 L844.5 464.4 L843.5 464.7 L842.5 464.6 L841.5 464.1 L840.5 464.7 L839.5 463.8 L838.5 464.1 L837.5 465.1 L836.5 464.5 L835.5 464.0 L834.5 463.8 L833.5 463.7 L832.5 466.6 L831.5 463.7 L830.5 464.6 L829.5 465.2 L828.5 464.1 L827.5 463.9 L826.5 464.9 L825.5 464.2 L824.5 464.6 L823.5 464.4 L822.5 464.2 L821.5 465.0 L820.5 464.6 L819.5 465.0 L818.5 465.6 L817.5 465.1 L816.5 465.0 L815.5 464.3 L814.5 464.5 L813.5 464.4 L812.5 464.9 L811.5 464.5 L810.5 464.4 L809.5 464.2 L808.5 464.3 L807.5 466.1 L806.5 464.4 L805.5 465.0 L804.5 465.9 L803.5 465.4 L802.5 464.1 L801.5 464.7 L800.5 464.7 L799.5 464.3 L798.5 465.6 L797.5 464.2 L796.5 465.6 L795.5 464.7 L794.5 465.3 L793.5 464.9 L792.5 464.7 L791.5 467.1 L790.5 464.4 L789.5 465.6 L788.5 464.7 L787.5 465.7 L786.5 464.8 L785.5 465.0 L784.5 465.5 L783.5 464.7 L782.5 465.8 L781.5 465.4 L780.5 464.7 L779.5 465.0 L778.5 465.7 L777.5 465.0 L776.5 465.8 L775.5 465.5 L774.5 464.8 L773.5 464.8 L772.5 465.0 L771.5 465.8 L770.5 465.0 L769.5 465.5 L768.5 466.0 L767.5 466.1 L766.5 466.0 L765.5 464.9 L764.5 468.4 L763.5 466.1 L762.5 465.0 L761.5 465.1 L760.5 467.2 L759.5 466.4 L758.5 467.6 L757.5 465.5 L756.5 466.5 L755.5 465.6 L754.5 465.4 L753.5 466.1 L752.5 467.8 L751.5 466.0 L750.5 466.8 L749.5 466.8 L748.5 466.8 L747.5 466.5 L746.5 465.8 L745.5 465.8 L744.5 469.3 L743.5 466.4 L742.5 466.2 L741.5 465.7 L740.5 466.5 L739.5 466.8 L738.5 467.3 L737.5 466.7 L736.5 466.4 L735.5 466.8 L734.5 467.4 L733.5 467.8 L732.5 467.0 L731.5 467.6 L730.5 466.3 L729.5 467.4 L728.5 467.4 L727.5 467.7 L726.5 467.4 L725.5 467.8 L724.5 467.9 L723.5 467.4 L722.5 467.0 L721.5 467.5 L720.5 468.0 L719.5 467.3 L718.5 467.6 L717.5 467.3 L716.5 470.7 L715.5 467.0 L714.5 468.4 L713.5 468.3 L712.5 467.5 L711.5 468.3 L710.5 467.9 L709.5 467.9 L708.5 468.6 L707.5 468.3 L706.5 469.2 L705.5 468.4 L704.5 468.4 L703.5 468.2 L702.5 468.8 Z"/><path fill="#f6ec1c" d="M702.5 642.2 L703.5 641.5 L704.5 641.4 L705.5 641.3 L706.5 640.2 L707.5 641.4 L708.5 640.7 L709.5 639.1 L710.5 641.1 L711.5 641.5 L712.5 642.1 L713.5 642.3 L714.5 638.6 L715.5 641.5 L716.5 640.9 L717.5 642.2 L718.5 641.2 L719.5 642.0 L720.5 642.2 L721.5 640.9 L722.5 641.2 L723.5 641.0 L724.5 641.5 L725.5 642.0 L726.5 642.2 L727.5 641.0 L728.5 641.3 L729.5 642.1 L730.5 642.3 L731.5 641.1 L732.5 641.8 L733.5 641.0 L734.5 640.7 L735.5 641.0 L736.5 641.1 L737.5 642.0 L738.5 640.5 L739.5 641.5 L740.5 641.1 L741.5 640.8 L742.5 640.9 L743.5 641.2 L744.5 642.3 L745.5 641.1 L746.5 641.3 L747.5 641.1 L748.5 641.5 L749.5 641.0 L750.5 641.6 L751.5 639.3 L752.5 641.7 L753.5 642.1 L754.5 642.0 L755.5 641.2 L756.5 640.9 L757.5 641.3 L758.5 642.2 L759.5 641.6 L760.5 641.1 L761.5 641.4 L762.5 642.0 L763.5 640.9 L764.5 641.2 L765.5 642.0 L766.5 641.9 L767.5 641.3 L768.5 641.3 L769.5 641.2 L770.5 640.8 L771.5 641.6 L772.5 642.2 L773.5 641.7 L774.5 640.8 L775.5 640.9 L776.5 641.5 L777.5 641.5 L778.5 641.8 L779.5 642.0 L780.5 641.4 L781.5 642.2 L782.5 641.5 L783.5 641.8 L784.5 641.7 L785.5 641.6 L786.5 640.8 L787.5 641.4 L788.5 642.3 L789.5 640.8 L790.5 641.4 L791.5 639.6 L792.5 641.2 L793.5 641.2 L794.5 641.5 L795.5 641.7 L796.5 642.1 L797.5 641.1 L798.5 640.7 L799.5 640.9 L800.5 641.2 L801.5 639.8 L802.5 642.3 L803.5 642.3 L804.5 640.7 L805.5 641.3 L806.5 642.1 L807.5 642.2 L808.5 641.1 L809.5 642.2 L810.5 640.9 L811.5 641.4 L812.5 641.6 L813.5 641.9 L814.5 641.6 L815.5 640.7 L816.5 642.2 L817.5 640.5 L818.5 640.9 L819.5 640.0 L820.5 641.3 L821.5 641.6 L822.5 641.8 L823.5 642.3 L824.5 641.0 L825.5 642.0 L826.5 641.4 L827.5 641.8 L828.5 641.9 L829.5 641.7 L830.5 641.6 L831.5 641.2 L832.5 641.1 L833.5 642.2 L834.5 641.0 L835.5 641.5 L836.5 641.8 L837.5 640.7 L838.5 642.1 L839.5 641.7 L840.5 640.7 L841.5 641.5 L842.5 642.0 L843.5 641.5 L844.5 642.2 L845.5 640.9 L846.5 641.7 L847.5 641.6 L848.5 640.8 L849.5 640.7 L850.5 642.0 L851.5 640.7 L852.5 641.5 L853.5 641.2 L854.5 641.9 L855.5 641.9 L856.5 641.9 L857.5 642.3 L858.5 642.3 L859.5 641.9 L860.5 641.8 L861.5 641.9 L862.5 640.8 L863.5 640.8 L864.5 641.0 L865.5 641.1 L866.5 640.9 L867.5 641.0 L868.5 641.6 L869.5 641.7 L870.5 640.7 L871.5 640.9 L872.5 639.3 L873.5 641.0 L874.5 641.2 L875.5 640.7 L876.5 640.7 L876.5 649.7 L875.5 650.6 L874.5 650.0 L873.5 649.3 L872.5 650.1 L871.5 649.7 L870.5 650.9 L869.5 650.2 L868.5 650.1 L867.5 651.2 L866.5 650.7 L865.5 650.2 L864.5 650.5 L863.5 650.4 L862.5 649.5 L861.5 650.2 L860.5 650.7 L859.5 649.8 L858.5 650.1 L857.5 649.4 L856.5 649.7 L855.5 650.8 L854.5 650.6 L853.5 649.3 L852.5 649.7 L851.5 649.4 L850.5 650.6 L849.5 650.0 L848.5 650.9 L847.5 649.3 L846.5 649.8 L845.5 649.4 L844.5 650.8 L843.5 650.0 L842.5 649.5 L841.5 649.4 L840.5 649.7 L839.5 650.2 L838.5 650.0 L837.5 650.1 L836.5 650.9 L835.5 650.5 L834.5 651.3 L833.5 650.0 L832.5 650.4 L831.5 649.7 L830.5 650.7 L829.5 650.0 L828.5 650.1 L827.5 649.9 L826.5 650.8 L825.5 649.6 L824.5 649.9 L823.5 649.8 L822.5 649.5 L821.5 650.9 L820.5 649.3 L819.5 649.6 L818.5 649.7 L817.5 650.0 L816.5 650.0 L815.5 650.2 L814.5 650.7 L813.5 650.4 L812.5 649.7 L811.5 650.6 L810.5 649.4 L809.5 649.4 L808.5 650.4 L807.5 649.7 L806.5 651.3 L805.5 650.2 L804.5 650.8 L803.5 650.2 L802.5 650.8 L801.5 650.6 L800.5 649.8 L799.5 650.7 L798.5 649.9 L797.5 650.5 L796.5 650.6 L795.5 649.6 L794.5 651.7 L793.5 650.5 L792.5 650.4 L791.5 651.4 L790.5 650.9 L789.5 649.5 L788.5 650.8 L787.5 649.8 L786.5 650.8 L785.5 649.8 L784.5 649.4 L783.5 650.6 L782.5 650.7 L781.5 649.3 L780.5 650.2 L779.5 649.9 L778.5 649.8 L777.5 649.7 L776.5 650.7 L775.5 650.2 L774.5 649.3 L773.5 650.6 L772.5 649.5 L771.5 650.0 L770.5 650.6 L769.5 649.4 L768.5 649.7 L767.5 650.7 L766.5 650.7 L765.5 649.8 L764.5 649.5 L763.5 650.5 L762.5 650.6 L761.5 650.2 L760.5 649.5 L759.5 650.6 L758.5 650.7 L757.5 650.6 L756.5 649.9 L755.5 649.5 L754.5 650.0 L753.5 650.4 L752.5 650.6 L751.5 650.6 L750.5 650.5 L749.5 649.7 L748.5 649.6 L747.5 649.6 L746.5 649.6 L745.5 651.4 L744.5 650.3 L743.5 649.5 L742.5 650.3 L741.5 650.9 L740.5 650.9 L739.5 650.6 L738.5 649.5 L737.5 650.6 L736.5 649.8 L735.5 650.6 L734.5 651.8 L733.5 649.8 L732.5 650.0 L731.5 649.5 L730.5 650.1 L729.5 650.0 L728.5 650.1 L727.5 649.8 L726.5 649.6 L725.5 649.5 L724.5 649.7 L723.5 649.8 L722.5 649.4 L721.5 650.0 L720.5 650.8 L719.5 649.6 L718.5 650.2 L717.5 650.5 L716.5 650.2 L715.5 650.7 L714.5 650.5 L713.5 650.4 L712.5 650.7 L711.5 649.9 L710.5 649.7 L709.5 649.8 L708.5 650.7 L707.5 650.2 L706.5 649.4 L705.5 649.9 L704.5 650.0 L703.5 650.5 L702.5 650.3 Z"/><path fill="#f6ec1c" d="M877.0 462.4 L878.0 462.9 L879.0 463.1 L880.0 460.4 L881.0 463.5 L882.0 462.7 L883.0 463.4 L884.0 463.0 L885.0 462.3 L886.0 462.5 L887.0 463.5 L888.0 462.4 L889.0 462.7 L890.0 462.5 L891.0 463.0 L892.0 462.5 L893.0 463.6 L894.0 463.4 L895.0 463.2 L896.0 463.3 L897.0 462.5 L898.0 462.9 L899.0 463.7 L900.0 463.2 L901.0 462.7 L902.0 462.6 L903.0 462.4 L904.0 462.9 L905.0 463.7 L906.0 463.3 L907.0 462.4 L908.0 463.6 L909.0 463.1 L910.0 462.2 L911.0 462.2 L912.0 462.6 L913.0 463.5 L914.0 463.7 L915.0 462.2 L916.0 463.4 L917.0 463.4 L918.0 462.5 L919.0 463.5 L920.0 462.9 L921.0 463.6 L922.0 463.5 L923.0 462.4 L924.0 463.0 L925.0 463.2 L926.0 463.6 L927.0 462.8 L928.0 462.3 L929.0 462.8 L930.0 463.4 L931.0 462.1 L932.0 462.8 L933.0 462.5 L934.0 462.7 L935.0 462.2 L936.0 463.0 L937.0 463.2 L938.0 463.1 L939.0 462.3 L940.0 463.7 L941.0 462.3 L942.0 462.1 L943.0 462.5 L944.0 463.5 L945.0 463.1 L946.0 462.5 L947.0 462.5 L948.0 463.6 L949.0 463.5 L950.0 463.7 L951.0 462.6 L952.0 462.6 L953.0 463.1 L954.0 463.0 L955.0 462.7 L956.0 463.6 L957.0 462.1 L958.0 462.8 L959.0 463.4 L960.0 460.5 L961.0 463.6 L962.0 462.9 L963.0 462.9 L964.0 463.1 L965.0 461.3 L966.0 461.5 L967.0 463.1 L968.0 463.0 L969.0 463.5 L970.0 462.8 L971.0 462.4 L972.0 463.6 L973.0 463.0 L974.0 462.8 L975.0 463.5 L976.0 463.0 L977.0 463.2 L978.0 463.5 L979.0 463.2 L980.0 463.2 L981.0 463.2 L982.0 462.5 L983.0 462.9 L984.0 463.1 L985.0 462.4 L986.0 463.5 L987.0 462.9 L988.0 462.2 L989.0 462.4 L990.0 463.1 L991.0 463.4 L992.0 462.5 L993.0 463.5 L994.0 463.5 L995.0 463.0 L996.0 463.2 L997.0 463.7 L998.0 462.7 L999.0 463.3 L1000.0 462.2 L1001.0 463.1 L1002.0 462.9 L1003.0 462.1 L1004.0 462.2 L1005.0 462.9 L1006.0 462.2 L1007.0 463.3 L1008.0 463.6 L1009.0 463.4 L1010.0 462.6 L1011.0 461.5 L1012.0 462.2 L1013.0 463.5 L1014.0 462.8 L1015.0 462.9 L1016.0 461.0 L1017.0 463.5 L1018.0 462.5 L1019.0 462.8 L1020.0 463.6 L1021.0 460.6 L1022.0 463.6 L1023.0 463.0 L1024.0 463.2 L1025.0 463.2 L1026.0 462.3 L1027.0 463.2 L1028.0 462.5 L1029.0 463.0 L1030.0 462.8 L1031.0 462.2 L1032.0 463.1 L1033.0 462.7 L1034.0 462.4 L1035.0 463.6 L1036.0 463.4 L1037.0 463.5 L1038.0 462.8 L1039.0 462.3 L1040.0 462.6 L1041.0 462.4 L1042.0 462.2 L1043.0 462.4 L1044.0 461.3 L1045.0 462.9 L1046.0 462.7 L1047.0 462.2 L1048.0 462.6 L1049.0 462.7 L1050.0 462.2 L1051.0 462.1 L1052.0 463.1 L1052.0 472.3 L1051.0 470.7 L1050.0 471.9 L1049.0 471.7 L1048.0 471.0 L1047.0 472.1 L1046.0 471.6 L1045.0 470.9 L1044.0 471.7 L1043.0 471.0 L1042.0 471.5 L1041.0 471.7 L1040.0 471.6 L1039.0 472.1 L1038.0 470.9 L1037.0 471.7 L1036.0 470.7 L1035.0 472.2 L1034.0 470.9 L1033.0 471.3 L1032.0 470.8 L1031.0 471.3 L1030.0 471.7 L1029.0 471.1 L1028.0 471.0 L1027.0 471.2 L1026.0 470.9 L1025.0 471.7 L1024.0 471.2 L1023.0 471.1 L1022.0 471.2 L1021.0 471.9 L1020.0 471.0 L1019.0 471.3 L1018.0 471.4 L1017.0 470.8 L1016.0 471.4 L1015.0 470.9 L1014.0 472.2 L1013.0 471.6 L1012.0 472.2 L1011.0 472.3 L1010.0 471.2 L1009.0 471.7 L1008.0 471.8 L1007.0 472.2 L1006.0 471.6 L1005.0 472.3 L1004.0 470.8 L1003.0 471.9 L1002.0 472.1 L1001.0 471.3 L1000.0 474.5 L999.0 471.3 L998.0 470.8 L997.0 471.1 L996.0 471.2 L995.0 471.5 L994.0 470.8 L993.0 471.8 L992.0 471.4 L991.0 471.6 L990.0 471.7 L989.0 472.1 L988.0 472.3 L987.0 472.8 L986.0 471.6 L985.0 471.8 L984.0 471.5 L983.0 474.1 L982.0 471.9 L981.0 470.8 L980.0 471.1 L979.0 471.4 L978.0 471.5 L977.0 471.0 L976.0 472.2 L975.0 471.9 L974.0 470.8 L973.0 471.0 L972.0 471.7 L971.0 471.8 L970.0 472.0 L969.0 471.7 L968.0 471.0 L967.0 470.8 L966.0 471.5 L965.0 470.8 L964.0 471.5 L963.0 470.7 L962.0 471.2 L961.0 471.6 L960.0 471.1 L959.0 471.8 L958.0 471.8 L957.0 472.1 L956.0 471.1 L955.0 471.1 L954.0 471.1 L953.0 471.2 L952.0 471.7 L951.0 473.2 L950.0 471.7 L949.0 471.3 L948.0 471.6 L947.0 472.0 L946.0 471.7 L945.0 471.9 L944.0 473.5 L943.0 472.1 L942.0 470.7 L941.0 471.7 L940.0 471.7 L939.0 472.0 L938.0 472.2 L937.0 472.3 L936.0 471.4 L935.0 471.5 L934.0 472.3 L933.0 470.8 L932.0 472.2 L931.0 471.7 L930.0 471.0 L929.0 470.9 L928.0 471.5 L927.0 471.1 L926.0 473.8 L925.0 471.6 L924.0 471.4 L923.0 471.1 L922.0 474.5 L921.0 471.9 L920.0 471.4 L919.0 471.6 L918.0 472.2 L917.0 471.5 L916.0 470.9 L915.0 471.4 L914.0 470.9 L913.0 471.1 L912.0 472.2 L911.0 471.9 L910.0 472.2 L909.0 471.7 L908.0 471.4 L907.0 471.3 L906.0 472.7 L905.0 471.2 L904.0 473.2 L903.0 471.4 L902.0 470.9 L901.0 470.7 L900.0 471.5 L899.0 472.3 L898.0 471.4 L897.0 472.0 L896.0 471.0 L895.0 471.7 L894.0 472.3 L893.0 471.3 L892.0 471.6 L891.0 471.7 L890.0 472.8 L889.0 472.1 L888.0 471.1 L887.0 471.9 L886.0 471.7 L885.0 472.0 L884.0 471.8 L883.0 471.3 L882.0 471.0 L881.0 470.8 L880.0 470.8 L879.0 471.8 L878.0 471.6 L877.0 472.0 Z"/><path fill="#22c8d3" d="M877.0 637.1 L878.0 637.2 L879.0 637.9 L880.0 638.5 L881.0 638.5 L882.0 638.1 L883.0 638.5 L884.0 639.1 L885.0 639.0 L886.0 639.0 L887.0 637.9 L888.0 639.2 L889.0 638.2 L890.0 639.0 L891.0 639.0 L892.0 638.3 L893.0 639.1 L894.0 639.1 L895.0 639.5 L896.0 638.7 L897.0 639.2 L898.0 639.2 L899.0 639.1 L900.0 639.1 L901.0 638.8 L902.0 639.5 L903.0 639.0 L904.0 639.2 L905.0 639.9 L906.0 640.1 L907.0 639.2 L908.0 639.1 L909.0 640.4 L910.0 639.5 L911.0 640.0 L912.0 639.4 L913.0 637.4 L914.0 639.3 L915.0 639.3 L916.0 640.1 L917.0 640.9 L918.0 640.8 L919.0 640.0 L920.0 640.0 L921.0 639.7 L922.0 639.9 L923.0 640.5 L924.0 639.7 L925.0 640.2 L926.0 639.8 L927.0 640.1 L928.0 640.3 L929.0 640.7 L930.0 640.0 L931.0 640.3 L932.0 641.2 L933.0 641.3 L934.0 640.3 L935.0 641.4 L936.0 640.9 L937.0 640.8 L938.0 641.4 L939.0 640.9 L940.0 641.7 L941.0 638.3 L942.0 641.5 L943.0 640.9 L944.0 640.4 L945.0 641.5 L946.0 640.6 L947.0 640.4 L948.0 641.4 L949.0 641.5 L950.0 639.4 L951.0 641.8 L952.0 640.9 L953.0 641.0 L954.0 640.9 L955.0 641.8 L956.0 641.6 L957.0 641.4 L958.0 640.6 L959.0 641.1 L960.0 642.0 L961.0 640.7 L962.0 641.1 L963.0 640.8 L964.0 640.6 L965.0 640.9 L966.0 640.8 L967.0 640.7 L968.0 641.1 L969.0 641.0 L970.0 641.7 L971.0 641.1 L972.0 641.7 L973.0 642.0 L974.0 642.0 L975.0 641.1 L976.0 641.9 L977.0 641.7 L978.0 642.2 L979.0 641.0 L980.0 641.6 L981.0 641.4 L982.0 641.9 L983.0 642.1 L984.0 641.5 L985.0 642.3 L986.0 641.5 L987.0 641.2 L988.0 641.6 L989.0 641.0 L990.0 641.4 L991.0 642.5 L992.0 641.6 L993.0 641.1 L994.0 642.2 L995.0 641.1 L996.0 642.3 L997.0 641.2 L998.0 642.3 L999.0 641.1 L1000.0 642.3 L1001.0 642.4 L1002.0 641.1 L1003.0 642.2 L1004.0 642.2 L1005.0 641.6 L1006.0 642.1 L1007.0 641.1 L1008.0 641.7 L1009.0 642.5 L1010.0 641.9 L1011.0 641.4 L1012.0 641.7 L1013.0 642.6 L1014.0 642.3 L1015.0 642.1 L1016.0 642.3 L1017.0 642.4 L1018.0 642.4 L1019.0 641.3 L1020.0 641.3 L1021.0 642.6 L1022.0 641.4 L1023.0 642.7 L1024.0 642.2 L1025.0 642.5 L1026.0 642.0 L1027.0 641.9 L1028.0 642.8 L1029.0 642.1 L1030.0 642.1 L1031.0 642.2 L1032.0 641.8 L1033.0 642.8 L1034.0 642.5 L1035.0 640.3 L1036.0 639.5 L1037.0 642.8 L1038.0 642.8 L1039.0 642.3 L1040.0 642.1 L1041.0 642.2 L1042.0 642.8 L1043.0 642.0 L1044.0 641.6 L1045.0 642.2 L1046.0 642.0 L1047.0 642.6 L1048.0 642.0 L1049.0 641.9 L1050.0 642.2 L1051.0 642.5 L1052.0 642.2 L1052.0 650.8 L1051.0 650.8 L1050.0 649.6 L1049.0 650.8 L1048.0 650.2 L1047.0 649.4 L1046.0 649.7 L1045.0 650.7 L1044.0 650.7 L1043.0 649.5 L1042.0 650.4 L1041.0 650.8 L1040.0 650.2 L1039.0 650.5 L1038.0 652.2 L1037.0 650.8 L1036.0 650.4 L1035.0 650.2 L1034.0 650.4 L1033.0 649.9 L1032.0 650.1 L1031.0 649.6 L1030.0 649.8 L1029.0 650.8 L1028.0 649.3 L1027.0 649.4 L1026.0 649.3 L1025.0 649.4 L1024.0 650.4 L1023.0 650.1 L1022.0 649.5 L1021.0 650.7 L1020.0 650.0 L1019.0 649.8 L1018.0 649.2 L1017.0 650.2 L1016.0 650.2 L1015.0 649.4 L1014.0 649.3 L1013.0 650.2 L1012.0 649.3 L1011.0 650.7 L1010.0 650.3 L1009.0 649.8 L1008.0 649.4 L1007.0 650.0 L1006.0 649.9 L1005.0 649.9 L1004.0 649.1 L1003.0 652.1 L1002.0 649.8 L1001.0 650.2 L1000.0 649.3 L999.0 649.2 L998.0 649.9 L997.0 649.6 L996.0 649.5 L995.0 649.3 L994.0 651.1 L993.0 650.5 L992.0 650.5 L991.0 651.4 L990.0 649.4 L989.0 650.3 L988.0 649.3 L987.0 649.7 L986.0 648.9 L985.0 650.3 L984.0 649.4 L983.0 649.4 L982.0 650.4 L981.0 650.0 L980.0 649.3 L979.0 649.2 L978.0 649.6 L977.0 649.5 L976.0 649.1 L975.0 648.8 L974.0 649.6 L973.0 649.6 L972.0 652.2 L971.0 649.5 L970.0 648.9 L969.0 651.3 L968.0 652.4 L967.0 649.9 L966.0 648.8 L965.0 648.8 L964.0 649.0 L963.0 649.1 L962.0 650.0 L961.0 649.9 L960.0 649.0 L959.0 649.2 L958.0 649.3 L957.0 649.7 L956.0 649.3 L955.0 649.5 L954.0 649.1 L953.0 650.0 L952.0 649.2 L951.0 648.6 L950.0 648.4 L949.0 649.2 L948.0 648.8 L947.0 649.6 L946.0 649.4 L945.0 648.6 L944.0 648.2 L943.0 649.7 L942.0 648.6 L941.0 649.4 L940.0 648.4 L939.0 650.7 L938.0 649.4 L937.0 648.8 L936.0 649.2 L935.0 649.3 L934.0 649.2 L933.0 649.3 L932.0 649.3 L931.0 649.3 L930.0 648.7 L929.0 647.8 L928.0 649.2 L927.0 648.1 L926.0 648.5 L925.0 648.4 L924.0 648.6 L923.0 647.8 L922.0 648.7 L921.0 648.9 L920.0 648.7 L919.0 647.8 L918.0 648.3 L917.0 648.7 L916.0 647.9 L915.0 647.5 L914.0 648.5 L913.0 648.7 L912.0 647.7 L911.0 648.2 L910.0 648.1 L909.0 647.9 L908.0 647.7 L907.0 647.2 L906.0 647.9 L905.0 647.0 L904.0 647.8 L903.0 647.2 L902.0 646.8 L901.0 647.0 L900.0 647.5 L899.0 650.1 L898.0 646.9 L897.0 646.9 L896.0 646.9 L895.0 647.6 L894.0 647.7 L893.0 646.8 L892.0 647.3 L891.0 646.8 L890.0 646.9 L889.0 647.2 L888.0 646.0 L887.0 645.9 L886.0 646.8 L885.0 647.0 L884.0 646.2 L883.0 646.0 L882.0 646.9 L881.0 646.9 L880.0 645.6 L879.0 645.4 L878.0 646.5 L877.0 646.6 Z"/><path fill="#22c8d3" d="M1052.0 461.6 L1053.0 460.0 L1054.0 458.8 L1055.0 459.0 L1056.0 460.2 L1057.0 460.9 L1058.0 460.9 L1059.0 460.2 L1060.0 460.1 L1061.0 458.3 L1062.0 460.8 L1063.0 458.3 L1064.0 460.4 L1065.0 458.8 L1066.0 459.1 L1067.0 456.7 L1068.0 459.5 L1069.0 459.1 L1070.0 459.5 L1071.0 457.9 L1072.0 459.7 L1073.0 460.0 L1074.0 459.7 L1075.0 458.5 L1076.0 459.8 L1077.0 458.6 L1078.0 458.4 L1079.0 459.5 L1080.0 458.8 L1081.0 459.3 L1082.0 458.3 L1083.0 458.5 L1084.0 459.1 L1085.0 458.5 L1086.0 456.7 L1087.0 458.9 L1088.0 457.7 L1089.0 456.0 L1090.0 457.7 L1091.0 458.9 L1092.0 459.0 L1093.0 459.0 L1094.0 458.1 L1095.0 458.3 L1096.0 458.5 L1097.0 457.9 L1098.0 457.7 L1099.0 457.5 L1100.0 457.9 L1101.0 457.3 L1102.0 457.2 L1103.0 457.4 L1104.0 458.2 L1105.0 457.2 L1106.0 458.5 L1107.0 458.0 L1108.0 457.7 L1109.0 456.6 L1110.0 457.3 L1111.0 458.4 L1112.0 457.1 L1113.0 457.0 L1114.0 457.0 L1115.0 458.3 L1116.0 456.9 L1117.0 456.9 L1118.0 457.9 L1119.0 455.8 L1120.0 457.6 L1121.0 458.1 L1122.0 457.2 L1123.0 458.1 L1124.0 457.2 L1125.0 457.6 L1126.0 455.5 L1127.0 456.4 L1128.0 456.4 L1129.0 457.5 L1130.0 457.6 L1131.0 457.1 L1132.0 457.5 L1133.0 457.4 L1134.0 457.5 L1135.0 457.2 L1136.0 456.3 L1137.0 457.4 L1138.0 456.4 L1139.0 456.5 L1140.0 457.0 L1141.0 457.7 L1142.0 456.7 L1143.0 456.6 L1144.0 456.9 L1145.0 456.1 L1146.0 457.4 L1147.0 456.7 L1148.0 456.7 L1149.0 457.4 L1150.0 456.9 L1151.0 457.4 L1152.0 456.4 L1153.0 455.5 L1154.0 456.2 L1155.0 457.1 L1156.0 456.5 L1157.0 456.8 L1158.0 455.9 L1159.0 457.3 L1160.0 456.5 L1161.0 457.2 L1162.0 456.3 L1163.0 456.3 L1164.0 455.0 L1165.0 456.0 L1166.0 456.9 L1167.0 456.4 L1168.0 456.8 L1169.0 456.6 L1170.0 456.4 L1171.0 456.4 L1172.0 457.0 L1173.0 456.7 L1174.0 456.0 L1175.0 456.1 L1176.0 457.1 L1177.0 456.0 L1178.0 456.3 L1179.0 456.5 L1180.0 456.9 L1181.0 453.7 L1182.0 456.4 L1183.0 456.9 L1184.0 456.4 L1185.0 457.0 L1186.0 456.3 L1187.0 456.0 L1188.0 455.6 L1189.0 457.0 L1190.0 455.1 L1191.0 455.4 L1192.0 456.4 L1193.0 454.7 L1194.0 455.8 L1195.0 457.0 L1196.0 455.7 L1197.0 457.0 L1198.0 457.0 L1199.0 456.9 L1200.0 455.8 L1201.0 457.1 L1202.0 456.1 L1203.0 454.7 L1204.0 456.8 L1205.0 456.2 L1206.0 457.0 L1207.0 456.5 L1208.0 454.0 L1209.0 456.8 L1210.0 456.2 L1211.0 456.8 L1212.0 456.6 L1213.0 456.5 L1214.0 456.5 L1215.0 455.9 L1216.0 456.2 L1217.0 456.6 L1218.0 455.3 L1219.0 455.6 L1220.0 456.7 L1221.0 456.3 L1222.0 454.4 L1223.0 455.7 L1224.0 456.9 L1225.0 456.7 L1226.0 456.5 L1226.0 463.5 L1225.0 464.2 L1224.0 465.0 L1223.0 464.6 L1222.0 464.9 L1221.0 465.0 L1220.0 464.8 L1219.0 464.5 L1218.0 464.3 L1217.0 464.3 L1216.0 464.9 L1215.0 464.9 L1214.0 463.6 L1213.0 464.8 L1212.0 464.5 L1211.0 466.9 L1210.0 463.8 L1209.0 464.1 L1208.0 463.6 L1207.0 463.5 L1206.0 464.1 L1205.0 465.1 L1204.0 464.5 L1203.0 463.9 L1202.0 464.0 L1201.0 464.6 L1200.0 465.0 L1199.0 465.4 L1198.0 464.9 L1197.0 463.8 L1196.0 464.6 L1195.0 464.1 L1194.0 464.3 L1193.0 463.7 L1192.0 466.1 L1191.0 463.9 L1190.0 465.1 L1189.0 464.5 L1188.0 464.9 L1187.0 464.4 L1186.0 464.9 L1185.0 464.1 L1184.0 464.9 L1183.0 463.8 L1182.0 464.2 L1181.0 464.6 L1180.0 464.8 L1179.0 463.8 L1178.0 464.0 L1177.0 464.4 L1176.0 465.0 L1175.0 464.2 L1174.0 464.8 L1173.0 465.0 L1172.0 464.0 L1171.0 464.4 L1170.0 464.8 L1169.0 464.4 L1168.0 464.7 L1167.0 465.2 L1166.0 465.2 L1165.0 466.3 L1164.0 464.1 L1163.0 464.4 L1162.0 464.7 L1161.0 465.5 L1160.0 464.8 L1159.0 467.3 L1158.0 465.4 L1157.0 465.0 L1156.0 464.0 L1155.0 464.5 L1154.0 464.8 L1153.0 464.3 L1152.0 465.3 L1151.0 464.6 L1150.0 465.0 L1149.0 464.1 L1148.0 464.6 L1147.0 465.2 L1146.0 465.5 L1145.0 465.5 L1144.0 465.1 L1143.0 465.2 L1142.0 465.1 L1141.0 465.6 L1140.0 464.9 L1139.0 465.0 L1138.0 465.6 L1137.0 465.4 L1136.0 465.7 L1135.0 464.3 L1134.0 464.9 L1133.0 464.9 L1132.0 464.9 L1131.0 465.1 L1130.0 465.1 L1129.0 465.2 L1128.0 465.0 L1127.0 466.0 L1126.0 465.1 L1125.0 465.8 L1124.0 465.8 L1123.0 465.3 L1122.0 465.3 L1121.0 465.2 L1120.0 465.2 L1119.0 465.1 L1118.0 466.9 L1117.0 464.9 L1116.0 465.7 L1115.0 466.3 L1114.0 465.4 L1113.0 464.9 L1112.0 465.5 L1111.0 466.4 L1110.0 465.3 L1109.0 465.9 L1108.0 465.7 L1107.0 465.0 L1106.0 465.6 L1105.0 466.1 L1104.0 465.9 L1103.0 465.9 L1102.0 465.5 L1101.0 466.7 L1100.0 465.2 L1099.0 466.8 L1098.0 465.7 L1097.0 466.2 L1096.0 466.0 L1095.0 466.5 L1094.0 468.1 L1093.0 466.7 L1092.0 465.7 L1091.0 466.6 L1090.0 466.7 L1089.0 465.7 L1088.0 466.6 L1087.0 467.6 L1086.0 466.3 L1085.0 466.3 L1084.0 467.2 L1083.0 467.5 L1082.0 466.0 L1081.0 467.4 L1080.0 466.8 L1079.0 467.1 L1078.0 467.1 L1077.0 466.4 L1076.0 467.3 L1075.0 467.8 L1074.0 467.0 L1073.0 467.4 L1072.0 467.2 L1071.0 468.1 L1070.0 467.9 L1069.0 467.0 L1068.0 468.3 L1067.0 467.3 L1066.0 467.3 L1065.0 468.3 L1064.0 467.2 L1063.0 468.6 L1062.0 467.4 L1061.0 468.7 L1060.0 467.5 L1059.0 469.0 L1058.0 469.4 L1057.0 468.9 L1056.0 469.3 L1055.0 468.4 L1054.0 469.3 L1053.0 468.9 L1052.0 468.6 Z"/><path fill="#f6ec1c" d="M1052.0 641.3 L1053.0 641.5 L1054.0 642.2 L1055.0 641.0 L1056.0 641.0 L1057.0 641.1 L1058.0 640.4 L1059.0 641.4 L1060.0 642.0 L1061.0 640.8 L1062.0 641.5 L1063.0 640.8 L1064.0 639.6 L1065.0 641.6 L1066.0 641.3 L1067.0 641.0 L1068.0 641.3 L1069.0 641.4 L1070.0 641.7 L1071.0 641.4 L1072.0 641.6 L1073.0 641.8 L1074.0 641.2 L1075.0 642.1 L1076.0 641.6 L1077.0 641.0 L1078.0 641.2 L1079.0 641.3 L1080.0 639.6 L1081.0 640.9 L1082.0 642.1 L1083.0 641.3 L1084.0 641.2 L1085.0 642.1 L1086.0 641.3 L1087.0 641.8 L1088.0 641.0 L1089.0 640.7 L1090.0 641.2 L1091.0 641.3 L1092.0 641.3 L1093.0 640.4 L1094.0 641.1 L1095.0 638.6 L1096.0 641.6 L1097.0 640.8 L1098.0 641.7 L1099.0 641.8 L1100.0 641.2 L1101.0 642.0 L1102.0 641.8 L1103.0 641.9 L1104.0 640.8 L1105.0 640.1 L1106.0 641.4 L1107.0 642.3 L1108.0 640.8 L1109.0 641.1 L1110.0 641.0 L1111.0 642.3 L1112.0 641.3 L1113.0 641.6 L1114.0 641.4 L1115.0 640.8 L1116.0 639.4 L1117.0 640.9 L1118.0 641.5 L1119.0 641.3 L1120.0 641.2 L1121.0 641.3 L1122.0 641.1 L1123.0 641.6 L1124.0 641.8 L1125.0 640.9 L1126.0 641.2 L1127.0 642.3 L1128.0 641.8 L1129.0 641.8 L1130.0 642.0 L1131.0 640.7 L1132.0 641.3 L1133.0 640.9 L1134.0 641.4 L1135.0 640.8 L1136.0 641.1 L1137.0 640.8 L1138.0 641.0 L1139.0 641.9 L1140.0 642.1 L1141.0 642.0 L1142.0 641.5 L1143.0 641.7 L1144.0 640.9 L1145.0 641.2 L1146.0 641.7 L1147.0 642.3 L1148.0 641.9 L1149.0 641.4 L1150.0 641.8 L1151.0 642.1 L1152.0 641.1 L1153.0 641.9 L1154.0 640.8 L1155.0 642.0 L1156.0 641.2 L1157.0 641.7 L1158.0 641.3 L1159.0 642.1 L1160.0 641.5 L1161.0 641.1 L1162.0 642.0 L1163.0 641.4 L1164.0 642.2 L1165.0 641.9 L1166.0 641.8 L1167.0 641.9 L1168.0 642.1 L1169.0 641.1 L1170.0 642.1 L1171.0 641.2 L1172.0 641.7 L1173.0 641.9 L1174.0 640.9 L1175.0 641.5 L1176.0 641.8 L1177.0 642.2 L1178.0 641.4 L1179.0 642.3 L1180.0 641.5 L1181.0 642.3 L1182.0 641.6 L1183.0 641.1 L1184.0 641.9 L1185.0 641.1 L1186.0 641.0 L1187.0 641.3 L1188.0 641.6 L1189.0 641.1 L1190.0 641.6 L1191.0 641.9 L1192.0 641.9 L1193.0 642.2 L1194.0 641.3 L1195.0 640.9 L1196.0 641.4 L1197.0 641.0 L1198.0 641.2 L1199.0 640.9 L1200.0 642.0 L1201.0 641.7 L1202.0 641.1 L1203.0 641.9 L1204.0 641.4 L1205.0 641.8 L1206.0 641.1 L1207.0 640.9 L1208.0 641.0 L1209.0 641.8 L1210.0 640.9 L1211.0 642.1 L1212.0 641.4 L1213.0 640.7 L1214.0 641.1 L1215.0 642.1 L1216.0 641.2 L1217.0 641.1 L1218.0 641.3 L1219.0 641.6 L1220.0 640.8 L1221.0 641.6 L1222.0 641.7 L1223.0 642.2 L1224.0 641.4 L1225.0 642.0 L1226.0 641.3 L1226.0 649.3 L1225.0 650.7 L1224.0 649.6 L1223.0 650.2 L1222.0 650.5 L1221.0 650.2 L1220.0 649.5 L1219.0 649.8 L1218.0 650.2 L1217.0 649.7 L1216.0 649.5 L1215.0 650.0 L1214.0 650.3 L1213.0 650.2 L1212.0 650.6 L1211.0 650.6 L1210.0 649.7 L1209.0 650.6 L1208.0 652.6 L1207.0 650.7 L1206.0 649.6 L1205.0 649.9 L1204.0 650.0 L1203.0 649.6 L1202.0 650.3 L1201.0 650.2 L1200.0 652.0 L1199.0 650.0 L1198.0 650.8 L1197.0 649.3 L1196.0 650.4 L1195.0 651.6 L1194.0 649.6 L1193.0 650.0 L1192.0 650.4 L1191.0 650.3 L1190.0 650.8 L1189.0 650.4 L1188.0 649.5 L1187.0 650.5 L1186.0 649.4 L1185.0 649.8 L1184.0 649.4 L1183.0 650.4 L1182.0 650.8 L1181.0 650.2 L1180.0 650.2 L1179.0 650.5 L1178.0 650.5 L1177.0 650.7 L1176.0 649.4 L1175.0 651.3 L1174.0 652.0 L1173.0 650.2 L1172.0 650.0 L1171.0 650.2 L1170.0 649.8 L1169.0 650.6 L1168.0 650.3 L1167.0 649.8 L1166.0 651.3 L1165.0 650.2 L1164.0 652.4 L1163.0 650.1 L1162.0 649.7 L1161.0 650.9 L1160.0 650.1 L1159.0 650.9 L1158.0 649.5 L1157.0 650.1 L1156.0 649.4 L1155.0 650.3 L1154.0 650.4 L1153.0 652.3 L1152.0 650.0 L1151.0 649.5 L1150.0 649.5 L1149.0 650.8 L1148.0 649.9 L1147.0 650.5 L1146.0 650.1 L1145.0 649.3 L1144.0 650.1 L1143.0 649.3 L1142.0 649.6 L1141.0 650.2 L1140.0 650.3 L1139.0 652.5 L1138.0 649.3 L1137.0 649.8 L1136.0 650.3 L1135.0 649.8 L1134.0 651.7 L1133.0 649.3 L1132.0 650.3 L1131.0 649.9 L1130.0 650.3 L1129.0 652.3 L1128.0 649.9 L1127.0 650.5 L1126.0 650.5 L1125.0 650.6 L1124.0 650.6 L1123.0 649.8 L1122.0 650.8 L1121.0 650.4 L1120.0 650.0 L1119.0 650.8 L1118.0 649.9 L1117.0 650.0 L1116.0 650.3 L1115.0 649.9 L1114.0 650.7 L1113.0 650.3 L1112.0 650.1 L1111.0 649.5 L1110.0 650.4 L1109.0 649.9 L1108.0 650.7 L1107.0 649.3 L1106.0 650.7 L1105.0 650.0 L1104.0 650.6 L1103.0 650.4 L1102.0 649.8 L1101.0 649.5 L1100.0 650.4 L1099.0 650.2 L1098.0 650.5 L1097.0 649.8 L1096.0 650.2 L1095.0 650.7 L1094.0 649.9 L1093.0 650.1 L1092.0 650.1 L1091.0 650.0 L1090.0 650.7 L1089.0 651.0 L1088.0 650.6 L1087.0 653.1 L1086.0 649.9 L1085.0 650.4 L1084.0 650.1 L1083.0 650.9 L1082.0 650.6 L1081.0 650.3 L1080.0 649.8 L1079.0 650.6 L1078.0 649.4 L1077.0 650.1 L1076.0 650.6 L1075.0 650.6 L1074.0 650.8 L1073.0 650.6 L1072.0 650.5 L1071.0 649.5 L1070.0 649.8 L1069.0 650.1 L1068.0 652.3 L1067.0 650.0 L1066.0 650.5 L1065.0 650.3 L1064.0 649.4 L1063.0 649.5 L1062.0 650.7 L1061.0 649.8 L1060.0 650.5 L1059.0 650.9 L1058.0 650.0 L1057.0 651.6 L1056.0 650.1 L1055.0 650.3 L1054.0 649.5 L1053.0 649.5 L1052.0 649.6 Z"/><path fill="#f6ec1c" d="M1226.5 461.3 L1227.5 463.5 L1228.5 463.3 L1229.5 463.1 L1230.5 462.4 L1231.5 462.7 L1232.5 463.2 L1233.5 462.5 L1234.5 463.2 L1235.5 462.6 L1236.5 463.4 L1237.5 462.8 L1238.5 460.3 L1239.5 463.3 L1240.5 463.5 L1241.5 462.4 L1242.5 463.6 L1243.5 462.5 L1244.5 463.4 L1245.5 463.4 L1246.5 463.6 L1247.5 463.4 L1248.5 462.4 L1249.5 462.6 L1250.5 462.1 L1251.5 462.1 L1252.5 462.4 L1253.5 463.6 L1254.5 462.8 L1255.5 462.8 L1256.5 462.1 L1257.5 462.9 L1258.5 463.1 L1259.5 462.6 L1260.5 463.2 L1261.5 462.5 L1262.5 462.6 L1263.5 463.7 L1264.5 463.0 L1265.5 462.7 L1266.5 462.6 L1267.5 462.3 L1268.5 462.8 L1269.5 463.0 L1270.5 462.5 L1271.5 460.9 L1272.5 463.2 L1273.5 460.8 L1274.5 463.5 L1275.5 463.0 L1276.5 463.1 L1277.5 462.1 L1278.5 463.3 L1279.5 463.1 L1280.5 463.0 L1281.5 463.2 L1282.5 462.9 L1283.5 462.6 L1284.5 462.8 L1285.5 462.3 L1286.5 462.5 L1287.5 462.8 L1288.5 462.9 L1289.5 462.5 L1290.5 462.7 L1291.5 463.3 L1292.5 462.1 L1293.5 462.2 L1294.5 462.1 L1295.5 462.2 L1296.5 463.5 L1297.5 463.0 L1298.5 463.2 L1299.5 462.3 L1300.5 463.4 L1301.5 462.6 L1302.5 463.7 L1303.5 463.6 L1304.5 462.6 L1305.5 462.5 L1306.5 463.7 L1307.5 463.2 L1308.5 462.5 L1309.5 462.5 L1310.5 463.6 L1311.5 463.4 L1312.5 463.0 L1313.5 463.2 L1314.5 462.7 L1315.5 462.8 L1316.5 461.0 L1317.5 463.3 L1318.5 462.2 L1319.5 462.5 L1320.5 463.3 L1321.5 463.3 L1322.5 462.8 L1323.5 462.6 L1324.5 463.2 L1325.5 463.1 L1326.5 462.5 L1327.5 462.7 L1328.5 462.5 L1329.5 463.1 L1330.5 463.6 L1331.5 463.1 L1332.5 462.4 L1333.5 462.4 L1334.5 463.1 L1335.5 462.4 L1336.5 462.7 L1337.5 462.7 L1338.5 462.7 L1339.5 463.1 L1340.5 463.1 L1341.5 462.7 L1342.5 463.1 L1343.5 463.6 L1344.5 462.6 L1345.5 462.8 L1346.5 462.6 L1347.5 462.9 L1348.5 461.8 L1349.5 462.7 L1350.5 463.4 L1351.5 462.8 L1352.5 463.7 L1353.5 462.3 L1354.5 461.2 L1355.5 462.9 L1356.5 462.5 L1357.5 462.6 L1358.5 462.4 L1359.5 463.4 L1360.5 463.6 L1361.5 463.1 L1362.5 463.0 L1363.5 463.7 L1364.5 462.2 L1365.5 463.1 L1366.5 461.9 L1367.5 462.5 L1368.5 463.4 L1369.5 462.7 L1370.5 462.4 L1371.5 462.6 L1372.5 462.9 L1373.5 463.1 L1374.5 463.0 L1375.5 463.1 L1376.5 462.8 L1377.5 460.8 L1378.5 463.1 L1379.5 461.4 L1380.5 462.2 L1381.5 462.4 L1382.5 463.1 L1383.5 463.4 L1384.5 460.6 L1385.5 463.0 L1386.5 463.1 L1387.5 463.5 L1388.5 463.1 L1389.5 462.5 L1390.5 462.7 L1391.5 462.5 L1392.5 463.5 L1393.5 463.4 L1394.5 462.5 L1395.5 463.5 L1396.5 463.2 L1397.5 463.6 L1398.5 461.7 L1399.5 462.4 L1400.5 463.6 L1401.5 462.2 L1401.5 472.1 L1400.5 471.3 L1399.5 470.9 L1398.5 472.3 L1397.5 470.9 L1396.5 471.3 L1395.5 471.8 L1394.5 471.8 L1393.5 471.2 L1392.5 470.7 L1391.5 472.0 L1390.5 471.9 L1389.5 472.2 L1388.5 471.3 L1387.5 470.8 L1386.5 471.9 L1385.5 471.1 L1384.5 471.5 L1383.5 471.9 L1382.5 470.8 L1381.5 472.2 L1380.5 473.7 L1379.5 471.4 L1378.5 471.1 L1377.5 472.3 L1376.5 471.6 L1375.5 471.9 L1374.5 471.0 L1373.5 470.7 L1372.5 471.2 L1371.5 471.6 L1370.5 470.8 L1369.5 474.0 L1368.5 472.4 L1367.5 471.2 L1366.5 471.5 L1365.5 472.0 L1364.5 471.5 L1363.5 473.4 L1362.5 472.2 L1361.5 470.7 L1360.5 472.0 L1359.5 471.8 L1358.5 472.1 L1357.5 471.1 L1356.5 471.8 L1355.5 471.4 L1354.5 471.8 L1353.5 472.0 L1352.5 472.2 L1351.5 470.9 L1350.5 472.1 L1349.5 471.3 L1348.5 471.0 L1347.5 471.5 L1346.5 471.0 L1345.5 471.6 L1344.5 471.3 L1343.5 471.3 L1342.5 472.0 L1341.5 471.3 L1340.5 471.3 L1339.5 470.9 L1338.5 471.1 L1337.5 472.3 L1336.5 471.4 L1335.5 471.8 L1334.5 471.3 L1333.5 471.5 L1332.5 472.1 L1331.5 471.2 L1330.5 471.5 L1329.5 471.1 L1328.5 471.9 L1327.5 470.8 L1326.5 470.8 L1325.5 472.2 L1324.5 471.5 L1323.5 472.0 L1322.5 471.6 L1321.5 471.7 L1320.5 471.0 L1319.5 472.0 L1318.5 471.9 L1317.5 471.9 L1316.5 472.2 L1315.5 471.9 L1314.5 470.8 L1313.5 471.4 L1312.5 470.7 L1311.5 472.0 L1310.5 471.9 L1309.5 471.1 L1308.5 471.3 L1307.5 471.4 L1306.5 472.0 L1305.5 471.0 L1304.5 471.3 L1303.5 471.4 L1302.5 472.2 L1301.5 471.3 L1300.5 472.2 L1299.5 471.7 L1298.5 471.2 L1297.5 473.7 L1296.5 473.6 L1295.5 471.6 L1294.5 472.2 L1293.5 471.2 L1292.5 471.0 L1291.5 471.3 L1290.5 470.8 L1289.5 470.9 L1288.5 472.2 L1287.5 472.7 L1286.5 470.8 L1285.5 471.8 L1284.5 471.1 L1283.5 471.0 L1282.5 472.3 L1281.5 471.7 L1280.5 471.8 L1279.5 471.4 L1278.5 471.8 L1277.5 471.2 L1276.5 470.8 L1275.5 472.7 L1274.5 470.9 L1273.5 471.0 L1272.5 472.0 L1271.5 472.2 L1270.5 470.8 L1269.5 471.1 L1268.5 472.0 L1267.5 471.9 L1266.5 470.8 L1265.5 471.0 L1264.5 472.0 L1263.5 471.5 L1262.5 471.2 L1261.5 470.9 L1260.5 471.3 L1259.5 471.7 L1258.5 472.2 L1257.5 471.7 L1256.5 471.3 L1255.5 471.6 L1254.5 472.0 L1253.5 472.3 L1252.5 472.0 L1251.5 471.5 L1250.5 472.6 L1249.5 471.0 L1248.5 471.1 L1247.5 471.8 L1246.5 471.4 L1245.5 472.2 L1244.5 472.8 L1243.5 472.1 L1242.5 471.4 L1241.5 471.3 L1240.5 471.1 L1239.5 472.2 L1238.5 472.1 L1237.5 472.0 L1236.5 472.1 L1235.5 472.6 L1234.5 471.3 L1233.5 471.2 L1232.5 471.6 L1231.5 471.3 L1230.5 470.8 L1229.5 471.8 L1228.5 472.3 L1227.5 471.6 L1226.5 471.1 Z"/><path fill="#22c8d3" d="M1226.5 637.3 L1227.5 637.5 L1228.5 638.8 L1229.5 638.5 L1230.5 638.1 L1231.5 638.8 L1232.5 638.2 L1233.5 639.0 L1234.5 638.0 L1235.5 638.0 L1236.5 637.9 L1237.5 638.1 L1238.5 638.1 L1239.5 638.8 L1240.5 639.1 L1241.5 638.4 L1242.5 638.4 L1243.5 639.2 L1244.5 638.5 L1245.5 638.7 L1246.5 639.0 L1247.5 639.4 L1248.5 640.1 L1249.5 638.8 L1250.5 640.0 L1251.5 639.8 L1252.5 639.4 L1253.5 638.9 L1254.5 639.8 L1255.5 637.8 L1256.5 639.6 L1257.5 640.2 L1258.5 640.2 L1259.5 639.4 L1260.5 639.2 L1261.5 640.8 L1262.5 640.7 L1263.5 640.1 L1264.5 639.6 L1265.5 640.7 L1266.5 640.9 L1267.5 640.9 L1268.5 640.9 L1269.5 640.4 L1270.5 641.0 L1271.5 640.9 L1272.5 640.1 L1273.5 638.1 L1274.5 641.2 L1275.5 640.7 L1276.5 640.3 L1277.5 640.3 L1278.5 639.9 L1279.5 641.4 L1280.5 640.9 L1281.5 641.4 L1282.5 640.3 L1283.5 640.8 L1284.5 640.5 L1285.5 641.2 L1286.5 640.1 L1287.5 641.5 L1288.5 641.3 L1289.5 640.3 L1290.5 641.6 L1291.5 641.4 L1292.5 641.2 L1293.5 640.9 L1294.5 640.5 L1295.5 641.4 L1296.5 640.3 L1297.5 641.6 L1298.5 640.7 L1299.5 641.4 L1300.5 641.4 L1301.5 641.2 L1302.5 640.6 L1303.5 641.7 L1304.5 640.7 L1305.5 638.6 L1306.5 639.6 L1307.5 641.0 L1308.5 640.7 L1309.5 640.6 L1310.5 641.3 L1311.5 641.2 L1312.5 641.9 L1313.5 641.8 L1314.5 641.3 L1315.5 641.5 L1316.5 640.9 L1317.5 641.5 L1318.5 641.0 L1319.5 641.9 L1320.5 641.4 L1321.5 641.5 L1322.5 641.3 L1323.5 642.0 L1324.5 641.0 L1325.5 641.7 L1326.5 640.8 L1327.5 641.9 L1328.5 641.2 L1329.5 642.4 L1330.5 641.2 L1331.5 641.1 L1332.5 642.0 L1333.5 641.5 L1334.5 641.1 L1335.5 641.9 L1336.5 641.8 L1337.5 642.5 L1338.5 641.9 L1339.5 641.6 L1340.5 641.2 L1341.5 641.6 L1342.5 642.1 L1343.5 642.2 L1344.5 642.4 L1345.5 641.7 L1346.5 641.3 L1347.5 641.7 L1348.5 641.1 L1349.5 642.5 L1350.5 642.0 L1351.5 642.3 L1352.5 641.9 L1353.5 641.2 L1354.5 641.6 L1355.5 640.8 L1356.5 641.8 L1357.5 642.0 L1358.5 641.0 L1359.5 642.2 L1360.5 642.6 L1361.5 641.5 L1362.5 641.5 L1363.5 641.5 L1364.5 641.5 L1365.5 639.2 L1366.5 642.6 L1367.5 640.6 L1368.5 641.5 L1369.5 641.5 L1370.5 642.4 L1371.5 641.3 L1372.5 641.3 L1373.5 642.6 L1374.5 642.6 L1375.5 642.0 L1376.5 642.7 L1377.5 642.7 L1378.5 641.6 L1379.5 641.7 L1380.5 642.0 L1381.5 641.8 L1382.5 642.2 L1383.5 642.7 L1384.5 642.0 L1385.5 642.1 L1386.5 641.8 L1387.5 641.6 L1388.5 642.4 L1389.5 642.2 L1390.5 642.2 L1391.5 641.8 L1392.5 642.4 L1393.5 642.4 L1394.5 641.7 L1395.5 642.4 L1396.5 641.9 L1397.5 642.1 L1398.5 642.3 L1399.5 642.5 L1400.5 640.2 L1401.5 642.0 L1401.5 650.4 L1400.5 649.4 L1399.5 649.3 L1398.5 650.3 L1397.5 649.6 L1396.5 649.5 L1395.5 650.8 L1394.5 649.5 L1393.5 650.7 L1392.5 650.2 L1391.5 649.7 L1390.5 650.3 L1389.5 650.5 L1388.5 649.3 L1387.5 650.0 L1386.5 650.3 L1385.5 650.6 L1384.5 650.4 L1383.5 650.2 L1382.5 650.6 L1381.5 649.6 L1380.5 650.6 L1379.5 650.8 L1378.5 650.8 L1377.5 650.1 L1376.5 651.4 L1375.5 649.9 L1374.5 649.6 L1373.5 650.5 L1372.5 649.5 L1371.5 650.3 L1370.5 650.4 L1369.5 650.0 L1368.5 649.7 L1367.5 649.7 L1366.5 650.1 L1365.5 651.0 L1364.5 649.6 L1363.5 649.8 L1362.5 649.5 L1361.5 649.4 L1360.5 649.5 L1359.5 649.6 L1358.5 649.7 L1357.5 650.7 L1356.5 649.1 L1355.5 649.3 L1354.5 650.4 L1353.5 650.4 L1352.5 650.0 L1351.5 649.9 L1350.5 650.4 L1349.5 651.5 L1348.5 649.8 L1347.5 649.1 L1346.5 649.5 L1345.5 650.5 L1344.5 650.3 L1343.5 650.5 L1342.5 649.8 L1341.5 649.4 L1340.5 650.3 L1339.5 650.0 L1338.5 649.4 L1337.5 649.6 L1336.5 649.6 L1335.5 649.7 L1334.5 650.0 L1333.5 649.6 L1332.5 649.2 L1331.5 649.7 L1330.5 650.1 L1329.5 652.1 L1328.5 649.0 L1327.5 650.2 L1326.5 649.2 L1325.5 652.1 L1324.5 649.6 L1323.5 650.0 L1322.5 649.7 L1321.5 649.2 L1320.5 650.0 L1319.5 650.1 L1318.5 650.1 L1317.5 649.9 L1316.5 649.0 L1315.5 650.1 L1314.5 650.0 L1313.5 650.2 L1312.5 649.5 L1311.5 649.9 L1310.5 649.3 L1309.5 648.9 L1308.5 648.7 L1307.5 649.6 L1306.5 648.6 L1305.5 648.5 L1304.5 650.7 L1303.5 648.8 L1302.5 649.0 L1301.5 648.6 L1300.5 649.6 L1299.5 649.6 L1298.5 650.5 L1297.5 648.6 L1296.5 648.8 L1295.5 649.5 L1294.5 648.6 L1293.5 649.4 L1292.5 648.6 L1291.5 648.7 L1290.5 649.7 L1289.5 649.4 L1288.5 650.0 L1287.5 650.3 L1286.5 649.6 L1285.5 648.3 L1284.5 648.0 L1283.5 648.0 L1282.5 649.5 L1281.5 648.7 L1280.5 648.8 L1279.5 648.3 L1278.5 648.1 L1277.5 649.2 L1276.5 648.0 L1275.5 651.3 L1274.5 650.6 L1273.5 648.8 L1272.5 649.1 L1271.5 647.8 L1270.5 647.6 L1269.5 647.8 L1268.5 648.6 L1267.5 647.9 L1266.5 647.8 L1265.5 647.8 L1264.5 648.7 L1263.5 648.4 L1262.5 648.6 L1261.5 648.5 L1260.5 649.1 L1259.5 647.7 L1258.5 647.4 L1257.5 647.2 L1256.5 647.3 L1255.5 647.0 L1254.5 647.9 L1253.5 648.2 L1252.5 647.8 L1251.5 646.9 L1250.5 647.9 L1249.5 647.0 L1248.5 648.1 L1247.5 647.5 L1246.5 646.5 L1245.5 647.2 L1244.5 647.5 L1243.5 646.8 L1242.5 647.3 L1241.5 646.6 L1240.5 648.0 L1239.5 647.4 L1238.5 646.5 L1237.5 646.7 L1236.5 647.2 L1235.5 646.0 L1234.5 647.9 L1233.5 646.9 L1232.5 645.9 L1231.5 648.7 L1230.5 646.7 L1229.5 646.3 L1228.5 646.1 L1227.5 646.0 L1226.5 646.5 Z"/><path fill="#22c8d3" d="M1401.5 461.1 L1402.5 461.0 L1403.5 461.1 L1404.5 460.1 L1405.5 460.1 L1406.5 460.8 L1407.5 459.6 L1408.5 460.1 L1409.5 459.9 L1410.5 460.8 L1411.5 459.2 L1412.5 460.3 L1413.5 460.3 L1414.5 460.3 L1415.5 459.2 L1416.5 459.6 L1417.5 458.9 L1418.5 460.3 L1419.5 459.0 L1420.5 459.9 L1421.5 459.9 L1422.5 458.8 L1423.5 458.7 L1424.5 459.1 L1425.5 459.8 L1426.5 459.2 L1427.5 458.4 L1428.5 458.8 L1429.5 459.0 L1430.5 458.0 L1431.5 459.1 L1432.5 458.3 L1433.5 458.7 L1434.5 458.5 L1435.5 458.5 L1436.5 458.5 L1437.5 457.7 L1438.5 458.1 L1439.5 457.8 L1440.5 458.7 L1441.5 459.0 L1442.5 457.8 L1443.5 458.9 L1444.5 458.3 L1445.5 457.4 L1446.5 458.0 L1447.5 458.6 L1448.5 458.2 L1449.5 456.5 L1450.5 458.7 L1451.5 457.9 L1452.5 458.5 L1453.5 457.6 L1454.5 457.5 L1455.5 458.5 L1456.5 457.0 L1457.5 457.1 L1458.5 458.4 L1459.5 455.8 L1460.5 457.5 L1461.5 457.6 L1462.5 457.0 L1463.5 457.1 L1464.5 456.8 L1465.5 457.2 L1466.5 458.1 L1467.5 458.1 L1468.5 458.2 L1469.5 457.1 L1470.5 457.3 L1471.5 456.9 L1472.5 456.8 L1473.5 456.8 L1474.5 457.0 L1475.5 457.0 L1476.5 456.6 L1477.5 456.5 L1478.5 457.4 L1479.5 457.5 L1480.5 455.2 L1481.5 457.9 L1482.5 456.7 L1483.5 456.5 L1484.5 456.5 L1485.5 457.7 L1486.5 457.1 L1487.5 457.2 L1488.5 457.1 L1489.5 456.7 L1490.5 457.7 L1491.5 456.4 L1492.5 457.1 L1493.5 456.9 L1494.5 456.8 L1495.5 457.4 L1496.5 456.9 L1497.5 457.5 L1498.5 456.6 L1499.5 456.5 L1500.5 456.8 L1501.5 456.5 L1502.5 456.2 L1503.5 457.4 L1504.5 456.0 L1505.5 456.1 L1506.5 454.6 L1507.5 456.0 L1508.5 456.9 L1509.5 457.3 L1510.5 456.4 L1511.5 456.0 L1512.5 457.0 L1513.5 456.4 L1514.5 456.7 L1515.5 457.1 L1516.5 456.5 L1517.5 456.7 L1518.5 455.8 L1519.5 455.9 L1520.5 455.9 L1521.5 456.6 L1522.5 456.7 L1523.5 457.1 L1524.5 456.4 L1525.5 456.9 L1526.5 456.3 L1527.5 456.3 L1528.5 456.0 L1529.5 455.2 L1530.5 456.7 L1531.5 456.2 L1532.5 456.4 L1533.5 455.3 L1534.5 456.0 L1535.5 456.2 L1536.5 457.2 L1537.5 457.2 L1538.5 456.5 L1539.5 455.6 L1540.5 455.9 L1541.5 456.7 L1542.5 456.0 L1543.5 454.3 L1544.5 455.8 L1545.5 455.8 L1546.5 455.8 L1547.5 457.1 L1548.5 455.6 L1549.5 455.8 L1550.5 456.2 L1551.5 456.0 L1552.5 455.7 L1553.5 456.5 L1554.5 454.6 L1555.5 455.6 L1556.5 456.8 L1557.5 456.7 L1558.5 456.1 L1559.5 456.0 L1560.5 456.3 L1561.5 456.3 L1562.5 457.0 L1563.5 455.6 L1564.5 456.6 L1565.5 455.5 L1566.5 456.9 L1567.5 456.3 L1568.5 456.3 L1569.5 456.3 L1570.5 456.8 L1571.5 455.7 L1572.5 455.6 L1573.5 456.9 L1574.5 454.4 L1575.5 455.7 L1576.5 456.1 L1576.5 464.1 L1575.5 464.5 L1574.5 467.5 L1573.5 465.8 L1572.5 463.8 L1571.5 464.3 L1570.5 463.7 L1569.5 463.9 L1568.5 465.0 L1567.5 464.1 L1566.5 464.3 L1565.5 464.2 L1564.5 464.9 L1563.5 463.8 L1562.5 464.6 L1561.5 464.1 L1560.5 464.5 L1559.5 464.9 L1558.5 463.7 L1557.5 463.5 L1556.5 463.9 L1555.5 464.4 L1554.5 465.1 L1553.5 464.5 L1552.5 466.6 L1551.5 464.1 L1550.5 464.7 L1549.5 463.8 L1548.5 463.7 L1547.5 464.1 L1546.5 463.9 L1545.5 465.0 L1544.5 464.7 L1543.5 464.9 L1542.5 463.9 L1541.5 465.1 L1540.5 465.0 L1539.5 464.5 L1538.5 465.2 L1537.5 465.0 L1536.5 464.8 L1535.5 464.0 L1534.5 465.2 L1533.5 463.8 L1532.5 464.4 L1531.5 464.9 L1530.5 465.1 L1529.5 464.3 L1528.5 464.7 L1527.5 464.2 L1526.5 464.7 L1525.5 464.6 L1524.5 464.8 L1523.5 464.7 L1522.5 464.0 L1521.5 466.3 L1520.5 466.1 L1519.5 464.2 L1518.5 465.9 L1517.5 465.3 L1516.5 464.7 L1515.5 465.4 L1514.5 464.2 L1513.5 465.2 L1512.5 465.2 L1511.5 463.9 L1510.5 463.9 L1509.5 464.8 L1508.5 464.9 L1507.5 465.4 L1506.5 465.2 L1505.5 464.5 L1504.5 466.7 L1503.5 465.5 L1502.5 465.4 L1501.5 465.0 L1500.5 464.3 L1499.5 464.3 L1498.5 465.4 L1497.5 464.1 L1496.5 465.4 L1495.5 466.5 L1494.5 465.4 L1493.5 464.9 L1492.5 464.3 L1491.5 465.1 L1490.5 464.5 L1489.5 464.3 L1488.5 465.6 L1487.5 465.7 L1486.5 465.4 L1485.5 465.7 L1484.5 464.6 L1483.5 465.2 L1482.5 465.4 L1481.5 465.8 L1480.5 465.1 L1479.5 465.0 L1478.5 465.3 L1477.5 465.4 L1476.5 465.2 L1475.5 464.5 L1474.5 465.3 L1473.5 465.1 L1472.5 465.3 L1471.5 465.4 L1470.5 465.9 L1469.5 464.7 L1468.5 465.9 L1467.5 464.9 L1466.5 465.8 L1465.5 465.4 L1464.5 466.3 L1463.5 465.3 L1462.5 465.4 L1461.5 465.9 L1460.5 466.1 L1459.5 465.4 L1458.5 465.8 L1457.5 466.0 L1456.5 465.7 L1455.5 465.2 L1454.5 466.6 L1453.5 466.2 L1452.5 466.5 L1451.5 466.0 L1450.5 466.5 L1449.5 466.7 L1448.5 466.4 L1447.5 465.7 L1446.5 465.5 L1445.5 465.4 L1444.5 466.7 L1443.5 465.5 L1442.5 466.8 L1441.5 466.6 L1440.5 465.6 L1439.5 466.6 L1438.5 465.7 L1437.5 465.9 L1436.5 465.8 L1435.5 466.1 L1434.5 467.3 L1433.5 466.7 L1432.5 467.5 L1431.5 466.7 L1430.5 466.4 L1429.5 466.7 L1428.5 467.2 L1427.5 466.4 L1426.5 467.7 L1425.5 466.8 L1424.5 467.3 L1423.5 466.7 L1422.5 468.9 L1421.5 466.8 L1420.5 467.1 L1419.5 467.8 L1418.5 467.8 L1417.5 467.7 L1416.5 469.3 L1415.5 467.6 L1414.5 467.1 L1413.5 467.3 L1412.5 470.3 L1411.5 467.4 L1410.5 468.8 L1409.5 467.4 L1408.5 468.8 L1407.5 468.0 L1406.5 469.2 L1405.5 468.2 L1404.5 467.9 L1403.5 469.4 L1402.5 469.3 L1401.5 469.5 Z"/><path fill="#f6ec1c" d="M1401.5 640.8 L1402.5 641.3 L1403.5 641.8 L1404.5 641.8 L1405.5 641.0 L1406.5 642.1 L1407.5 641.0 L1408.5 641.6 L1409.5 642.1 L1410.5 640.8 L1411.5 642.2 L1412.5 641.6 L1413.5 642.3 L1414.5 642.3 L1415.5 642.1 L1416.5 641.9 L1417.5 640.7 L1418.5 641.9 L1419.5 642.2 L1420.5 641.1 L1421.5 641.2 L1422.5 641.5 L1423.5 641.9 L1424.5 642.0 L1425.5 641.1 L1426.5 642.0 L1427.5 640.7 L1428.5 642.1 L1429.5 641.0 L1430.5 641.7 L1431.5 641.1 L1432.5 639.5 L1433.5 642.2 L1434.5 641.5 L1435.5 641.4 L1436.5 642.0 L1437.5 641.6 L1438.5 641.8 L1439.5 640.1 L1440.5 641.3 L1441.5 641.7 L1442.5 641.5 L1443.5 641.8 L1444.5 641.9 L1445.5 641.7 L1446.5 642.0 L1447.5 642.1 L1448.5 640.7 L1449.5 642.0 L1450.5 641.0 L1451.5 641.9 L1452.5 640.8 L1453.5 641.5 L1454.5 641.5 L1455.5 641.4 L1456.5 641.2 L1457.5 641.7 L1458.5 640.9 L1459.5 640.8 L1460.5 640.7 L1461.5 640.8 L1462.5 642.0 L1463.5 641.7 L1464.5 641.1 L1465.5 641.6 L1466.5 641.6 L1467.5 641.6 L1468.5 641.3 L1469.5 641.4 L1470.5 640.9 L1471.5 641.6 L1472.5 641.0 L1473.5 642.1 L1474.5 639.1 L1475.5 641.4 L1476.5 641.6 L1477.5 639.7 L1478.5 641.0 L1479.5 641.2 L1480.5 642.0 L1481.5 641.7 L1482.5 640.9 L1483.5 641.7 L1484.5 639.8 L1485.5 641.6 L1486.5 641.4 L1487.5 641.1 L1488.5 642.0 L1489.5 642.1 L1490.5 642.1 L1491.5 641.3 L1492.5 642.0 L1493.5 641.8 L1494.5 641.5 L1495.5 641.1 L1496.5 640.5 L1497.5 641.8 L1498.5 641.9 L1499.5 641.6 L1500.5 641.3 L1501.5 641.8 L1502.5 641.6 L1503.5 642.0 L1504.5 641.4 L1505.5 641.4 L1506.5 640.0 L1507.5 642.0 L1508.5 641.3 L1509.5 641.0 L1510.5 640.9 L1511.5 640.8 L1512.5 642.1 L1513.5 640.4 L1514.5 640.2 L1515.5 642.1 L1516.5 641.9 L1517.5 640.7 L1518.5 642.0 L1519.5 641.7 L1520.5 641.8 L1521.5 641.7 L1522.5 641.9 L1523.5 641.2 L1524.5 638.8 L1525.5 640.2 L1526.5 642.0 L1527.5 641.8 L1528.5 641.6 L1529.5 640.8 L1530.5 640.0 L1531.5 641.7 L1532.5 641.2 L1533.5 641.5 L1534.5 639.4 L1535.5 641.1 L1536.5 642.2 L1537.5 640.8 L1538.5 639.5 L1539.5 641.1 L1540.5 641.6 L1541.5 640.9 L1542.5 641.0 L1543.5 641.0 L1544.5 641.3 L1545.5 641.8 L1546.5 640.0 L1547.5 641.4 L1548.5 640.8 L1549.5 642.0 L1550.5 641.9 L1551.5 641.6 L1552.5 641.7 L1553.5 641.8 L1554.5 642.0 L1555.5 641.5 L1556.5 641.3 L1557.5 641.3 L1558.5 641.4 L1559.5 641.7 L1560.5 642.0 L1561.5 641.3 L1562.5 642.1 L1563.5 641.8 L1564.5 640.7 L1565.5 641.0 L1566.5 640.9 L1567.5 639.3 L1568.5 640.8 L1569.5 641.1 L1570.5 641.4 L1571.5 641.1 L1572.5 640.7 L1573.5 642.0 L1574.5 641.2 L1575.5 641.5 L1576.5 641.5 L1576.5 650.4 L1575.5 650.2 L1574.5 650.2 L1573.5 650.8 L1572.5 649.7 L1571.5 650.7 L1570.5 649.6 L1569.5 649.9 L1568.5 649.8 L1567.5 650.7 L1566.5 649.6 L1565.5 650.1 L1564.5 650.6 L1563.5 650.3 L1562.5 649.6 L1561.5 649.3 L1560.5 650.5 L1559.5 651.7 L1558.5 650.5 L1557.5 650.1 L1556.5 650.9 L1555.5 650.9 L1554.5 650.3 L1553.5 649.8 L1552.5 650.6 L1551.5 650.4 L1550.5 650.7 L1549.5 650.5 L1548.5 651.2 L1547.5 650.1 L1546.5 650.3 L1545.5 650.5 L1544.5 650.7 L1543.5 649.4 L1542.5 649.3 L1541.5 650.8 L1540.5 649.3 L1539.5 652.2 L1538.5 649.8 L1537.5 649.7 L1536.5 650.7 L1535.5 649.8 L1534.5 649.7 L1533.5 652.7 L1532.5 649.7 L1531.5 650.9 L1530.5 650.5 L1529.5 650.1 L1528.5 649.4 L1527.5 649.8 L1526.5 650.4 L1525.5 649.8 L1524.5 650.8 L1523.5 649.6 L1522.5 650.0 L1521.5 649.5 L1520.5 650.8 L1519.5 649.3 L1518.5 650.0 L1517.5 650.4 L1516.5 650.6 L1515.5 650.8 L1514.5 649.8 L1513.5 649.4 L1512.5 649.6 L1511.5 650.6 L1510.5 651.4 L1509.5 650.2 L1508.5 650.0 L1507.5 650.9 L1506.5 651.2 L1505.5 650.7 L1504.5 650.2 L1503.5 649.6 L1502.5 652.4 L1501.5 650.4 L1500.5 649.7 L1499.5 650.3 L1498.5 650.9 L1497.5 649.5 L1496.5 650.1 L1495.5 650.4 L1494.5 650.0 L1493.5 649.5 L1492.5 650.1 L1491.5 649.8 L1490.5 650.1 L1489.5 651.8 L1488.5 649.9 L1487.5 650.4 L1486.5 650.0 L1485.5 649.8 L1484.5 650.2 L1483.5 650.4 L1482.5 650.9 L1481.5 650.0 L1480.5 650.2 L1479.5 649.8 L1478.5 649.9 L1477.5 651.8 L1476.5 649.9 L1475.5 650.2 L1474.5 649.5 L1473.5 650.2 L1472.5 649.7 L1471.5 649.8 L1470.5 650.2 L1469.5 651.9 L1468.5 652.7 L1467.5 650.8 L1466.5 651.7 L1465.5 649.5 L1464.5 650.0 L1463.5 649.5 L1462.5 649.5 L1461.5 650.0 L1460.5 651.7 L1459.5 651.5 L1458.5 649.5 L1457.5 649.7 L1456.5 650.8 L1455.5 650.5 L1454.5 649.5 L1453.5 652.5 L1452.5 650.8 L1451.5 649.5 L1450.5 650.6 L1449.5 649.4 L1448.5 649.5 L1447.5 649.7 L1446.5 650.2 L1445.5 650.7 L1444.5 650.2 L1443.5 650.3 L1442.5 649.6 L1441.5 650.1 L1440.5 649.9 L1439.5 650.1 L1438.5 650.0 L1437.5 649.5 L1436.5 650.8 L1435.5 649.6 L1434.5 650.2 L1433.5 650.9 L1432.5 649.4 L1431.5 650.3 L1430.5 649.3 L1429.5 650.5 L1428.5 652.0 L1427.5 650.1 L1426.5 649.8 L1425.5 650.1 L1424.5 650.3 L1423.5 649.4 L1422.5 649.5 L1421.5 650.2 L1420.5 650.5 L1419.5 649.5 L1418.5 650.5 L1417.5 649.5 L1416.5 650.5 L1415.5 650.2 L1414.5 650.5 L1413.5 650.2 L1412.5 650.3 L1411.5 651.5 L1410.5 649.6 L1409.5 649.5 L1408.5 650.7 L1407.5 652.1 L1406.5 649.5 L1405.5 650.1 L1404.5 651.6 L1403.5 649.5 L1402.5 650.1 L1401.5 650.4 Z"/><path fill="#f6ec1c" d="M1576.5 462.6 L1577.5 463.0 L1578.5 462.9 L1579.5 463.4 L1580.5 462.7 L1581.5 463.2 L1582.5 463.1 L1583.5 463.5 L1584.5 462.3 L1585.5 462.3 L1586.5 463.2 L1587.5 463.5 L1588.5 462.3 L1589.5 462.6 L1590.5 463.7 L1591.5 463.6 L1592.5 463.3 L1593.5 462.3 L1594.5 462.8 L1595.5 463.2 L1596.5 462.9 L1597.5 462.8 L1598.5 463.1 L1599.5 463.6 L1600.5 462.2 L1601.5 463.2 L1602.5 460.4 L1603.5 462.3 L1604.5 462.4 L1605.5 462.5 L1606.5 461.6 L1607.5 462.1 L1608.5 463.6 L1609.5 462.6 L1610.5 462.8 L1611.5 462.8 L1612.5 462.7 L1613.5 462.2 L1614.5 463.4 L1615.5 463.2 L1616.5 462.8 L1617.5 463.1 L1618.5 462.3 L1619.5 463.2 L1620.5 462.6 L1621.5 463.7 L1622.5 463.6 L1623.5 462.3 L1624.5 462.2 L1625.5 462.2 L1626.5 462.7 L1627.5 463.7 L1628.5 463.0 L1629.5 463.7 L1630.5 463.2 L1631.5 463.7 L1632.5 463.1 L1633.5 462.8 L1634.5 462.9 L1635.5 462.2 L1636.5 463.4 L1637.5 463.6 L1638.5 463.0 L1639.5 463.5 L1640.5 463.2 L1641.5 462.5 L1642.5 462.6 L1643.5 463.6 L1644.5 463.5 L1645.5 462.7 L1646.5 463.1 L1647.5 462.7 L1648.5 462.1 L1649.5 462.4 L1650.5 462.8 L1651.5 462.8 L1652.5 463.4 L1653.5 462.5 L1654.5 462.9 L1655.5 462.3 L1656.5 463.1 L1657.5 462.9 L1658.5 462.7 L1659.5 461.3 L1660.5 462.2 L1661.5 462.5 L1662.5 462.3 L1663.5 463.4 L1664.5 463.1 L1665.5 462.2 L1666.5 462.1 L1667.5 462.6 L1668.5 462.1 L1669.5 462.7 L1670.5 462.8 L1671.5 463.0 L1672.5 462.8 L1673.5 462.1 L1674.5 462.3 L1675.5 462.8 L1676.5 463.1 L1677.5 463.2 L1678.5 462.2 L1679.5 462.9 L1680.5 463.1 L1681.5 463.2 L1682.5 463.5 L1683.5 463.1 L1684.5 463.0 L1685.5 462.5 L1686.5 463.1 L1687.5 462.7 L1688.5 460.0 L1689.5 462.2 L1690.5 462.6 L1691.5 463.2 L1692.5 463.2 L1693.5 460.3 L1694.5 462.1 L1695.5 463.3 L1696.5 462.5 L1697.5 462.4 L1698.5 462.5 L1699.5 463.3 L1700.5 462.7 L1701.5 463.4 L1702.5 463.1 L1703.5 462.9 L1704.5 463.5 L1705.5 463.4 L1706.5 462.7 L1707.5 463.5 L1708.5 462.7 L1709.5 462.5 L1710.5 462.5 L1711.5 460.0 L1712.5 463.6 L1713.5 463.4 L1714.5 463.6 L1715.5 463.1 L1716.5 462.3 L1717.5 463.5 L1718.5 463.4 L1719.5 463.5 L1720.5 462.5 L1721.5 463.0 L1722.5 462.6 L1723.5 463.2 L1724.5 462.7 L1725.5 462.7 L1726.5 463.5 L1727.5 463.5 L1728.5 462.7 L1729.5 463.3 L1730.5 462.4 L1731.5 461.3 L1732.5 462.3 L1733.5 462.9 L1734.5 463.7 L1735.5 462.8 L1736.5 462.1 L1737.5 462.7 L1738.5 462.1 L1739.5 462.5 L1740.5 462.8 L1741.5 463.3 L1742.5 462.8 L1743.5 462.8 L1744.5 463.1 L1745.5 463.1 L1746.5 463.6 L1747.5 463.0 L1748.5 463.6 L1749.5 463.1 L1750.5 461.3 L1750.5 472.0 L1749.5 472.2 L1748.5 470.8 L1747.5 470.8 L1746.5 472.1 L1745.5 471.2 L1744.5 471.5 L1743.5 470.9 L1742.5 471.0 L1741.5 470.9 L1740.5 472.2 L1739.5 471.5 L1738.5 471.2 L1737.5 471.8 L1736.5 472.1 L1735.5 471.4 L1734.5 471.9 L1733.5 470.8 L1732.5 471.6 L1731.5 472.1 L1730.5 471.6 L1729.5 470.8 L1728.5 471.0 L1727.5 471.9 L1726.5 471.2 L1725.5 471.2 L1724.5 471.4 L1723.5 471.1 L1722.5 471.9 L1721.5 471.4 L1720.5 472.0 L1719.5 471.6 L1718.5 470.7 L1717.5 474.1 L1716.5 471.7 L1715.5 471.2 L1714.5 472.1 L1713.5 471.6 L1712.5 470.8 L1711.5 472.2 L1710.5 471.4 L1709.5 471.1 L1708.5 472.1 L1707.5 471.8 L1706.5 471.4 L1705.5 471.0 L1704.5 470.8 L1703.5 472.1 L1702.5 472.3 L1701.5 471.4 L1700.5 472.2 L1699.5 472.2 L1698.5 471.2 L1697.5 472.2 L1696.5 471.0 L1695.5 472.1 L1694.5 470.7 L1693.5 471.7 L1692.5 472.2 L1691.5 473.5 L1690.5 472.3 L1689.5 471.3 L1688.5 471.3 L1687.5 470.8 L1686.5 472.0 L1685.5 471.3 L1684.5 471.8 L1683.5 471.7 L1682.5 470.8 L1681.5 471.8 L1680.5 471.3 L1679.5 470.8 L1678.5 471.3 L1677.5 472.3 L1676.5 471.4 L1675.5 473.2 L1674.5 471.2 L1673.5 470.8 L1672.5 471.5 L1671.5 471.0 L1670.5 470.8 L1669.5 472.1 L1668.5 471.2 L1667.5 471.5 L1666.5 471.6 L1665.5 473.8 L1664.5 471.3 L1663.5 471.6 L1662.5 472.2 L1661.5 470.7 L1660.5 471.1 L1659.5 471.3 L1658.5 472.2 L1657.5 473.9 L1656.5 471.1 L1655.5 471.6 L1654.5 472.0 L1653.5 471.0 L1652.5 471.4 L1651.5 471.2 L1650.5 471.5 L1649.5 471.8 L1648.5 472.1 L1647.5 471.0 L1646.5 471.2 L1645.5 471.2 L1644.5 471.3 L1643.5 471.3 L1642.5 470.9 L1641.5 471.6 L1640.5 471.6 L1639.5 470.8 L1638.5 471.8 L1637.5 472.8 L1636.5 471.0 L1635.5 472.0 L1634.5 471.6 L1633.5 471.9 L1632.5 471.6 L1631.5 471.0 L1630.5 470.9 L1629.5 472.0 L1628.5 471.3 L1627.5 471.1 L1626.5 471.9 L1625.5 471.9 L1624.5 471.4 L1623.5 470.8 L1622.5 472.2 L1621.5 471.9 L1620.5 471.6 L1619.5 471.4 L1618.5 471.4 L1617.5 471.7 L1616.5 471.9 L1615.5 471.1 L1614.5 471.0 L1613.5 470.9 L1612.5 471.2 L1611.5 470.8 L1610.5 470.8 L1609.5 471.2 L1608.5 470.9 L1607.5 472.2 L1606.5 471.4 L1605.5 472.2 L1604.5 471.7 L1603.5 471.4 L1602.5 471.7 L1601.5 471.9 L1600.5 471.9 L1599.5 472.0 L1598.5 472.2 L1597.5 471.7 L1596.5 472.1 L1595.5 471.1 L1594.5 471.8 L1593.5 472.0 L1592.5 471.2 L1591.5 471.9 L1590.5 472.2 L1589.5 472.1 L1588.5 471.3 L1587.5 471.6 L1586.5 472.2 L1585.5 471.0 L1584.5 473.2 L1583.5 471.9 L1582.5 472.2 L1581.5 472.0 L1580.5 471.7 L1579.5 472.3 L1578.5 472.3 L1577.5 470.7 L1576.5 470.9 Z"/><path fill="#22c8d3" d="M1576.5 637.8 L1577.5 638.0 L1578.5 637.9 L1579.5 638.6 L1580.5 638.9 L1581.5 638.8 L1582.5 637.6 L1583.5 638.4 L1584.5 638.1 L1585.5 638.6 L1586.5 639.2 L1587.5 638.2 L1588.5 638.8 L1589.5 638.7 L1590.5 639.4 L1591.5 639.7 L1592.5 638.6 L1593.5 639.2 L1594.5 638.7 L1595.5 639.1 L1596.5 639.4 L1597.5 638.9 L1598.5 639.2 L1599.5 640.0 L1600.5 640.2 L1601.5 640.2 L1602.5 640.3 L1603.5 640.3 L1604.5 640.0 L1605.5 639.3 L1606.5 639.0 L1607.5 639.4 L1608.5 639.7 L1609.5 638.7 L1610.5 640.5 L1611.5 639.4 L1612.5 639.9 L1613.5 640.5 L1614.5 640.1 L1615.5 640.4 L1616.5 640.1 L1617.5 640.7 L1618.5 640.3 L1619.5 639.7 L1620.5 640.4 L1621.5 640.6 L1622.5 640.8 L1623.5 640.7 L1624.5 639.7 L1625.5 639.8 L1626.5 640.3 L1627.5 641.2 L1628.5 640.6 L1629.5 640.5 L1630.5 639.3 L1631.5 640.7 L1632.5 640.7 L1633.5 640.6 L1634.5 640.3 L1635.5 640.4 L1636.5 641.2 L1637.5 640.5 L1638.5 641.1 L1639.5 640.4 L1640.5 641.5 L1641.5 640.2 L1642.5 641.0 L1643.5 640.7 L1644.5 641.0 L1645.5 641.8 L1646.5 641.3 L1647.5 640.4 L1648.5 641.5 L1649.5 641.6 L1650.5 641.0 L1651.5 640.6 L1652.5 641.9 L1653.5 641.3 L1654.5 641.8 L1655.5 640.6 L1656.5 641.8 L1657.5 641.4 L1658.5 641.3 L1659.5 640.9 L1660.5 640.8 L1661.5 641.9 L1662.5 640.3 L1663.5 641.5 L1664.5 640.8 L1665.5 640.7 L1666.5 641.2 L1667.5 641.2 L1668.5 641.1 L1669.5 641.0 L1670.5 641.9 L1671.5 639.6 L1672.5 641.5 L1673.5 640.9 L1674.5 639.2 L1675.5 641.2 L1676.5 642.2 L1677.5 641.2 L1678.5 641.3 L1679.5 642.2 L1680.5 642.1 L1681.5 639.7 L1682.5 641.7 L1683.5 641.3 L1684.5 639.8 L1685.5 639.1 L1686.5 642.5 L1687.5 641.4 L1688.5 639.2 L1689.5 640.1 L1690.5 641.2 L1691.5 641.7 L1692.5 642.2 L1693.5 642.0 L1694.5 641.5 L1695.5 641.3 L1696.5 641.3 L1697.5 642.3 L1698.5 642.1 L1699.5 641.2 L1700.5 642.4 L1701.5 642.0 L1702.5 641.5 L1703.5 642.3 L1704.5 642.3 L1705.5 642.4 L1706.5 641.3 L1707.5 642.5 L1708.5 642.0 L1709.5 641.4 L1710.5 641.5 L1711.5 641.4 L1712.5 642.5 L1713.5 641.4 L1714.5 642.1 L1715.5 639.6 L1716.5 642.7 L1717.5 642.2 L1718.5 641.9 L1719.5 641.2 L1720.5 641.2 L1721.5 642.1 L1722.5 641.6 L1723.5 641.8 L1724.5 642.4 L1725.5 641.4 L1726.5 641.3 L1727.5 640.0 L1728.5 642.6 L1729.5 642.1 L1730.5 641.3 L1731.5 641.0 L1732.5 641.9 L1733.5 642.2 L1734.5 641.8 L1735.5 641.6 L1736.5 642.6 L1737.5 641.7 L1738.5 641.5 L1739.5 642.3 L1740.5 642.8 L1741.5 641.8 L1742.5 642.2 L1743.5 642.2 L1744.5 641.7 L1745.5 641.8 L1746.5 642.7 L1747.5 642.5 L1748.5 641.3 L1749.5 641.9 L1750.5 640.7 L1750.5 650.1 L1749.5 650.7 L1748.5 650.0 L1747.5 649.6 L1746.5 650.0 L1745.5 650.2 L1744.5 650.2 L1743.5 649.8 L1742.5 650.0 L1741.5 649.4 L1740.5 649.4 L1739.5 651.5 L1738.5 649.3 L1737.5 651.1 L1736.5 649.4 L1735.5 649.3 L1734.5 650.3 L1733.5 649.6 L1732.5 652.0 L1731.5 649.9 L1730.5 650.3 L1729.5 649.8 L1728.5 649.8 L1727.5 650.5 L1726.5 649.7 L1725.5 649.5 L1724.5 650.4 L1723.5 650.0 L1722.5 650.2 L1721.5 649.3 L1720.5 650.5 L1719.5 649.8 L1718.5 650.1 L1717.5 649.2 L1716.5 649.7 L1715.5 649.4 L1714.5 650.1 L1713.5 651.2 L1712.5 650.0 L1711.5 649.4 L1710.5 650.4 L1709.5 650.0 L1708.5 649.9 L1707.5 649.6 L1706.5 649.8 L1705.5 651.4 L1704.5 650.2 L1703.5 650.4 L1702.5 649.8 L1701.5 649.1 L1700.5 650.6 L1699.5 649.0 L1698.5 650.1 L1697.5 650.0 L1696.5 650.4 L1695.5 649.6 L1694.5 649.2 L1693.5 649.6 L1692.5 649.5 L1691.5 650.3 L1690.5 649.6 L1689.5 650.5 L1688.5 649.9 L1687.5 651.9 L1686.5 649.7 L1685.5 650.1 L1684.5 650.8 L1683.5 650.1 L1682.5 649.2 L1681.5 650.2 L1680.5 649.0 L1679.5 649.0 L1678.5 650.3 L1677.5 649.1 L1676.5 649.8 L1675.5 650.0 L1674.5 649.2 L1673.5 649.8 L1672.5 650.2 L1671.5 652.1 L1670.5 648.8 L1669.5 649.3 L1668.5 648.7 L1667.5 649.6 L1666.5 649.0 L1665.5 649.6 L1664.5 649.2 L1663.5 649.9 L1662.5 648.8 L1661.5 649.8 L1660.5 650.1 L1659.5 649.0 L1658.5 648.9 L1657.5 649.2 L1656.5 648.9 L1655.5 649.7 L1654.5 650.4 L1653.5 649.6 L1652.5 649.5 L1651.5 649.0 L1650.5 648.7 L1649.5 648.4 L1648.5 648.8 L1647.5 649.0 L1646.5 648.5 L1645.5 648.6 L1644.5 648.5 L1643.5 648.3 L1642.5 649.5 L1641.5 648.8 L1640.5 648.5 L1639.5 649.5 L1638.5 648.7 L1637.5 648.5 L1636.5 649.4 L1635.5 648.6 L1634.5 649.2 L1633.5 649.2 L1632.5 648.2 L1631.5 648.5 L1630.5 649.3 L1629.5 649.1 L1628.5 648.6 L1627.5 648.4 L1626.5 649.2 L1625.5 648.4 L1624.5 648.0 L1623.5 651.0 L1622.5 647.7 L1621.5 648.1 L1620.5 650.8 L1619.5 648.9 L1618.5 649.0 L1617.5 647.9 L1616.5 648.5 L1615.5 648.6 L1614.5 647.9 L1613.5 648.8 L1612.5 648.2 L1611.5 648.3 L1610.5 647.4 L1609.5 648.3 L1608.5 648.2 L1607.5 647.5 L1606.5 648.2 L1605.5 647.1 L1604.5 647.1 L1603.5 650.1 L1602.5 647.9 L1601.5 647.4 L1600.5 649.0 L1599.5 647.1 L1598.5 647.9 L1597.5 646.5 L1596.5 647.2 L1595.5 647.3 L1594.5 646.7 L1593.5 646.6 L1592.5 647.5 L1591.5 646.7 L1590.5 646.1 L1589.5 646.1 L1588.5 646.2 L1587.5 646.8 L1586.5 646.6 L1585.5 647.3 L1584.5 646.7 L1583.5 647.2 L1582.5 646.4 L1581.5 645.6 L1580.5 648.2 L1579.5 646.1 L1578.5 645.8 L1577.5 646.0 L1576.5 645.4 Z"/><path fill="#e02d55" d="M3.5 713.4 L4.5 714.6 L5.5 715.1 L6.5 714.1 L7.5 715.0 L8.5 715.3 L9.5 714.6 L10.5 715.5 L11.5 714.3 L12.5 715.5 L13.5 715.2 L14.5 714.1 L15.5 715.0 L16.5 715.1 L17.5 715.0 L18.5 714.5 L19.5 714.9 L20.5 714.6 L21.5 714.5 L22.5 715.2 L23.5 715.0 L24.5 714.4 L25.5 715.1 L26.5 715.4 L27.5 714.0 L28.5 715.4 L29.5 715.3 L30.5 714.0 L31.5 714.7 L32.5 714.2 L33.5 715.3 L34.5 714.6 L35.5 714.2 L36.5 715.0 L37.5 714.3 L38.5 714.9 L39.5 715.5 L40.5 714.7 L41.5 714.7 L42.5 715.5 L43.5 714.9 L44.5 714.3 L45.5 714.7 L46.5 714.4 L47.5 714.8 L48.5 713.9 L49.5 714.4 L50.5 714.9 L51.5 714.8 L52.5 714.9 L53.5 715.0 L54.5 714.9 L55.5 714.9 L56.5 714.8 L57.5 714.6 L58.5 714.2 L59.5 714.2 L60.5 714.5 L61.5 714.1 L62.5 715.1 L63.5 714.8 L64.5 714.6 L65.5 715.4 L66.5 715.1 L67.5 711.8 L68.5 714.7 L69.5 714.3 L70.5 715.0 L71.5 714.5 L72.5 713.9 L73.5 714.2 L74.5 715.0 L75.5 715.2 L76.5 715.2 L77.5 714.6 L78.5 714.2 L79.5 714.7 L80.5 714.9 L81.5 715.4 L82.5 714.5 L83.5 714.1 L84.5 715.3 L85.5 714.7 L86.5 713.3 L87.5 712.8 L88.5 715.1 L89.5 714.3 L90.5 713.9 L91.5 714.0 L92.5 714.3 L93.5 714.0 L94.5 715.4 L95.5 714.0 L96.5 714.3 L97.5 714.4 L98.5 714.1 L99.5 715.3 L100.5 714.2 L101.5 714.8 L102.5 715.0 L103.5 715.1 L104.5 714.9 L105.5 714.9 L106.5 714.9 L107.5 715.0 L108.5 714.3 L109.5 714.0 L110.5 714.3 L111.5 714.1 L112.5 714.4 L113.5 715.5 L114.5 715.3 L115.5 714.4 L116.5 714.7 L117.5 714.4 L118.5 714.6 L119.5 714.4 L120.5 715.3 L121.5 715.4 L122.5 713.9 L123.5 714.6 L124.5 714.8 L125.5 714.1 L126.5 714.4 L127.5 715.3 L128.5 713.2 L129.5 715.2 L130.5 714.7 L131.5 714.8 L132.5 714.9 L133.5 714.5 L134.5 714.1 L135.5 714.8 L136.5 714.9 L137.5 713.4 L138.5 714.0 L139.5 714.8 L140.5 714.3 L141.5 714.6 L142.5 715.1 L143.5 715.1 L144.5 715.3 L145.5 715.2 L146.5 715.2 L147.5 714.4 L148.5 714.1 L149.5 714.8 L150.5 715.3 L151.5 713.9 L152.5 715.2 L153.5 715.3 L154.5 714.9 L155.5 714.1 L156.5 714.6 L157.5 714.4 L158.5 714.8 L159.5 715.2 L160.5 714.4 L161.5 715.1 L162.5 714.1 L163.5 715.5 L164.5 715.2 L165.5 714.5 L166.5 714.3 L167.5 715.4 L168.5 714.5 L169.5 712.6 L170.5 714.7 L171.5 715.2 L172.5 714.0 L173.5 713.9 L174.5 715.2 L175.5 715.1 L176.5 713.9 L177.5 714.4 L178.5 714.1 L179.5 715.1 L180.5 715.2 L181.5 715.4 L182.5 714.8 L183.5 714.7 L184.5 712.2 L185.5 715.0 L186.5 715.5 L187.5 715.4 L188.5 714.4 L189.5 715.2 L190.5 715.3 L191.5 714.6 L192.5 715.5 L193.5 712.1 L194.5 714.9 L195.5 714.0 L196.5 715.2 L197.5 714.0 L198.5 714.5 L199.5 715.0 L200.5 714.6 L201.5 714.4 L202.5 715.0 L203.5 715.1 L204.5 715.4 L205.5 714.3 L206.5 715.2 L207.5 714.3 L208.5 714.8 L209.5 715.4 L210.5 714.6 L211.5 715.3 L212.5 714.6 L213.5 714.6 L214.5 715.4 L215.5 714.3 L216.5 714.9 L217.5 714.0 L218.5 715.1 L219.5 714.7 L220.5 714.9 L221.5 715.3 L222.5 715.2 L223.5 714.2 L224.5 714.6 L225.5 714.8 L226.5 714.2 L227.5 715.1 L228.5 714.2 L229.5 714.8 L230.5 714.7 L231.5 714.4 L232.5 715.1 L233.5 714.1 L234.5 714.2 L235.5 715.4 L236.5 714.3 L237.5 715.0 L238.5 714.8 L239.5 714.4 L240.5 714.3 L241.5 715.4 L242.5 715.1 L243.5 714.5 L244.5 714.1 L245.5 712.2 L246.5 714.1 L247.5 714.8 L248.5 712.9 L249.5 714.5 L250.5 714.0 L251.5 714.5 L252.5 714.3 L253.5 715.3 L254.5 714.4 L255.5 714.4 L256.5 714.2 L257.5 714.7 L258.5 714.5 L259.5 714.1 L260.5 713.9 L261.5 714.3 L262.5 714.1 L263.5 715.5 L264.5 714.9 L265.5 714.2 L266.5 712.9 L267.5 715.2 L268.5 713.9 L269.5 714.1 L270.5 715.1 L271.5 714.1 L272.5 714.0 L273.5 712.7 L274.5 714.5 L275.5 714.9 L276.5 715.4 L277.5 714.3 L278.5 715.5 L279.5 714.0 L280.5 714.2 L281.5 714.4 L282.5 714.9 L283.5 714.8 L284.5 714.6 L285.5 714.0 L286.5 714.2 L287.5 714.6 L288.5 712.6 L289.5 714.5 L290.5 715.2 L291.5 713.9 L292.5 714.5 L293.5 714.3 L294.5 714.2 L295.5 714.1 L296.5 715.1 L297.5 715.0 L298.5 715.2 L299.5 714.7 L300.5 715.4 L301.5 715.0 L302.5 714.5 L303.5 715.3 L304.5 714.0 L305.5 714.1 L306.5 714.7 L307.5 715.4 L308.5 714.6 L309.5 715.2 L310.5 713.5 L311.5 714.2 L312.5 715.1 L313.5 715.5 L314.5 714.7 L315.5 714.3 L316.5 713.9 L317.5 714.9 L318.5 713.7 L319.5 714.0 L320.5 714.7 L321.5 714.4 L322.5 714.2 L323.5 714.0 L324.5 715.0 L325.5 714.2 L326.5 715.4 L327.5 714.1 L328.5 714.9 L329.5 715.3 L330.5 715.4 L331.5 715.3 L332.5 714.2 L333.5 714.0 L334.5 713.2 L335.5 715.4 L336.5 715.4 L337.5 715.0 L338.5 715.2 L339.5 714.1 L340.5 715.3 L341.5 715.2 L342.5 715.1 L343.5 715.3 L344.5 715.1 L345.5 715.1 L346.5 714.7 L347.5 714.2 L348.5 714.2 L349.5 714.4 L350.5 715.4 L351.5 714.6 L352.5 715.4 L353.5 715.5 L354.5 714.8 L355.5 714.6 L356.5 714.9 L357.5 715.0 L358.5 713.0 L359.5 714.8 L360.5 714.0 L361.5 715.2 L362.5 715.1 L363.5 715.2 L364.5 714.8 L365.5 714.8 L366.5 714.7 L367.5 712.2 L368.5 715.1 L369.5 715.0 L370.5 714.1 L371.5 714.5 L372.5 714.7 L373.5 715.2 L374.5 715.2 L375.5 715.1 L376.5 715.3 L377.5 714.4 L378.5 714.5 L379.5 714.0 L380.5 715.2 L381.5 715.1 L382.5 714.5 L383.5 715.2 L384.5 714.0 L385.5 714.7 L386.5 714.0 L387.5 714.9 L388.5 715.0 L389.5 715.5 L390.5 714.2 L391.5 714.5 L392.5 714.3 L393.5 714.4 L394.5 714.2 L395.5 714.0 L396.5 714.4 L397.5 715.3 L398.5 714.1 L399.5 714.9 L400.5 714.6 L401.5 715.4 L402.5 714.2 L403.5 714.3 L404.5 714.1 L405.5 715.2 L406.5 714.1 L407.5 715.3 L408.5 714.4 L409.5 714.0 L410.5 714.5 L411.5 714.8 L412.5 714.0 L413.5 714.6 L414.5 714.2 L415.5 714.7 L416.5 715.4 L417.5 713.0 L418.5 714.5 L419.5 715.2 L420.5 714.5 L421.5 715.1 L422.5 714.0 L423.5 714.0 L424.5 714.6 L425.5 714.2 L426.5 714.9 L427.5 715.5 L428.5 714.3 L429.5 714.6 L430.5 715.1 L431.5 714.6 L432.5 715.4 L433.5 715.2 L434.5 714.3 L435.5 715.0 L436.5 714.3 L437.5 715.0 L438.5 715.2 L439.5 715.1 L440.5 714.2 L441.5 715.4 L442.5 715.0 L443.5 715.1 L444.5 714.7 L445.5 715.1 L446.5 712.6 L447.5 714.2 L448.5 714.8 L449.5 714.7 L450.5 715.1 L451.5 714.3 L452.5 715.2 L453.5 715.4 L454.5 715.4 L455.5 714.0 L456.5 715.1 L457.5 714.4 L458.5 714.3 L459.5 715.4 L460.5 714.3 L461.5 715.1 L462.5 712.7 L463.5 714.4 L464.5 715.4 L465.5 714.0 L466.5 714.5 L467.5 714.3 L468.5 714.3 L469.5 715.4 L470.5 714.0 L471.5 714.6 L472.5 715.1 L473.5 714.0 L474.5 714.5 L475.5 714.3 L476.5 715.3 L477.5 715.3 L478.5 714.0 L479.5 715.1 L480.5 713.9 L481.5 715.1 L482.5 715.0 L483.5 714.5 L484.5 715.0 L485.5 714.0 L486.5 715.3 L487.5 714.9 L488.5 715.0 L489.5 715.1 L490.5 715.2 L491.5 714.5 L492.5 714.6 L493.5 713.9 L494.5 714.9 L495.5 715.5 L496.5 714.9 L497.5 714.4 L498.5 715.0 L499.5 715.2 L500.5 713.9 L501.5 715.5 L502.5 715.1 L503.5 714.2 L504.5 715.3 L505.5 714.7 L506.5 715.1 L507.5 713.4 L508.5 714.2 L509.5 715.0 L510.5 714.2 L511.5 714.7 L512.5 715.4 L513.5 715.3 L514.5 714.8 L515.5 714.7 L516.5 715.5 L517.5 715.5 L518.5 714.3 L519.5 715.4 L520.5 715.2 L521.5 714.1 L522.5 713.9 L523.5 714.1 L524.5 714.6 L525.5 714.0 L526.5 714.5 L527.5 714.3 L528.5 715.1 L529.5 715.0 L530.5 714.1 L531.5 715.3 L532.5 714.4 L533.5 714.3 L534.5 714.3 L535.5 714.3 L536.5 714.4 L537.5 714.1 L538.5 715.4 L539.5 714.4 L540.5 714.6 L541.5 714.5 L542.5 714.2 L543.5 715.3 L544.5 714.0 L545.5 715.1 L546.5 714.9 L547.5 714.4 L548.5 715.2 L549.5 714.5 L550.5 715.4 L551.5 715.1 L552.5 715.4 L553.5 714.1 L554.5 713.9 L555.5 712.4 L556.5 714.7 L557.5 714.7 L558.5 715.4 L559.5 715.3 L560.5 714.8 L561.5 715.2 L562.5 715.3 L563.5 715.4 L564.5 715.3 L565.5 714.3 L566.5 715.2 L567.5 712.2 L568.5 714.5 L569.5 715.3 L570.5 714.1 L571.5 715.0 L572.5 714.2 L573.5 714.3 L574.5 714.1 L575.5 713.9 L576.5 715.0 L577.5 714.3 L578.5 715.0 L579.5 714.0 L580.5 715.0 L581.5 714.8 L582.5 714.9 L583.5 715.5 L584.5 714.6 L585.5 714.4 L586.5 714.4 L587.5 715.4 L588.5 714.5 L589.5 714.7 L590.5 715.2 L591.5 714.7 L592.5 714.7 L593.5 714.2 L594.5 712.2 L595.5 714.4 L596.5 715.0 L597.5 714.4 L598.5 715.0 L599.5 714.2 L600.5 714.6 L601.5 714.0 L602.5 715.2 L603.5 715.0 L604.5 715.3 L605.5 714.4 L606.5 714.9 L607.5 714.7 L608.5 715.4 L609.5 714.9 L610.5 712.6 L611.5 714.3 L612.5 715.1 L613.5 714.5 L614.5 714.5 L615.5 714.0 L616.5 715.2 L617.5 714.6 L618.5 715.5 L619.5 712.1 L620.5 715.1 L621.5 715.4 L622.5 714.5 L623.5 715.5 L624.5 714.5 L625.5 714.8 L626.5 714.4 L627.5 714.6 L628.5 714.2 L629.5 715.0 L630.5 715.2 L631.5 715.4 L632.5 715.0 L633.5 714.8 L634.5 715.4 L635.5 711.6 L636.5 715.1 L637.5 714.8 L638.5 715.4 L639.5 715.1 L640.5 714.4 L641.5 714.9 L642.5 715.1 L643.5 715.2 L644.5 712.8 L645.5 714.2 L646.5 715.3 L647.5 714.7 L648.5 714.1 L649.5 714.4 L650.5 715.4 L651.5 714.1 L652.5 715.0 L653.5 714.3 L654.5 714.8 L655.5 715.1 L656.5 713.9 L657.5 714.1 L658.5 714.0 L659.5 715.0 L660.5 714.9 L661.5 714.3 L662.5 714.9 L663.5 714.8 L664.5 715.1 L665.5 715.0 L666.5 714.3 L667.5 714.6 L668.5 714.8 L669.5 714.0 L670.5 714.0 L671.5 714.0 L672.5 714.7 L673.5 713.9 L674.5 714.7 L675.5 714.3 L676.5 714.5 L677.5 714.5 L678.5 715.1 L679.5 713.7 L680.5 714.4 L681.5 715.3 L682.5 714.1 L683.5 714.8 L684.5 715.3 L685.5 715.0 L686.5 715.4 L687.5 714.4 L688.5 714.8 L689.5 714.6 L690.5 714.5 L691.5 714.2 L692.5 713.9 L693.5 714.2 L694.5 714.6 L695.5 715.3 L696.5 715.0 L697.5 714.8 L698.5 714.4 L699.5 715.5 L700.5 714.1 L701.5 714.1 L702.5 714.6 L703.5 715.0 L704.5 714.0 L705.5 715.4 L706.5 714.1 L707.5 714.7 L708.5 714.0 L709.5 715.2 L710.5 713.9 L711.5 715.1 L712.5 714.5 L713.5 715.5 L714.5 714.1 L715.5 714.3 L716.5 714.4 L717.5 715.5 L718.5 714.4 L719.5 712.2 L720.5 715.2 L721.5 714.6 L722.5 714.1 L723.5 714.8 L724.5 715.3 L725.5 714.3 L726.5 714.0 L727.5 714.4 L728.5 714.5 L729.5 715.1 L730.5 714.9 L731.5 714.9 L732.5 714.5 L733.5 715.4 L734.5 715.2 L735.5 714.7 L736.5 715.1 L737.5 713.2 L738.5 714.1 L739.5 714.3 L740.5 714.8 L741.5 715.3 L742.5 714.6 L743.5 714.8 L744.5 714.4 L745.5 714.4 L746.5 714.7 L747.5 714.6 L748.5 715.3 L749.5 714.1 L750.5 714.9 L751.5 715.4 L752.5 714.0 L753.5 714.1 L754.5 715.0 L755.5 714.1 L756.5 714.9 L757.5 715.4 L758.5 714.1 L759.5 715.1 L760.5 714.5 L761.5 714.3 L762.5 715.2 L763.5 714.2 L764.5 714.9 L765.5 714.4 L766.5 715.1 L767.5 715.3 L768.5 714.6 L769.5 714.6 L770.5 713.9 L771.5 714.2 L772.5 714.3 L773.5 713.0 L774.5 714.2 L775.5 714.4 L776.5 714.6 L777.5 715.4 L778.5 715.3 L779.5 715.4 L780.5 715.1 L781.5 714.0 L782.5 714.1 L783.5 714.1 L784.5 715.3 L785.5 714.6 L786.5 714.0 L787.5 714.8 L788.5 714.5 L789.5 714.4 L790.5 714.6 L791.5 714.4 L792.5 714.9 L793.5 714.5 L794.5 714.5 L795.5 715.4 L796.5 715.4 L797.5 715.1 L798.5 714.6 L799.5 714.4 L800.5 714.9 L801.5 714.8 L802.5 714.1 L803.5 714.0 L804.5 714.2 L805.5 714.5 L806.5 715.0 L807.5 712.4 L808.5 715.0 L809.5 714.1 L810.5 715.3 L811.5 714.1 L812.5 714.1 L813.5 715.4 L814.5 715.3 L815.5 714.5 L816.5 714.8 L817.5 714.8 L818.5 715.5 L819.5 714.9 L820.5 714.6 L821.5 714.4 L822.5 715.4 L823.5 714.9 L824.5 714.8 L825.5 715.3 L826.5 714.7 L827.5 713.9 L828.5 714.8 L829.5 715.4 L830.5 714.6 L831.5 714.6 L832.5 714.7 L833.5 715.2 L834.5 713.3 L835.5 715.1 L836.5 715.1 L837.5 714.6 L838.5 714.1 L839.5 714.9 L840.5 715.5 L841.5 714.7 L842.5 715.2 L843.5 715.5 L844.5 714.0 L845.5 714.3 L846.5 715.0 L847.5 715.3 L848.5 715.4 L849.5 715.0 L850.5 714.5 L851.5 714.9 L852.5 714.6 L853.5 714.1 L854.5 714.1 L855.5 714.8 L856.5 715.4 L857.5 714.8 L858.5 714.6 L859.5 714.4 L860.5 715.5 L861.5 714.6 L862.5 714.0 L863.5 715.5 L864.5 714.0 L865.5 714.5 L866.5 714.3 L867.5 715.5 L868.5 714.0 L869.5 714.0 L870.5 714.5 L871.5 715.1 L872.5 714.8 L873.5 714.1 L874.5 715.2 L875.5 714.2 L876.5 715.1 L877.5 715.2 L878.5 715.4 L879.5 714.3 L880.5 714.3 L881.5 714.0 L882.5 715.1 L883.5 714.2 L884.5 715.4 L885.5 715.2 L886.5 714.9 L887.5 714.2 L888.5 715.2 L889.5 714.3 L890.5 714.7 L891.5 715.5 L892.5 714.9 L893.5 715.4 L894.5 714.4 L895.5 714.8 L896.5 715.3 L897.5 712.4 L898.5 714.7 L899.5 715.5 L900.5 713.9 L901.5 714.1 L902.5 715.4 L903.5 714.1 L904.5 714.8 L905.5 715.5 L906.5 714.7 L907.5 714.2 L908.5 714.6 L909.5 714.5 L910.5 715.2 L911.5 714.2 L912.5 713.0 L913.5 715.5 L914.5 714.8 L915.5 714.9 L916.5 714.4 L917.5 715.1 L918.5 714.0 L919.5 714.6 L920.5 714.7 L921.5 714.7 L922.5 714.5 L923.5 714.1 L924.5 714.0 L925.5 714.8 L926.5 714.5 L927.5 715.3 L928.5 714.0 L929.5 712.7 L930.5 715.1 L931.5 714.4 L932.5 715.2 L933.5 714.4 L934.5 714.5 L935.5 714.5 L936.5 715.0 L937.5 715.1 L938.5 714.5 L939.5 712.4 L940.5 714.2 L941.5 714.4 L942.5 714.4 L943.5 714.4 L944.5 713.1 L945.5 714.0 L946.5 714.6 L947.5 713.9 L948.5 714.5 L949.5 714.4 L950.5 714.3 L951.5 712.5 L952.5 714.2 L953.5 714.2 L954.5 714.5 L955.5 714.6 L956.5 714.0 L957.5 715.0 L958.5 714.3 L959.5 715.3 L960.5 714.4 L961.5 714.5 L962.5 715.4 L963.5 714.0 L964.5 713.9 L965.5 715.1 L966.5 714.1 L967.5 714.8 L968.5 714.4 L969.5 714.2 L970.5 714.2 L971.5 714.9 L972.5 714.8 L973.5 714.4 L974.5 714.0 L975.5 715.3 L976.5 714.5 L977.5 715.4 L978.5 714.6 L979.5 715.0 L980.5 714.1 L981.5 715.4 L982.5 715.2 L983.5 714.7 L984.5 714.0 L985.5 715.2 L986.5 715.5 L987.5 714.0 L988.5 715.4 L989.5 715.0 L990.5 714.4 L991.5 714.3 L992.5 714.4 L993.5 714.1 L994.5 714.4 L995.5 715.3 L996.5 714.5 L997.5 714.8 L998.5 715.0 L999.5 714.2 L1000.5 714.4 L1001.5 714.4 L1002.5 714.4 L1003.5 714.4 L1004.5 714.8 L1005.5 714.3 L1006.5 714.1 L1007.5 714.7 L1008.5 715.2 L1009.5 714.4 L1010.5 714.3 L1011.5 714.8 L1012.5 714.5 L1013.5 714.4 L1014.5 715.4 L1015.5 715.5 L1016.5 714.7 L1017.5 714.2 L1018.5 715.1 L1019.5 714.9 L1020.5 715.0 L1021.5 713.9 L1022.5 714.1 L1023.5 714.6 L1024.5 714.0 L1025.5 714.9 L1026.5 715.0 L1027.5 714.4 L1028.5 714.6 L1029.5 714.8 L1030.5 713.6 L1031.5 713.9 L1032.5 714.9 L1033.5 715.4 L1034.5 714.6 L1035.5 714.4 L1036.5 714.5 L1037.5 715.0 L1038.5 714.8 L1039.5 714.8 L1040.5 715.5 L1041.5 714.4 L1042.5 715.1 L1043.5 714.8 L1044.5 714.0 L1045.5 714.3 L1046.5 715.4 L1047.5 714.2 L1048.5 714.1 L1049.5 714.2 L1050.5 711.8 L1051.5 714.8 L1052.5 711.7 L1053.5 715.0 L1054.5 715.4 L1055.5 714.6 L1056.5 714.8 L1057.5 714.4 L1058.5 715.1 L1059.5 714.1 L1060.5 714.0 L1061.5 714.1 L1062.5 714.8 L1063.5 714.5 L1064.5 714.8 L1065.5 714.4 L1066.5 714.7 L1067.5 714.2 L1068.5 714.9 L1069.5 714.1 L1070.5 712.4 L1071.5 715.2 L1072.5 714.7 L1073.5 714.4 L1074.5 714.4 L1075.5 715.3 L1076.5 715.3 L1077.5 714.7 L1078.5 715.2 L1079.5 715.3 L1080.5 714.4 L1081.5 714.6 L1082.5 714.1 L1083.5 714.8 L1084.5 714.6 L1085.5 714.0 L1086.5 714.1 L1087.5 715.5 L1088.5 714.2 L1089.5 715.0 L1090.5 715.4 L1091.5 715.3 L1092.5 714.0 L1093.5 714.1 L1094.5 714.9 L1095.5 713.9 L1096.5 712.3 L1097.5 714.8 L1098.5 714.3 L1099.5 714.1 L1100.5 715.0 L1101.5 714.6 L1102.5 715.1 L1103.5 712.6 L1104.5 714.6 L1105.5 714.0 L1106.5 715.4 L1107.5 715.4 L1108.5 714.5 L1109.5 715.2 L1110.5 714.7 L1111.5 714.3 L1112.5 715.3 L1113.5 714.4 L1114.5 715.4 L1115.5 714.8 L1116.5 715.1 L1117.5 712.8 L1118.5 714.0 L1119.5 715.0 L1120.5 712.8 L1121.5 715.3 L1122.5 714.9 L1123.5 714.3 L1124.5 715.1 L1125.5 713.1 L1126.5 714.6 L1127.5 714.2 L1128.5 714.8 L1129.5 714.0 L1130.5 715.3 L1131.5 714.8 L1132.5 715.4 L1133.5 714.8 L1134.5 715.0 L1135.5 715.4 L1136.5 714.1 L1137.5 714.4 L1138.5 715.0 L1139.5 714.2 L1140.5 715.5 L1141.5 714.1 L1142.5 715.1 L1143.5 714.9 L1144.5 714.2 L1145.5 714.7 L1146.5 714.4 L1147.5 715.3 L1148.5 714.7 L1149.5 714.7 L1150.5 714.0 L1151.5 714.1 L1152.5 715.4 L1153.5 715.3 L1154.5 713.9 L1155.5 714.1 L1156.5 715.5 L1157.5 714.7 L1158.5 714.4 L1159.5 715.4 L1160.5 714.8 L1161.5 714.1 L1162.5 715.1 L1163.5 714.2 L1164.5 714.2 L1165.5 714.0 L1166.5 714.4 L1167.5 713.9 L1168.5 715.4 L1169.5 714.2 L1170.5 715.1 L1171.5 715.4 L1172.5 715.5 L1173.5 715.4 L1174.5 714.4 L1175.5 714.4 L1176.5 715.3 L1177.5 715.3 L1178.5 715.3 L1179.5 714.1 L1180.5 715.3 L1181.5 713.2 L1182.5 715.4 L1183.5 714.0 L1184.5 713.9 L1185.5 715.3 L1186.5 714.0 L1187.5 715.1 L1188.5 714.5 L1189.5 714.9 L1190.5 715.4 L1191.5 714.4 L1192.5 714.7 L1193.5 714.4 L1194.5 714.3 L1195.5 714.7 L1196.5 714.2 L1197.5 715.4 L1198.5 714.1 L1199.5 714.7 L1200.5 715.5 L1201.5 714.4 L1202.5 714.5 L1203.5 714.4 L1204.5 714.5 L1205.5 714.5 L1206.5 714.5 L1207.5 714.6 L1208.5 714.6 L1209.5 715.0 L1210.5 714.9 L1211.5 714.5 L1212.5 713.9 L1213.5 714.4 L1214.5 714.5 L1215.5 714.2 L1216.5 715.5 L1217.5 715.5 L1218.5 714.6 L1219.5 715.4 L1220.5 714.1 L1221.5 714.1 L1222.5 715.2 L1223.5 714.0 L1224.5 714.9 L1225.5 714.8 L1226.5 714.9 L1227.5 715.0 L1228.5 714.7 L1229.5 714.4 L1230.5 714.0 L1231.5 714.9 L1232.5 715.1 L1233.5 714.4 L1234.5 714.5 L1235.5 714.5 L1236.5 715.1 L1237.5 714.7 L1238.5 715.0 L1239.5 714.1 L1240.5 714.0 L1241.5 714.3 L1242.5 714.9 L1243.5 715.3 L1244.5 714.0 L1245.5 714.5 L1246.5 714.6 L1247.5 714.4 L1248.5 715.0 L1249.5 715.4 L1250.5 714.4 L1251.5 714.4 L1252.5 714.8 L1253.5 714.6 L1254.5 714.7 L1255.5 713.9 L1256.5 715.3 L1257.5 715.3 L1258.5 715.3 L1259.5 714.9 L1260.5 714.9 L1261.5 714.9 L1262.5 714.5 L1263.5 714.5 L1264.5 714.6 L1265.5 714.6 L1266.5 715.4 L1267.5 714.8 L1268.5 715.0 L1269.5 714.1 L1270.5 714.4 L1271.5 713.5 L1272.5 714.7 L1273.5 714.1 L1274.5 715.0 L1275.5 715.4 L1276.5 714.6 L1277.5 714.7 L1278.5 715.0 L1279.5 714.3 L1280.5 714.1 L1281.5 714.3 L1282.5 714.9 L1283.5 714.3 L1284.5 714.2 L1285.5 714.4 L1286.5 715.4 L1287.5 714.3 L1288.5 713.9 L1289.5 714.3 L1290.5 714.5 L1291.5 714.6 L1292.5 714.2 L1293.5 714.4 L1294.5 715.0 L1295.5 715.1 L1296.5 714.3 L1297.5 714.0 L1298.5 714.8 L1299.5 714.8 L1300.5 714.8 L1301.5 714.7 L1302.5 715.3 L1303.5 715.2 L1304.5 714.6 L1305.5 714.0 L1306.5 714.2 L1307.5 714.3 L1308.5 714.2 L1309.5 715.4 L1310.5 714.9 L1311.5 714.3 L1312.5 714.1 L1313.5 714.1 L1314.5 712.9 L1315.5 714.6 L1316.5 714.1 L1317.5 714.4 L1318.5 714.3 L1319.5 715.5 L1320.5 714.6 L1321.5 714.8 L1322.5 714.9 L1323.5 714.9 L1324.5 714.9 L1325.5 715.3 L1326.5 714.6 L1327.5 715.2 L1328.5 714.0 L1329.5 714.0 L1330.5 714.4 L1331.5 714.6 L1332.5 715.4 L1333.5 714.0 L1334.5 714.1 L1335.5 715.1 L1336.5 714.2 L1337.5 714.3 L1338.5 714.0 L1339.5 714.4 L1340.5 714.9 L1341.5 714.9 L1342.5 714.6 L1343.5 715.2 L1344.5 714.0 L1345.5 714.7 L1346.5 714.4 L1347.5 714.5 L1348.5 714.5 L1349.5 714.0 L1350.5 713.9 L1351.5 715.1 L1352.5 714.1 L1353.5 715.0 L1354.5 714.5 L1355.5 714.2 L1356.5 714.6 L1357.5 712.7 L1358.5 714.7 L1359.5 715.4 L1360.5 714.0 L1361.5 714.8 L1362.5 714.4 L1363.5 714.3 L1364.5 714.7 L1365.5 713.1 L1366.5 714.5 L1367.5 715.2 L1368.5 714.9 L1369.5 714.6 L1370.5 714.8 L1371.5 714.0 L1372.5 714.9 L1373.5 715.3 L1374.5 715.0 L1375.5 714.5 L1376.5 714.7 L1377.5 715.3 L1378.5 713.9 L1379.5 715.4 L1380.5 714.7 L1381.5 713.9 L1382.5 715.0 L1383.5 714.5 L1384.5 715.3 L1385.5 713.2 L1386.5 714.3 L1387.5 714.2 L1388.5 714.6 L1389.5 714.5 L1390.5 714.8 L1391.5 714.1 L1392.5 714.0 L1393.5 715.5 L1394.5 713.9 L1395.5 713.1 L1396.5 713.9 L1397.5 714.1 L1398.5 712.9 L1399.5 714.5 L1400.5 715.3 L1401.5 714.1 L1402.5 714.9 L1403.5 714.2 L1404.5 715.5 L1405.5 715.1 L1406.5 714.7 L1407.5 715.0 L1408.5 714.5 L1409.5 712.8 L1410.5 714.8 L1411.5 714.2 L1412.5 714.3 L1413.5 714.0 L1414.5 714.0 L1415.5 714.4 L1416.5 715.0 L1417.5 714.6 L1418.5 715.5 L1419.5 715.4 L1420.5 714.1 L1421.5 714.8 L1422.5 714.6 L1423.5 715.5 L1424.5 712.6 L1425.5 715.2 L1426.5 714.9 L1427.5 714.3 L1428.5 714.4 L1429.5 714.3 L1430.5 712.9 L1431.5 715.1 L1432.5 714.2 L1433.5 714.5 L1434.5 714.1 L1435.5 714.1 L1436.5 714.1 L1437.5 715.3 L1438.5 715.0 L1439.5 714.2 L1440.5 714.7 L1441.5 714.6 L1442.5 714.1 L1443.5 714.2 L1444.5 714.4 L1445.5 714.4 L1446.5 715.0 L1447.5 714.9 L1448.5 714.5 L1449.5 714.6 L1450.5 715.0 L1451.5 715.5 L1452.5 714.1 L1453.5 714.3 L1454.5 714.1 L1455.5 714.9 L1456.5 714.8 L1457.5 714.9 L1458.5 714.3 L1459.5 715.4 L1460.5 714.0 L1461.5 714.6 L1462.5 714.6 L1463.5 714.4 L1464.5 714.6 L1465.5 715.3 L1466.5 714.5 L1467.5 714.8 L1468.5 714.8 L1469.5 715.0 L1470.5 715.4 L1471.5 713.9 L1472.5 715.1 L1473.5 714.9 L1474.5 715.2 L1475.5 715.0 L1476.5 714.0 L1477.5 715.2 L1478.5 714.8 L1479.5 714.0 L1480.5 714.5 L1481.5 715.1 L1482.5 715.3 L1483.5 714.4 L1484.5 714.6 L1485.5 714.2 L1486.5 714.5 L1487.5 713.9 L1488.5 715.1 L1489.5 713.9 L1490.5 715.4 L1491.5 714.0 L1492.5 715.0 L1493.5 714.4 L1494.5 714.4 L1495.5 714.6 L1496.5 714.0 L1497.5 714.4 L1498.5 714.2 L1499.5 713.9 L1500.5 714.8 L1501.5 714.9 L1502.5 715.4 L1503.5 715.0 L1504.5 715.3 L1505.5 715.2 L1506.5 714.0 L1507.5 714.1 L1508.5 714.8 L1509.5 714.6 L1510.5 715.3 L1511.5 714.0 L1512.5 713.0 L1513.5 715.4 L1514.5 714.0 L1515.5 715.2 L1516.5 714.0 L1517.5 714.7 L1518.5 712.3 L1519.5 715.5 L1520.5 714.9 L1521.5 715.4 L1522.5 714.1 L1523.5 714.4 L1524.5 714.8 L1525.5 714.0 L1526.5 715.4 L1527.5 712.2 L1528.5 715.4 L1529.5 714.1 L1530.5 712.6 L1531.5 714.9 L1532.5 714.1 L1533.5 715.0 L1534.5 714.8 L1535.5 714.2 L1536.5 714.7 L1537.5 714.0 L1538.5 714.0 L1539.5 714.3 L1540.5 715.0 L1541.5 715.2 L1542.5 715.3 L1543.5 715.1 L1544.5 714.6 L1545.5 714.7 L1546.5 715.4 L1547.5 714.2 L1548.5 714.1 L1549.5 715.3 L1550.5 714.0 L1551.5 715.1 L1552.5 714.8 L1553.5 714.5 L1554.5 714.0 L1555.5 715.1 L1556.5 714.5 L1557.5 714.7 L1558.5 715.0 L1559.5 714.5 L1560.5 714.9 L1561.5 714.7 L1562.5 714.3 L1563.5 715.3 L1564.5 714.1 L1565.5 713.5 L1566.5 714.0 L1567.5 714.1 L1568.5 714.8 L1569.5 714.7 L1570.5 715.1 L1571.5 714.3 L1572.5 715.1 L1573.5 714.7 L1574.5 714.1 L1575.5 715.2 L1576.5 714.7 L1577.5 714.9 L1578.5 715.0 L1579.5 715.3 L1580.5 714.5 L1581.5 714.8 L1582.5 715.2 L1583.5 714.6 L1584.5 715.3 L1585.5 715.0 L1586.5 714.8 L1587.5 714.3 L1588.5 714.3 L1589.5 714.3 L1590.5 714.4 L1591.5 715.4 L1592.5 714.3 L1593.5 714.6 L1594.5 714.5 L1595.5 714.3 L1596.5 714.6 L1597.5 714.8 L1598.5 714.1 L1599.5 714.8 L1600.5 715.1 L1601.5 714.4 L1602.5 714.7 L1603.5 714.5 L1604.5 714.6 L1605.5 713.9 L1606.5 715.1 L1607.5 715.5 L1608.5 715.4 L1609.5 713.4 L1610.5 714.0 L1611.5 714.8 L1612.5 715.4 L1613.5 714.2 L1614.5 714.5 L1615.5 714.0 L1616.5 715.1 L1617.5 714.3 L1618.5 714.2 L1619.5 714.4 L1620.5 714.9 L1621.5 714.5 L1622.5 713.9 L1623.5 714.3 L1624.5 715.0 L1625.5 714.8 L1626.5 714.2 L1627.5 715.0 L1628.5 715.3 L1629.5 714.5 L1630.5 714.5 L1631.5 715.1 L1632.5 715.0 L1633.5 714.6 L1634.5 714.0 L1635.5 715.0 L1636.5 715.1 L1637.5 714.3 L1638.5 714.2 L1639.5 714.9 L1640.5 714.0 L1641.5 714.5 L1642.5 715.2 L1643.5 714.5 L1644.5 714.6 L1645.5 714.9 L1646.5 714.8 L1647.5 714.3 L1648.5 714.3 L1649.5 714.8 L1650.5 714.0 L1651.5 715.1 L1652.5 714.7 L1653.5 714.6 L1654.5 713.9 L1655.5 714.5 L1656.5 714.4 L1657.5 714.8 L1658.5 714.2 L1659.5 715.0 L1660.5 714.8 L1661.5 714.5 L1662.5 714.9 L1663.5 714.6 L1664.5 714.9 L1665.5 715.3 L1666.5 715.4 L1667.5 714.1 L1668.5 714.4 L1669.5 715.4 L1670.5 714.8 L1671.5 714.4 L1672.5 714.7 L1673.5 714.6 L1674.5 714.6 L1675.5 714.1 L1676.5 714.9 L1677.5 714.7 L1678.5 714.3 L1679.5 715.3 L1680.5 713.9 L1681.5 715.0 L1682.5 715.4 L1683.5 714.3 L1684.5 714.7 L1685.5 715.0 L1686.5 714.6 L1687.5 714.6 L1688.5 714.1 L1689.5 715.4 L1690.5 714.3 L1691.5 714.7 L1692.5 712.3 L1693.5 714.1 L1694.5 715.2 L1695.5 715.1 L1696.5 714.1 L1697.5 715.1 L1698.5 714.4 L1699.5 715.1 L1700.5 714.2 L1701.5 714.3 L1702.5 715.4 L1703.5 715.2 L1704.5 714.9 L1705.5 712.9 L1706.5 714.2 L1707.5 714.6 L1708.5 714.9 L1709.5 715.3 L1710.5 715.2 L1711.5 714.1 L1712.5 715.2 L1713.5 715.0 L1714.5 714.3 L1715.5 715.2 L1716.5 715.0 L1717.5 715.2 L1718.5 714.4 L1719.5 715.4 L1720.5 715.0 L1721.5 714.4 L1722.5 714.8 L1723.5 715.5 L1724.5 714.8 L1725.5 714.4 L1726.5 714.3 L1727.5 712.5 L1728.5 715.3 L1729.5 714.6 L1730.5 714.6 L1731.5 714.4 L1732.5 714.6 L1733.5 715.0 L1734.5 715.2 L1735.5 714.3 L1736.5 714.9 L1737.5 715.5 L1738.5 715.4 L1739.5 714.9 L1740.5 714.5 L1741.5 714.8 L1742.5 714.9 L1743.5 714.4 L1744.5 714.6 L1745.5 714.9 L1746.5 714.6 L1747.5 714.8 L1748.5 715.0 L1749.5 714.5 L1750.5 715.2 L1750.5 724.4 L1749.5 723.7 L1748.5 725.2 L1747.5 724.3 L1746.5 723.9 L1745.5 723.3 L1744.5 723.8 L1743.5 724.4 L1742.5 723.1 L1741.5 724.1 L1740.5 723.2 L1739.5 723.1 L1738.5 724.1 L1737.5 723.3 L1736.5 724.5 L1735.5 724.4 L1734.5 724.0 L1733.5 723.4 L1732.5 724.1 L1731.5 723.6 L1730.5 723.2 L1729.5 723.6 L1728.5 724.0 L1727.5 724.3 L1726.5 723.1 L1725.5 723.6 L1724.5 726.3 L1723.5 722.9 L1722.5 723.2 L1721.5 723.7 L1720.5 723.2 L1719.5 723.9 L1718.5 723.5 L1717.5 724.5 L1716.5 723.2 L1715.5 723.1 L1714.5 724.2 L1713.5 724.1 L1712.5 724.1 L1711.5 724.1 L1710.5 723.4 L1709.5 724.4 L1708.5 723.0 L1707.5 723.3 L1706.5 724.0 L1705.5 723.4 L1704.5 723.2 L1703.5 726.4 L1702.5 723.3 L1701.5 724.4 L1700.5 723.8 L1699.5 724.3 L1698.5 722.9 L1697.5 723.0 L1696.5 723.1 L1695.5 723.6 L1694.5 723.5 L1693.5 724.1 L1692.5 723.4 L1691.5 723.4 L1690.5 724.2 L1689.5 724.5 L1688.5 723.8 L1687.5 724.0 L1686.5 723.3 L1685.5 723.3 L1684.5 723.2 L1683.5 724.2 L1682.5 723.5 L1681.5 724.3 L1680.5 724.0 L1679.5 724.3 L1678.5 724.3 L1677.5 723.2 L1676.5 723.8 L1675.5 724.3 L1674.5 723.8 L1673.5 723.4 L1672.5 723.7 L1671.5 722.9 L1670.5 723.7 L1669.5 723.7 L1668.5 723.3 L1667.5 724.0 L1666.5 723.4 L1665.5 723.9 L1664.5 723.9 L1663.5 724.3 L1662.5 723.1 L1661.5 723.2 L1660.5 724.1 L1659.5 723.0 L1658.5 724.3 L1657.5 723.6 L1656.5 723.3 L1655.5 723.9 L1654.5 724.3 L1653.5 723.5 L1652.5 723.7 L1651.5 723.7 L1650.5 723.3 L1649.5 723.5 L1648.5 724.3 L1647.5 723.2 L1646.5 724.4 L1645.5 724.3 L1644.5 722.9 L1643.5 724.8 L1642.5 724.3 L1641.5 723.6 L1640.5 722.9 L1639.5 723.3 L1638.5 725.9 L1637.5 723.3 L1636.5 724.3 L1635.5 723.8 L1634.5 723.6 L1633.5 723.5 L1632.5 723.4 L1631.5 724.1 L1630.5 723.2 L1629.5 724.5 L1628.5 724.3 L1627.5 726.4 L1626.5 723.9 L1625.5 722.9 L1624.5 723.7 L1623.5 723.9 L1622.5 723.8 L1621.5 724.4 L1620.5 724.5 L1619.5 723.5 L1618.5 724.2 L1617.5 723.8 L1616.5 723.6 L1615.5 723.1 L1614.5 724.3 L1613.5 723.7 L1612.5 723.1 L1611.5 724.3 L1610.5 723.7 L1609.5 723.6 L1608.5 724.5 L1607.5 723.8 L1606.5 723.0 L1605.5 724.0 L1604.5 723.9 L1603.5 726.1 L1602.5 723.3 L1601.5 726.7 L1600.5 723.3 L1599.5 723.6 L1598.5 724.4 L1597.5 724.2 L1596.5 723.9 L1595.5 724.4 L1594.5 724.5 L1593.5 724.4 L1592.5 725.9 L1591.5 726.0 L1590.5 724.3 L1589.5 724.4 L1588.5 724.2 L1587.5 723.2 L1586.5 724.3 L1585.5 723.7 L1584.5 723.2 L1583.5 723.0 L1582.5 724.4 L1581.5 723.3 L1580.5 723.3 L1579.5 723.1 L1578.5 723.3 L1577.5 724.4 L1576.5 723.7 L1575.5 723.9 L1574.5 723.2 L1573.5 723.4 L1572.5 725.5 L1571.5 724.4 L1570.5 724.0 L1569.5 723.6 L1568.5 723.1 L1567.5 723.1 L1566.5 722.9 L1565.5 724.2 L1564.5 722.9 L1563.5 723.0 L1562.5 724.1 L1561.5 726.0 L1560.5 723.4 L1559.5 725.5 L1558.5 723.6 L1557.5 724.3 L1556.5 723.0 L1555.5 723.1 L1554.5 723.7 L1553.5 724.2 L1552.5 723.2 L1551.5 724.0 L1550.5 726.8 L1549.5 724.2 L1548.5 723.7 L1547.5 723.2 L1546.5 723.8 L1545.5 723.8 L1544.5 723.8 L1543.5 722.9 L1542.5 723.7 L1541.5 723.0 L1540.5 723.3 L1539.5 723.4 L1538.5 724.3 L1537.5 723.7 L1536.5 723.9 L1535.5 724.4 L1534.5 724.0 L1533.5 724.3 L1532.5 723.3 L1531.5 723.4 L1530.5 723.9 L1529.5 724.2 L1528.5 724.1 L1527.5 725.3 L1526.5 723.4 L1525.5 723.5 L1524.5 723.0 L1523.5 723.4 L1522.5 724.4 L1521.5 723.4 L1520.5 723.8 L1519.5 723.6 L1518.5 723.5 L1517.5 723.3 L1516.5 723.8 L1515.5 723.7 L1514.5 724.2 L1513.5 723.0 L1512.5 725.2 L1511.5 723.5 L1510.5 723.8 L1509.5 723.5 L1508.5 724.3 L1507.5 723.6 L1506.5 724.2 L1505.5 724.4 L1504.5 723.6 L1503.5 723.1 L1502.5 724.5 L1501.5 723.9 L1500.5 723.6 L1499.5 723.9 L1498.5 724.0 L1497.5 723.0 L1496.5 724.0 L1495.5 724.0 L1494.5 723.8 L1493.5 723.2 L1492.5 723.8 L1491.5 724.5 L1490.5 723.8 L1489.5 724.2 L1488.5 723.4 L1487.5 723.9 L1486.5 723.5 L1485.5 724.2 L1484.5 724.5 L1483.5 723.4 L1482.5 723.0 L1481.5 724.1 L1480.5 723.2 L1479.5 725.8 L1478.5 723.8 L1477.5 723.4 L1476.5 723.8 L1475.5 724.2 L1474.5 723.7 L1473.5 724.4 L1472.5 725.5 L1471.5 723.8 L1470.5 724.5 L1469.5 723.7 L1468.5 722.9 L1467.5 724.3 L1466.5 723.8 L1465.5 724.6 L1464.5 723.8 L1463.5 723.9 L1462.5 723.5 L1461.5 724.4 L1460.5 725.1 L1459.5 723.7 L1458.5 722.9 L1457.5 723.4 L1456.5 724.4 L1455.5 724.4 L1454.5 724.2 L1453.5 723.1 L1452.5 723.9 L1451.5 723.8 L1450.5 723.6 L1449.5 723.3 L1448.5 724.4 L1447.5 723.4 L1446.5 723.4 L1445.5 723.8 L1444.5 724.2 L1443.5 724.3 L1442.5 724.2 L1441.5 723.5 L1440.5 723.3 L1439.5 724.7 L1438.5 723.0 L1437.5 724.2 L1436.5 723.5 L1435.5 723.4 L1434.5 725.5 L1433.5 724.4 L1432.5 724.0 L1431.5 724.2 L1430.5 723.2 L1429.5 724.2 L1428.5 724.3 L1427.5 723.0 L1426.5 724.2 L1425.5 723.4 L1424.5 723.6 L1423.5 725.6 L1422.5 724.3 L1421.5 723.9 L1420.5 723.8 L1419.5 724.3 L1418.5 724.2 L1417.5 723.2 L1416.5 723.0 L1415.5 723.6 L1414.5 723.4 L1413.5 723.5 L1412.5 723.3 L1411.5 723.6 L1410.5 723.0 L1409.5 723.0 L1408.5 723.6 L1407.5 724.2 L1406.5 723.9 L1405.5 723.7 L1404.5 724.1 L1403.5 723.4 L1402.5 723.2 L1401.5 723.2 L1400.5 723.7 L1399.5 724.4 L1398.5 723.8 L1397.5 724.4 L1396.5 723.4 L1395.5 723.1 L1394.5 723.8 L1393.5 723.5 L1392.5 724.3 L1391.5 723.9 L1390.5 724.2 L1389.5 723.2 L1388.5 723.2 L1387.5 724.2 L1386.5 724.5 L1385.5 724.0 L1384.5 723.8 L1383.5 723.6 L1382.5 723.8 L1381.5 724.3 L1380.5 725.4 L1379.5 724.0 L1378.5 723.8 L1377.5 723.0 L1376.5 723.1 L1375.5 723.7 L1374.5 723.3 L1373.5 723.2 L1372.5 723.0 L1371.5 725.0 L1370.5 724.3 L1369.5 723.9 L1368.5 723.1 L1367.5 723.6 L1366.5 723.3 L1365.5 723.7 L1364.5 724.8 L1363.5 723.8 L1362.5 724.2 L1361.5 723.8 L1360.5 724.2 L1359.5 723.0 L1358.5 723.5 L1357.5 724.3 L1356.5 723.2 L1355.5 723.4 L1354.5 723.0 L1353.5 723.7 L1352.5 723.4 L1351.5 723.5 L1350.5 724.2 L1349.5 723.5 L1348.5 723.1 L1347.5 724.0 L1346.5 723.9 L1345.5 724.4 L1344.5 723.8 L1343.5 724.4 L1342.5 722.9 L1341.5 722.9 L1340.5 724.4 L1339.5 723.9 L1338.5 725.1 L1337.5 724.1 L1336.5 723.5 L1335.5 722.9 L1334.5 723.0 L1333.5 724.1 L1332.5 723.2 L1331.5 722.9 L1330.5 724.0 L1329.5 724.2 L1328.5 724.3 L1327.5 725.7 L1326.5 724.0 L1325.5 723.1 L1324.5 723.4 L1323.5 723.3 L1322.5 724.3 L1321.5 723.9 L1320.5 724.1 L1319.5 723.4 L1318.5 723.2 L1317.5 724.4 L1316.5 722.9 L1315.5 724.1 L1314.5 723.1 L1313.5 723.7 L1312.5 723.6 L1311.5 724.4 L1310.5 723.0 L1309.5 723.7 L1308.5 723.7 L1307.5 724.7 L1306.5 723.4 L1305.5 723.4 L1304.5 723.0 L1303.5 723.3 L1302.5 724.4 L1301.5 724.0 L1300.5 722.9 L1299.5 723.3 L1298.5 724.1 L1297.5 724.0 L1296.5 724.1 L1295.5 723.1 L1294.5 723.8 L1293.5 723.8 L1292.5 724.1 L1291.5 723.9 L1290.5 722.9 L1289.5 723.9 L1288.5 724.1 L1287.5 723.0 L1286.5 723.0 L1285.5 723.9 L1284.5 723.6 L1283.5 723.2 L1282.5 723.6 L1281.5 723.9 L1280.5 724.0 L1279.5 723.6 L1278.5 725.2 L1277.5 723.4 L1276.5 723.9 L1275.5 724.4 L1274.5 723.3 L1273.5 723.7 L1272.5 723.3 L1271.5 723.2 L1270.5 724.1 L1269.5 723.8 L1268.5 723.7 L1267.5 723.2 L1266.5 724.0 L1265.5 723.3 L1264.5 725.4 L1263.5 723.0 L1262.5 724.1 L1261.5 723.9 L1260.5 723.0 L1259.5 723.0 L1258.5 725.1 L1257.5 723.1 L1256.5 725.6 L1255.5 723.9 L1254.5 723.9 L1253.5 723.3 L1252.5 724.5 L1251.5 723.7 L1250.5 724.3 L1249.5 723.5 L1248.5 723.0 L1247.5 723.5 L1246.5 723.5 L1245.5 723.0 L1244.5 724.3 L1243.5 724.2 L1242.5 723.2 L1241.5 723.4 L1240.5 722.9 L1239.5 725.2 L1238.5 723.3 L1237.5 725.7 L1236.5 724.2 L1235.5 723.1 L1234.5 724.4 L1233.5 723.1 L1232.5 724.2 L1231.5 724.2 L1230.5 724.2 L1229.5 724.1 L1228.5 724.0 L1227.5 723.8 L1226.5 723.0 L1225.5 723.3 L1224.5 723.1 L1223.5 723.1 L1222.5 723.7 L1221.5 726.2 L1220.5 723.4 L1219.5 724.3 L1218.5 724.4 L1217.5 723.3 L1216.5 724.2 L1215.5 724.5 L1214.5 724.3 L1213.5 723.8 L1212.5 723.4 L1211.5 723.4 L1210.5 723.0 L1209.5 722.9 L1208.5 724.4 L1207.5 724.3 L1206.5 723.6 L1205.5 723.9 L1204.5 723.0 L1203.5 723.6 L1202.5 724.3 L1201.5 723.0 L1200.5 724.2 L1199.5 725.6 L1198.5 723.8 L1197.5 722.9 L1196.5 723.4 L1195.5 723.6 L1194.5 724.0 L1193.5 723.0 L1192.5 724.2 L1191.5 724.4 L1190.5 723.5 L1189.5 723.2 L1188.5 725.4 L1187.5 723.7 L1186.5 724.0 L1185.5 723.8 L1184.5 724.3 L1183.5 723.0 L1182.5 724.9 L1181.5 724.4 L1180.5 723.5 L1179.5 723.1 L1178.5 724.2 L1177.5 724.2 L1176.5 723.7 L1175.5 723.6 L1174.5 724.5 L1173.5 724.4 L1172.5 723.4 L1171.5 723.6 L1170.5 725.9 L1169.5 725.8 L1168.5 723.3 L1167.5 723.3 L1166.5 724.4 L1165.5 723.7 L1164.5 723.8 L1163.5 723.7 L1162.5 723.8 L1161.5 723.7 L1160.5 723.1 L1159.5 724.2 L1158.5 723.8 L1157.5 724.2 L1156.5 723.0 L1155.5 723.9 L1154.5 723.2 L1153.5 723.3 L1152.5 725.6 L1151.5 723.4 L1150.5 723.7 L1149.5 723.1 L1148.5 723.0 L1147.5 723.4 L1146.5 723.4 L1145.5 724.1 L1144.5 723.2 L1143.5 723.5 L1142.5 723.3 L1141.5 724.4 L1140.5 724.2 L1139.5 723.0 L1138.5 724.2 L1137.5 724.2 L1136.5 723.0 L1135.5 723.9 L1134.5 724.0 L1133.5 723.2 L1132.5 723.3 L1131.5 724.3 L1130.5 724.9 L1129.5 723.4 L1128.5 723.9 L1127.5 725.5 L1126.5 723.7 L1125.5 724.0 L1124.5 723.8 L1123.5 723.6 L1122.5 724.4 L1121.5 723.5 L1120.5 723.7 L1119.5 724.2 L1118.5 723.6 L1117.5 724.1 L1116.5 723.1 L1115.5 723.4 L1114.5 726.4 L1113.5 723.4 L1112.5 723.6 L1111.5 724.3 L1110.5 723.0 L1109.5 723.6 L1108.5 723.3 L1107.5 723.5 L1106.5 723.8 L1105.5 724.3 L1104.5 723.8 L1103.5 723.1 L1102.5 725.5 L1101.5 724.3 L1100.5 723.6 L1099.5 724.3 L1098.5 724.0 L1097.5 723.0 L1096.5 724.0 L1095.5 723.1 L1094.5 723.7 L1093.5 723.7 L1092.5 723.9 L1091.5 722.9 L1090.5 725.4 L1089.5 723.4 L1088.5 723.0 L1087.5 724.1 L1086.5 723.5 L1085.5 723.9 L1084.5 724.0 L1083.5 723.6 L1082.5 723.7 L1081.5 726.2 L1080.5 723.2 L1079.5 724.4 L1078.5 724.4 L1077.5 723.1 L1076.5 724.4 L1075.5 726.4 L1074.5 724.0 L1073.5 725.7 L1072.5 723.6 L1071.5 723.2 L1070.5 723.8 L1069.5 724.2 L1068.5 723.7 L1067.5 723.5 L1066.5 724.1 L1065.5 722.9 L1064.5 724.0 L1063.5 723.4 L1062.5 723.0 L1061.5 723.1 L1060.5 723.7 L1059.5 723.9 L1058.5 723.6 L1057.5 725.6 L1056.5 724.2 L1055.5 724.0 L1054.5 723.6 L1053.5 723.1 L1052.5 724.1 L1051.5 724.5 L1050.5 723.3 L1049.5 723.0 L1048.5 723.9 L1047.5 724.4 L1046.5 723.7 L1045.5 723.7 L1044.5 723.9 L1043.5 724.3 L1042.5 724.4 L1041.5 723.5 L1040.5 723.9 L1039.5 724.3 L1038.5 722.9 L1037.5 724.4 L1036.5 722.9 L1035.5 724.1 L1034.5 724.7 L1033.5 723.6 L1032.5 723.7 L1031.5 723.2 L1030.5 723.1 L1029.5 724.2 L1028.5 723.4 L1027.5 723.9 L1026.5 724.2 L1025.5 724.4 L1024.5 723.1 L1023.5 724.2 L1022.5 724.5 L1021.5 723.7 L1020.5 723.8 L1019.5 724.0 L1018.5 723.4 L1017.5 724.3 L1016.5 724.2 L1015.5 724.4 L1014.5 725.7 L1013.5 723.9 L1012.5 722.9 L1011.5 723.8 L1010.5 722.9 L1009.5 723.7 L1008.5 724.2 L1007.5 723.3 L1006.5 723.7 L1005.5 723.2 L1004.5 723.1 L1003.5 724.1 L1002.5 723.0 L1001.5 723.2 L1000.5 723.1 L999.5 724.5 L998.5 723.6 L997.5 723.5 L996.5 724.4 L995.5 723.9 L994.5 723.1 L993.5 724.4 L992.5 723.4 L991.5 724.3 L990.5 723.3 L989.5 724.0 L988.5 723.6 L987.5 724.3 L986.5 724.4 L985.5 723.8 L984.5 723.1 L983.5 723.4 L982.5 724.5 L981.5 723.8 L980.5 724.1 L979.5 724.2 L978.5 723.6 L977.5 724.0 L976.5 723.6 L975.5 723.8 L974.5 723.5 L973.5 723.5 L972.5 723.0 L971.5 723.4 L970.5 724.3 L969.5 724.3 L968.5 723.3 L967.5 723.9 L966.5 724.2 L965.5 723.7 L964.5 724.4 L963.5 723.8 L962.5 724.4 L961.5 724.0 L960.5 724.5 L959.5 723.3 L958.5 724.0 L957.5 723.8 L956.5 724.4 L955.5 723.0 L954.5 724.4 L953.5 723.5 L952.5 723.5 L951.5 723.9 L950.5 724.4 L949.5 723.9 L948.5 722.9 L947.5 723.2 L946.5 722.9 L945.5 725.8 L944.5 723.9 L943.5 723.7 L942.5 723.5 L941.5 724.0 L940.5 723.6 L939.5 724.0 L938.5 724.3 L937.5 724.1 L936.5 724.2 L935.5 723.4 L934.5 724.1 L933.5 723.9 L932.5 726.0 L931.5 723.0 L930.5 724.4 L929.5 724.0 L928.5 723.5 L927.5 723.5 L926.5 723.2 L925.5 724.0 L924.5 723.4 L923.5 723.0 L922.5 724.3 L921.5 723.6 L920.5 723.4 L919.5 725.6 L918.5 726.9 L917.5 723.0 L916.5 724.4 L915.5 723.4 L914.5 723.8 L913.5 724.2 L912.5 723.3 L911.5 724.5 L910.5 724.0 L909.5 723.1 L908.5 724.2 L907.5 724.1 L906.5 724.0 L905.5 724.0 L904.5 723.8 L903.5 723.6 L902.5 722.9 L901.5 723.9 L900.5 723.4 L899.5 724.3 L898.5 724.2 L897.5 723.9 L896.5 723.8 L895.5 724.3 L894.5 723.2 L893.5 724.4 L892.5 724.0 L891.5 723.7 L890.5 723.1 L889.5 723.1 L888.5 724.0 L887.5 723.9 L886.5 723.5 L885.5 723.4 L884.5 723.3 L883.5 723.9 L882.5 723.0 L881.5 724.2 L880.5 724.3 L879.5 724.0 L878.5 725.9 L877.5 723.9 L876.5 723.0 L875.5 723.6 L874.5 723.9 L873.5 724.1 L872.5 722.9 L871.5 724.0 L870.5 723.1 L869.5 723.3 L868.5 722.9 L867.5 724.5 L866.5 724.2 L865.5 724.2 L864.5 723.8 L863.5 723.0 L862.5 724.1 L861.5 724.0 L860.5 723.1 L859.5 723.5 L858.5 724.5 L857.5 723.2 L856.5 723.0 L855.5 723.9 L854.5 724.3 L853.5 724.0 L852.5 723.9 L851.5 723.1 L850.5 724.2 L849.5 724.3 L848.5 723.9 L847.5 723.5 L846.5 723.2 L845.5 726.7 L844.5 723.7 L843.5 723.9 L842.5 723.7 L841.5 723.4 L840.5 723.3 L839.5 723.8 L838.5 724.0 L837.5 724.0 L836.5 723.5 L835.5 725.7 L834.5 723.1 L833.5 724.4 L832.5 724.1 L831.5 723.6 L830.5 724.3 L829.5 723.1 L828.5 724.0 L827.5 723.1 L826.5 723.7 L825.5 723.7 L824.5 723.3 L823.5 723.1 L822.5 724.1 L821.5 723.3 L820.5 723.9 L819.5 724.9 L818.5 723.4 L817.5 723.7 L816.5 723.1 L815.5 723.5 L814.5 724.1 L813.5 724.1 L812.5 723.7 L811.5 724.1 L810.5 724.3 L809.5 723.4 L808.5 725.5 L807.5 723.1 L806.5 724.0 L805.5 723.7 L804.5 723.5 L803.5 725.4 L802.5 723.0 L801.5 723.7 L800.5 723.1 L799.5 723.1 L798.5 723.2 L797.5 724.2 L796.5 723.4 L795.5 723.8 L794.5 723.4 L793.5 723.1 L792.5 724.4 L791.5 723.8 L790.5 723.5 L789.5 723.2 L788.5 724.3 L787.5 723.7 L786.5 723.4 L785.5 723.2 L784.5 724.4 L783.5 723.1 L782.5 723.6 L781.5 724.3 L780.5 726.4 L779.5 724.2 L778.5 724.0 L777.5 724.4 L776.5 723.3 L775.5 723.6 L774.5 724.3 L773.5 723.9 L772.5 724.3 L771.5 723.0 L770.5 724.2 L769.5 724.3 L768.5 723.8 L767.5 723.4 L766.5 723.4 L765.5 724.0 L764.5 724.3 L763.5 723.7 L762.5 723.0 L761.5 723.4 L760.5 723.7 L759.5 724.1 L758.5 724.4 L757.5 723.9 L756.5 722.9 L755.5 723.4 L754.5 724.2 L753.5 723.7 L752.5 723.9 L751.5 723.3 L750.5 724.0 L749.5 723.1 L748.5 723.2 L747.5 723.2 L746.5 724.0 L745.5 723.8 L744.5 724.4 L743.5 724.4 L742.5 723.9 L741.5 724.3 L740.5 724.1 L739.5 724.1 L738.5 724.2 L737.5 724.2 L736.5 723.7 L735.5 724.0 L734.5 723.3 L733.5 723.4 L732.5 723.4 L731.5 723.9 L730.5 724.0 L729.5 723.9 L728.5 723.5 L727.5 723.5 L726.5 723.3 L725.5 723.9 L724.5 724.3 L723.5 723.0 L722.5 723.2 L721.5 724.5 L720.5 723.4 L719.5 724.2 L718.5 726.0 L717.5 723.1 L716.5 723.0 L715.5 724.1 L714.5 723.6 L713.5 723.7 L712.5 723.1 L711.5 723.0 L710.5 723.8 L709.5 723.1 L708.5 723.3 L707.5 723.5 L706.5 724.2 L705.5 723.6 L704.5 724.2 L703.5 723.8 L702.5 723.7 L701.5 723.2 L700.5 723.4 L699.5 723.9 L698.5 723.7 L697.5 723.3 L696.5 723.9 L695.5 723.8 L694.5 723.3 L693.5 723.8 L692.5 723.1 L691.5 723.6 L690.5 724.0 L689.5 723.0 L688.5 723.7 L687.5 723.3 L686.5 724.0 L685.5 725.8 L684.5 724.4 L683.5 723.0 L682.5 723.7 L681.5 724.5 L680.5 724.5 L679.5 723.3 L678.5 723.5 L677.5 724.3 L676.5 723.9 L675.5 723.9 L674.5 723.1 L673.5 723.7 L672.5 725.8 L671.5 725.6 L670.5 724.4 L669.5 724.0 L668.5 723.5 L667.5 723.5 L666.5 723.6 L665.5 724.0 L664.5 723.0 L663.5 723.2 L662.5 724.2 L661.5 723.7 L660.5 724.5 L659.5 722.9 L658.5 723.4 L657.5 723.8 L656.5 724.4 L655.5 723.5 L654.5 724.4 L653.5 723.9 L652.5 726.5 L651.5 723.0 L650.5 723.2 L649.5 723.3 L648.5 723.7 L647.5 724.4 L646.5 724.1 L645.5 723.8 L644.5 723.5 L643.5 726.7 L642.5 723.5 L641.5 723.4 L640.5 724.3 L639.5 724.2 L638.5 723.8 L637.5 723.7 L636.5 723.3 L635.5 722.9 L634.5 723.6 L633.5 723.4 L632.5 724.4 L631.5 724.5 L630.5 723.9 L629.5 726.1 L628.5 723.8 L627.5 723.9 L626.5 723.7 L625.5 723.4 L624.5 726.4 L623.5 723.1 L622.5 723.1 L621.5 724.4 L620.5 724.4 L619.5 724.3 L618.5 723.1 L617.5 724.2 L616.5 723.8 L615.5 724.4 L614.5 723.1 L613.5 724.0 L612.5 725.4 L611.5 724.4 L610.5 723.0 L609.5 724.3 L608.5 723.9 L607.5 723.3 L606.5 724.2 L605.5 723.0 L604.5 724.4 L603.5 723.6 L602.5 723.4 L601.5 724.2 L600.5 723.2 L599.5 723.3 L598.5 723.5 L597.5 724.5 L596.5 724.4 L595.5 723.5 L594.5 723.3 L593.5 724.3 L592.5 724.0 L591.5 724.5 L590.5 725.5 L589.5 723.1 L588.5 723.2 L587.5 723.9 L586.5 722.9 L585.5 723.7 L584.5 724.1 L583.5 723.2 L582.5 723.8 L581.5 723.8 L580.5 724.1 L579.5 724.1 L578.5 725.7 L577.5 723.6 L576.5 723.9 L575.5 723.8 L574.5 723.1 L573.5 724.1 L572.5 723.2 L571.5 724.1 L570.5 723.3 L569.5 723.5 L568.5 724.5 L567.5 723.0 L566.5 723.6 L565.5 723.9 L564.5 724.5 L563.5 723.0 L562.5 723.7 L561.5 725.5 L560.5 723.8 L559.5 723.5 L558.5 726.5 L557.5 723.6 L556.5 723.5 L555.5 724.3 L554.5 723.8 L553.5 723.5 L552.5 724.2 L551.5 724.2 L550.5 724.3 L549.5 724.4 L548.5 723.2 L547.5 723.3 L546.5 723.6 L545.5 723.0 L544.5 723.2 L543.5 723.3 L542.5 723.0 L541.5 723.5 L540.5 723.6 L539.5 724.0 L538.5 723.3 L537.5 723.2 L536.5 723.7 L535.5 724.3 L534.5 723.0 L533.5 723.2 L532.5 723.8 L531.5 723.9 L530.5 724.0 L529.5 723.5 L528.5 723.9 L527.5 724.4 L526.5 723.3 L525.5 723.4 L524.5 723.4 L523.5 723.6 L522.5 723.5 L521.5 724.1 L520.5 723.3 L519.5 723.9 L518.5 724.2 L517.5 723.6 L516.5 723.0 L515.5 724.2 L514.5 723.8 L513.5 723.6 L512.5 723.4 L511.5 723.0 L510.5 724.2 L509.5 724.0 L508.5 723.2 L507.5 725.7 L506.5 724.3 L505.5 723.3 L504.5 723.6 L503.5 724.2 L502.5 722.9 L501.5 723.2 L500.5 723.3 L499.5 724.2 L498.5 723.2 L497.5 723.4 L496.5 723.5 L495.5 722.9 L494.5 724.2 L493.5 723.3 L492.5 723.5 L491.5 723.5 L490.5 724.4 L489.5 723.6 L488.5 724.1 L487.5 724.2 L486.5 723.3 L485.5 723.0 L484.5 723.8 L483.5 723.7 L482.5 723.6 L481.5 723.1 L480.5 724.2 L479.5 725.0 L478.5 724.4 L477.5 724.2 L476.5 723.6 L475.5 724.0 L474.5 723.5 L473.5 723.4 L472.5 724.1 L471.5 724.3 L470.5 723.0 L469.5 724.1 L468.5 724.4 L467.5 724.4 L466.5 723.3 L465.5 723.0 L464.5 724.2 L463.5 723.1 L462.5 723.2 L461.5 723.6 L460.5 723.9 L459.5 723.0 L458.5 724.4 L457.5 724.4 L456.5 723.7 L455.5 723.3 L454.5 724.2 L453.5 724.3 L452.5 723.8 L451.5 723.2 L450.5 724.3 L449.5 723.0 L448.5 723.6 L447.5 723.1 L446.5 722.9 L445.5 723.8 L444.5 723.7 L443.5 723.4 L442.5 724.2 L441.5 723.5 L440.5 723.1 L439.5 723.8 L438.5 723.3 L437.5 724.3 L436.5 724.3 L435.5 726.2 L434.5 724.2 L433.5 724.2 L432.5 724.1 L431.5 725.0 L430.5 723.9 L429.5 723.3 L428.5 723.2 L427.5 725.5 L426.5 723.8 L425.5 723.4 L424.5 724.4 L423.5 723.7 L422.5 723.7 L421.5 723.6 L420.5 722.9 L419.5 723.8 L418.5 723.9 L417.5 723.1 L416.5 723.7 L415.5 724.1 L414.5 724.2 L413.5 724.3 L412.5 723.4 L411.5 723.4 L410.5 723.1 L409.5 723.2 L408.5 723.7 L407.5 723.7 L406.5 723.4 L405.5 723.9 L404.5 724.2 L403.5 723.8 L402.5 724.4 L401.5 723.9 L400.5 723.7 L399.5 724.1 L398.5 723.3 L397.5 723.3 L396.5 724.0 L395.5 724.3 L394.5 723.4 L393.5 723.7 L392.5 724.0 L391.5 723.7 L390.5 724.4 L389.5 723.4 L388.5 723.7 L387.5 723.3 L386.5 723.7 L385.5 724.4 L384.5 724.2 L383.5 723.5 L382.5 723.7 L381.5 723.5 L380.5 723.7 L379.5 723.5 L378.5 723.8 L377.5 724.3 L376.5 723.5 L375.5 724.0 L374.5 723.0 L373.5 723.2 L372.5 723.1 L371.5 724.1 L370.5 723.4 L369.5 724.4 L368.5 724.4 L367.5 723.5 L366.5 723.2 L365.5 723.4 L364.5 723.4 L363.5 723.7 L362.5 723.0 L361.5 723.1 L360.5 724.3 L359.5 724.4 L358.5 723.1 L357.5 726.2 L356.5 723.7 L355.5 723.2 L354.5 724.3 L353.5 724.1 L352.5 724.5 L351.5 723.2 L350.5 724.0 L349.5 724.4 L348.5 723.3 L347.5 724.4 L346.5 723.1 L345.5 723.8 L344.5 723.0 L343.5 724.1 L342.5 724.2 L341.5 724.4 L340.5 723.3 L339.5 723.7 L338.5 724.3 L337.5 724.5 L336.5 723.7 L335.5 723.8 L334.5 724.5 L333.5 723.6 L332.5 722.9 L331.5 723.7 L330.5 724.3 L329.5 724.0 L328.5 723.4 L327.5 723.0 L326.5 725.1 L325.5 723.1 L324.5 723.0 L323.5 723.8 L322.5 724.8 L321.5 723.3 L320.5 724.4 L319.5 723.7 L318.5 723.8 L317.5 723.4 L316.5 724.5 L315.5 723.8 L314.5 724.2 L313.5 722.9 L312.5 723.4 L311.5 723.8 L310.5 723.7 L309.5 723.4 L308.5 723.9 L307.5 723.4 L306.5 724.9 L305.5 724.1 L304.5 724.1 L303.5 723.2 L302.5 724.1 L301.5 724.1 L300.5 723.2 L299.5 725.4 L298.5 723.9 L297.5 723.1 L296.5 722.9 L295.5 724.3 L294.5 726.4 L293.5 723.1 L292.5 723.6 L291.5 723.5 L290.5 723.8 L289.5 723.8 L288.5 723.3 L287.5 723.3 L286.5 724.0 L285.5 724.4 L284.5 723.8 L283.5 723.5 L282.5 723.4 L281.5 723.0 L280.5 723.5 L279.5 723.6 L278.5 724.2 L277.5 725.4 L276.5 724.4 L275.5 723.9 L274.5 724.5 L273.5 724.0 L272.5 724.4 L271.5 723.8 L270.5 723.2 L269.5 723.6 L268.5 724.4 L267.5 724.2 L266.5 723.9 L265.5 723.3 L264.5 724.2 L263.5 724.3 L262.5 723.0 L261.5 724.1 L260.5 723.5 L259.5 723.7 L258.5 723.4 L257.5 723.6 L256.5 723.6 L255.5 723.9 L254.5 723.1 L253.5 724.5 L252.5 724.2 L251.5 724.3 L250.5 723.7 L249.5 724.4 L248.5 723.1 L247.5 724.1 L246.5 723.8 L245.5 723.2 L244.5 723.1 L243.5 723.2 L242.5 724.4 L241.5 724.0 L240.5 723.7 L239.5 723.6 L238.5 725.4 L237.5 723.0 L236.5 723.9 L235.5 724.2 L234.5 724.5 L233.5 724.4 L232.5 724.2 L231.5 724.1 L230.5 724.4 L229.5 723.1 L228.5 726.0 L227.5 723.3 L226.5 723.7 L225.5 724.1 L224.5 723.7 L223.5 723.2 L222.5 723.7 L221.5 724.0 L220.5 723.9 L219.5 723.1 L218.5 724.4 L217.5 724.5 L216.5 723.4 L215.5 724.2 L214.5 723.4 L213.5 724.0 L212.5 722.9 L211.5 723.3 L210.5 724.4 L209.5 724.1 L208.5 724.0 L207.5 724.4 L206.5 723.5 L205.5 723.1 L204.5 723.9 L203.5 723.6 L202.5 724.2 L201.5 723.8 L200.5 723.7 L199.5 723.8 L198.5 724.2 L197.5 724.1 L196.5 723.8 L195.5 723.4 L194.5 723.1 L193.5 723.0 L192.5 723.4 L191.5 723.5 L190.5 723.6 L189.5 723.1 L188.5 723.0 L187.5 723.5 L186.5 723.1 L185.5 723.9 L184.5 724.3 L183.5 725.9 L182.5 723.5 L181.5 724.4 L180.5 723.3 L179.5 723.3 L178.5 723.6 L177.5 724.3 L176.5 723.6 L175.5 723.8 L174.5 724.0 L173.5 723.2 L172.5 723.7 L171.5 723.4 L170.5 723.1 L169.5 724.0 L168.5 724.0 L167.5 724.3 L166.5 724.1 L165.5 723.8 L164.5 724.4 L163.5 724.1 L162.5 724.1 L161.5 724.4 L160.5 723.2 L159.5 724.3 L158.5 723.6 L157.5 723.7 L156.5 723.4 L155.5 723.7 L154.5 724.3 L153.5 723.1 L152.5 724.3 L151.5 726.1 L150.5 723.8 L149.5 723.0 L148.5 724.2 L147.5 724.0 L146.5 724.0 L145.5 724.4 L144.5 724.1 L143.5 724.2 L142.5 724.1 L141.5 723.1 L140.5 723.6 L139.5 723.3 L138.5 723.1 L137.5 723.8 L136.5 724.4 L135.5 723.7 L134.5 723.4 L133.5 725.3 L132.5 724.2 L131.5 723.4 L130.5 723.8 L129.5 724.1 L128.5 724.3 L127.5 723.4 L126.5 723.9 L125.5 723.0 L124.5 723.2 L123.5 724.4 L122.5 724.5 L121.5 723.9 L120.5 723.6 L119.5 723.2 L118.5 723.1 L117.5 723.4 L116.5 723.6 L115.5 723.3 L114.5 723.6 L113.5 725.6 L112.5 723.3 L111.5 723.8 L110.5 724.2 L109.5 723.7 L108.5 724.0 L107.5 723.5 L106.5 723.8 L105.5 724.2 L104.5 723.1 L103.5 723.3 L102.5 723.3 L101.5 724.3 L100.5 723.5 L99.5 723.8 L98.5 725.6 L97.5 723.6 L96.5 723.5 L95.5 722.9 L94.5 723.2 L93.5 723.8 L92.5 723.9 L91.5 723.5 L90.5 723.3 L89.5 723.8 L88.5 723.4 L87.5 723.6 L86.5 723.8 L85.5 726.8 L84.5 724.2 L83.5 723.3 L82.5 724.3 L81.5 723.6 L80.5 723.7 L79.5 723.7 L78.5 723.0 L77.5 724.3 L76.5 724.1 L75.5 723.8 L74.5 723.0 L73.5 723.8 L72.5 724.4 L71.5 724.3 L70.5 724.0 L69.5 723.0 L68.5 724.3 L67.5 724.2 L66.5 723.4 L65.5 723.2 L64.5 723.6 L63.5 723.0 L62.5 723.8 L61.5 723.5 L60.5 724.2 L59.5 724.2 L58.5 723.3 L57.5 724.3 L56.5 724.5 L55.5 723.4 L54.5 724.1 L53.5 724.4 L52.5 723.2 L51.5 723.0 L50.5 724.0 L49.5 723.0 L48.5 723.7 L47.5 725.7 L46.5 723.8 L45.5 723.5 L44.5 724.5 L43.5 723.8 L42.5 723.8 L41.5 723.6 L40.5 723.4 L39.5 723.7 L38.5 723.8 L37.5 723.2 L36.5 724.4 L35.5 724.0 L34.5 723.5 L33.5 724.1 L32.5 724.2 L31.5 723.7 L30.5 724.4 L29.5 724.2 L28.5 723.4 L27.5 723.2 L26.5 724.3 L25.5 724.1 L24.5 724.2 L23.5 726.2 L22.5 724.5 L21.5 724.2 L20.5 724.3 L19.5 724.4 L18.5 723.1 L17.5 723.2 L16.5 725.4 L15.5 724.3 L14.5 724.2 L13.5 724.2 L12.5 723.2 L11.5 723.9 L10.5 723.1 L9.5 724.5 L8.5 723.5 L7.5 723.1 L6.5 723.5 L5.5 724.3 L4.5 724.2 L3.5 724.4 Z"/><line x1="4" y1="719.5" x2="1750" y2="719.5" stroke="#f39a1e" stroke-width="1.2" stroke-dasharray="4 6"/><line x1="5" y1="525.5" x2="1740" y2="525.5" stroke="#c4c4c4" stroke-width="1" stroke-dasharray="5 5"/><line x1="1750.6" y1="57" x2="1750.6" y2="993" stroke="#f39a1e" stroke-width="1.3" stroke-dasharray="5 5"/><path fill="#22d0d8" d="M1729.6 547.4 L1742 537.4 L1742 545.9 L1751 545.9 L1751 549.3 L1742 549.3 L1742 557.4 Z"/><rect x="794.5" y="57" width="10" height="936" fill="#ffffff" opacity="0.07"/><rect x="798.95" y="57" width="1.2" height="936" fill="#ffffff"/><rect x="907.3" y="57" width="10" height="936" fill="#ffffff" opacity="0.07"/><rect x="911.75" y="57" width="1.2" height="936" fill="#ffffff"/><line x1="877.5" y1="93" x2="877.5" y2="992" stroke="#cfcfcf" stroke-width="1" stroke-dasharray="5 5"/><line x1="800" y1="159.5" x2="912" y2="159.5" stroke="#f01010" stroke-width="1.2" stroke-dasharray="14 7" stroke-dashoffset="8.1"/><circle cx="799.5" cy="645.5" r="3.4" fill="none" stroke="#c4c4c4" stroke-width="1.7"/><line x1="794.5" y1="640.5" x2="791.0" y2="637.0" stroke="#b0b0b0" stroke-width="1.3"/><line x1="804.5" y1="640.5" x2="808.0" y2="637.0" stroke="#b0b0b0" stroke-width="1.3"/><line x1="794.5" y1="650.5" x2="791.0" y2="654.0" stroke="#b0b0b0" stroke-width="1.3"/><line x1="804.5" y1="650.5" x2="808.0" y2="654.0" stroke="#b0b0b0" stroke-width="1.3"/><circle cx="912.5" cy="465.5" r="3.4" fill="none" stroke="#c4c4c4" stroke-width="1.7"/><line x1="907.5" y1="460.5" x2="904.0" y2="457.0" stroke="#b0b0b0" stroke-width="1.3"/><line x1="917.5" y1="460.5" x2="921.0" y2="457.0" stroke="#b0b0b0" stroke-width="1.3"/><line x1="907.5" y1="470.5" x2="904.0" y2="474.0" stroke="#b0b0b0" stroke-width="1.3"/><line x1="917.5" y1="470.5" x2="921.0" y2="474.0" stroke="#b0b0b0" stroke-width="1.3"/><path fill="#505050" d="M1712 64 L1741 64 Q1744 64 1744 67 L1744 95 Q1744 98 1742 96 L1711 66 Q1709 64 1712 64 Z"/><circle cx="1737" cy="70.5" r="4.2" fill="none" stroke="#9a9a9a" stroke-width="1.6"/><line x1="1734" y1="73.5" x2="1727.5" y2="80" stroke="#9a9a9a" stroke-width="2"/><rect x="586" y="44" width="582" height="2" fill="#bdbdbd"/><path d="M593 36.5 H586.5 V52.5 H593 M1161 36.5 H1167.5 V52.5 H1161" fill="none" stroke="#f0f0f0" stroke-width="1.3"/><line x1="852" y1="34" x2="852" y2="56" stroke="#c8c8c8" stroke-width="2" stroke-dasharray="4 2"/><line x1="890" y1="34" x2="890" y2="56" stroke="#c8c8c8" stroke-width="2" stroke-dasharray="4 2"/><path fill="#f7931e" d="M869 33.5 L884.5 33.5 L877 38 Z"/><path fill="#000" stroke="#f0922a" stroke-width="1.6" d="M871 41 H883 V51.5 H879 L877 55 L875 51.5 H871 Z"/><path fill="#f0922a" d="M873.8 43.5 H880.2 V45 H877.8 V50 H876.2 V45 H873.8 Z"/><path fill="#f7931e" d="M867 57 L887.5 57 L877.2 66 Z"/><path fill="#000" stroke="#f7931e" stroke-width="2" d="M868 85.5 V68 H886 V85.5"/><path fill="#f7931e" d="M872.4 72.1 H880.9 V74 H878.1 V83 H875.6 V74 H872.4 Z"/><path fill="#f6ec30" d="M8.8 606.3 H29.2 L41.7 618.9 L29.2 631.7 H8.8 Q5.8 631.7 5.8 628.7 V609.3 Q5.8 606.3 8.8 606.3 Z"/><path fill="#1a080c" stroke="#d8405e" stroke-width="1.3" d="M9.3 798.8 H29.7 L41.5 810.8 L29.7 823 H9.3 Q6.6 823 6.6 820.3 V801.5 Q6.6 798.8 9.3 798.8 Z"/></svg><div class="a" style="left:773px;top:57px;width:25px;height:20px;background:#d6ce2c;border-radius:4px"></div><div class="t" style="left:777.60px;top:60.00px;font-size:13.5px;color:#1e1e10;">C</div><div class="t" style="left:787.40px;top:60.00px;font-size:13.5px;color:#1e1e10;">1</div><div class="a" style="left:800px;top:57px;width:20px;height:20px;background:#333;border-radius:4px"></div><div class="a" style="left:801px;top:58px;width:17px;height:17px;background:#2b86d6;border-radius:50%"></div><div class="t" style="left:804.60px;top:59.00px;font-size:14px;color:#e8f0ff;">A</div><div class="a" style="left:891px;top:57px;width:21px;height:20px;background:#333;border-radius:4px"></div><div class="a" style="left:893.5px;top:58px;width:17px;height:17px;background:#2b86d6;border-radius:50%"></div><div class="t" style="left:897.50px;top:59.00px;font-size:14px;color:#e8f0ff;">B</div><div class="a" style="left:914.5px;top:57px;width:25px;height:20px;background:#d6ce2c;border-radius:4px"></div><div class="t" style="left:919.00px;top:60.00px;font-size:13.5px;color:#1e1e10;">C</div><div class="t" style="left:928.80px;top:60.00px;font-size:13.5px;color:#1e1e10;">1</div><div class="a" style="left:726px;top:85.5px;width:259.5px;height:47px;background:rgba(58,58,58,0.9);border-radius:5px"></div><div class="t" style="left:729.70px;top:90.00px;font-size:16px;color:#dcdcdc;letter-spacing:-0.545px;word-spacing:0.545px;">Δt: 65.041 μs</div><div class="t" style="left:729.70px;top:110.00px;font-size:16px;color:#dcdcdc;letter-spacing:-0.717px;word-spacing:0.717px;">Δv: 19.238 V</div><div class="t" style="left:845.00px;top:90.00px;font-size:16px;color:#dcdcdc;letter-spacing:-0.479px;word-spacing:0.479px;">1/Δt: 15.38 kHz</div><div class="t" style="left:836.70px;top:110.00px;font-size:16px;color:#dcdcdc;letter-spacing:-0.510px;word-spacing:0.510px;">Δv/Δt: 295.78 kV/s</div><div class="a" style="left:659px;top:137.3px;width:139px;height:43.4px;background:rgba(58,58,58,0.9);border-radius:5px"></div><div class="t" style="left:662.40px;top:140.00px;font-size:16px;color:#dcdcdc;letter-spacing:-0.485px;word-spacing:0.485px;">t: -44.803 μs</div><div class="t" style="left:662.40px;top:158.00px;font-size:16px;color:#dcdcdc;letter-spacing:-0.613px;word-spacing:0.613px;">v: -2.878 V</div><div class="a" style="left:914px;top:137.3px;width:139px;height:43.4px;background:rgba(58,58,58,0.9);border-radius:5px"></div><div class="t" style="left:917.20px;top:140.00px;font-size:16px;color:#dcdcdc;letter-spacing:-0.544px;word-spacing:0.544px;">t: 20.237 μs</div><div class="t" style="left:917.20px;top:158.00px;font-size:16px;color:#dcdcdc;letter-spacing:-0.675px;word-spacing:0.675px;">v: 16.360 V</div><div class="t" style="left:8.00px;top:429.00px;font-size:20px;color:#25d3de;letter-spacing:-2.725px;">VGB</div><div class="t" style="left:8.30px;top:658.00px;font-size:20px;color:#f6ec30;letter-spacing:-1.650px;">VGA</div><div class="t" style="left:16.70px;top:765.00px;font-size:20px;color:#e3335a;letter-spacing:-0.475px;">vdd</div><svg class="a" style="left:860px;top:80px" width="40" height="20" viewBox="860 80 40 20"><path fill="#6e5234" d="M867 85.3 H887 V87.6 H881.3 L877.2 93.4 L873.1 87.6 H867 Z M875.2 87.6 L877.2 90.5 L879.2 87.6 Z" fill-rule="evenodd"/></svg><div class="t" style="left:15.00px;top:612.00px;font-size:12.5px;color:#2a1e08;">C</div><div class="t" style="left:26.00px;top:612.00px;font-size:12.5px;color:#2a1e08;">1</div><div class="t" style="left:15.00px;top:804.00px;font-size:13px;color:#f0f0f0;">C</div><div class="t" style="left:25.80px;top:804.00px;font-size:13px;color:#f0f0f0;">3</div><div class="a" style="left:1769px;top:29px;width:151px;height:1px;background:#6d655f"></div><div class="a" style="left:1769px;top:29px;width:1px;height:967px;background:#5a5754"></div><div class="a" style="left:1769px;top:995px;width:151px;height:1px;background:#6d655f"></div><svg class="a" style="left:1780px;top:0" width="130" height="30" viewBox="1780 0 130 30"><g fill="#ffffff"><path d="M1785.8 4 H1803.8 L1800.8 9 H1796.1 V25.9 H1790.7 V9 H1785.8 Z"/><path fill-rule="evenodd" d="M1814 17.9 A8.05 8.05 0 1 0 1812.6 22.6 L1809.2 20.4 A3.6 3.6 0 0 1 1802.6 20.4 Z M1802.7 15.4 A3.4 3.4 0 0 1 1809.2 15.4 Z"/><path d="M1815.3 4 H1820 V19 L1815.3 25.9 Z"/><path d="M1823.3 18.2 L1826.3 14.6 L1830.6 25.9 H1824.4 Z"/><path d="M1831.3 9 L1835.9 4.6 H1836.1 V9 H1838.3 V14.5 H1836.1 V25.9 H1831.3 Z"/><path d="M1839.9 9.6 H1844.6 V11.5 Q1846 9.6 1848.4 9.6 V14.2 Q1845 14.2 1844.6 17 V25.9 H1839.9 Z"/><path fill-rule="evenodd" d="M1856.6 9.6 A8.4 8.3 0 1 1 1856.6 26.2 A8.4 8.3 0 1 1 1856.6 9.6 Z M1856.6 14.4 A3.3 3.5 0 1 0 1856.6 21.4 A3.3 3.5 0 1 0 1856.6 14.4 Z"/><path d="M1865.9 9.9 H1870.6 V11.3 Q1872.5 9.6 1875 9.6 Q1880.1 9.6 1880.1 15 V25.9 H1875.3 V16.5 Q1875.3 14.3 1873 14.3 Q1870.6 14.3 1870.6 16.8 V25.9 H1865.9 Z"/><path d="M1881.9 9.9 H1887.1 V25.9 H1881.9 Z"/><circle cx="1884.4" cy="6.5" r="2.75"/><path d="M1887.7 9.9 H1892.9 L1895.5 13.4 L1898.2 9.9 H1903.3 L1898.4 17.8 L1903.4 25.9 H1898.2 L1895.5 22.2 L1892.8 25.9 H1887.6 L1892.6 17.8 Z"/></g><path fill="#1ebbe0" d="M1815 25.9 H1820.3 L1830.8 9 H1825.7 Z"/></svg><div class="t" style="left:1802.70px;top:32.00px;font-size:14px;color:#ececec;font-weight:bold;letter-spacing:1.575px;word-spacing:-1.575px;">Add New...</div><div class="a" style="left:1778px;top:54px;width:63px;height:37px;background:#27b4e8;border:1px solid #5a8fa8;border-radius:6px"></div><div class="t" style="left:1785.00px;top:64.00px;font-size:15px;color:#050505;letter-spacing:-0.417px;">Cursors</div><div class="a" style="left:1850px;top:54px;width:63px;height:37px;background:linear-gradient(#3d3d3f 0%,#2e2e2e 22%,#2b2b2b 80%,#1c1c1c 100%);border:1px solid #776c64;border-radius:6px"></div><div class="t" style="left:1856.70px;top:64.00px;font-size:15px;color:#ececec;letter-spacing:0.325px;">Callout</div><div class="a" style="left:1778px;top:100px;width:63px;height:37px;background:linear-gradient(#3d3d3f 0%,#2e2e2e 22%,#2b2b2b 80%,#1c1c1c 100%);border:1px solid #776c64;border-radius:6px"></div><div class="t" style="left:1780.40px;top:110.00px;font-size:15px;color:#ececec;">Measure</div><div class="a" style="left:1850px;top:100px;width:63px;height:37px;background:linear-gradient(#3d3d3f 0%,#2e2e2e 22%,#2b2b2b 80%,#1c1c1c 100%);border:1px solid #776c64;border-radius:6px"></div><div class="t" style="left:1858.30px;top:110.00px;font-size:15px;color:#ececec;letter-spacing:-0.320px;">Search</div><div class="a" style="left:1778px;top:146px;width:63px;height:37px;background:linear-gradient(#3d3d3f 0%,#2e2e2e 22%,#2b2b2b 80%,#1c1c1c 100%);border:1px solid #776c64;border-radius:6px"></div><div class="t" style="left:1785.60px;top:148.00px;font-size:15px;color:#ececec;letter-spacing:-0.383px;">Results</div><div class="t" style="left:1791.50px;top:164.00px;font-size:15px;color:#ececec;letter-spacing:0.037px;">Table</div><div class="a" style="left:1850px;top:146px;width:63px;height:37px;background:linear-gradient(#3d3d3f 0%,#2e2e2e 22%,#2b2b2b 80%,#1c1c1c 100%);border:1px solid #776c64;border-radius:6px"></div><div class="t" style="left:1867.70px;top:156.00px;font-size:15px;color:#ececec;letter-spacing:0.433px;">Plot</div><div class="a" style="left:1773px;top:189px;width:144px;height:1px;background:#6d655f"></div><div class="a" style="left:1778px;top:196px;width:63px;height:37px;background:linear-gradient(#3d3d3f 0%,#2e2e2e 22%,#2b2b2b 80%,#1c1c1c 100%);border:1px solid #776c64;border-radius:6px"></div><div class="a" style="left:1850px;top:196px;width:63px;height:37px;background:linear-gradient(#3d3d3f 0%,#2e2e2e 22%,#2b2b2b 80%,#1c1c1c 100%);border:1px solid #776c64;border-radius:6px"></div><div class="t" style="left:1856.50px;top:206.00px;font-size:15px;color:#ececec;letter-spacing:0.458px;">More...</div><div class="a" style="left:1773px;top:241px;width:144px;height:1px;background:#6d655f"></div><svg class="a" style="left:1790px;top:198px" width="40" height="34" viewBox="1790 198 40 34"><rect x="1797.5" y="202.5" width="23" height="20" fill="none" stroke="#c4c4c4" stroke-width="2" stroke-dasharray="3.5 3.5"/><circle cx="1811" cy="210.8" r="4.6" fill="#2b2b2b" stroke="#c4c4c4" stroke-width="1.6"/><line x1="1807.8" y1="214" x2="1803" y2="218.5" stroke="#c4c4c4" stroke-width="2.4" stroke-linecap="round"/><path fill="#c4c4c4" d="M1815.5 217 L1823 224.5 L1820 225 L1822 228.5 L1820.5 229 L1818.5 225.5 L1816.5 227.5 Z"/></svg><div class="a" style="left:1759.7px;top:501.5px;width:4.4px;height:4.4px;border-radius:50%;background:#c4c4c4"></div><div class="a" style="left:1759.7px;top:510.0px;width:4.4px;height:4.4px;border-radius:50%;background:#c4c4c4"></div><div class="a" style="left:1759.7px;top:518.5px;width:4.4px;height:4.4px;border-radius:50%;background:#c4c4c4"></div><div class="a" style="left:1773px;top:255px;width:144px;height:57px;background:#c9c9c9;border-radius:5px;overflow:hidden"><div class="a" style="left:0;top:0;width:144px;height:18.5px;background:#575757"></div><div class="a" style="left:0;top:18.5px;width:144px;height:2.5px;background:#a4a4a4"></div></div><div class="t" style="left:1778.75px;top:256.00px;font-size:15px;color:#f2f2f2;letter-spacing:-0.750px;word-spacing:0.750px;">Meas 1</div><div class="a" style="left:1888.5px;top:257.8px;width:22.5px;height:13.2px;background:#f2e82a;border-radius:7px;border:1px solid #2a2a2a"></div><div class="t" style="left:1898.00px;top:261.00px;font-size:10px;color:#111;">1</div><div class="t" style="left:1778.20px;top:276.00px;font-size:15px;color:#1a1a1a;letter-spacing:-1.225px;">Top</div><div class="t" style="left:1778.60px;top:295.00px;font-size:15px;color:#1a1a1a;letter-spacing:-0.100px;word-spacing:0.100px;">μ': 16.17 V</div><div class="a" style="left:1773px;top:320px;width:144px;height:57px;background:#c9c9c9;border-radius:5px;overflow:hidden"><div class="a" style="left:0;top:0;width:144px;height:18.5px;background:#575757"></div><div class="a" style="left:0;top:18.5px;width:144px;height:2.5px;background:#a4a4a4"></div></div><div class="t" style="left:1778.75px;top:321.00px;font-size:15px;color:#f2f2f2;letter-spacing:-0.750px;word-spacing:0.750px;">Meas 2</div><div class="a" style="left:1888.5px;top:322.8px;width:22.5px;height:13.2px;background:#f2e82a;border-radius:7px;border:1px solid #2a2a2a"></div><div class="t" style="left:1898.00px;top:326.00px;font-size:10px;color:#111;">1</div><div class="t" style="left:1778.20px;top:341.00px;font-size:15px;color:#1a1a1a;letter-spacing:-2.083px;">Base</div><div class="t" style="left:1778.60px;top:360.00px;font-size:15px;color:#1a1a1a;letter-spacing:-0.100px;word-spacing:0.100px;">μ': -2.946 V</div><div class="a" style="left:1773px;top:385px;width:144px;height:57px;background:#c9c9c9;border-radius:5px;overflow:hidden"><div class="a" style="left:0;top:0;width:144px;height:18.5px;background:#575757"></div><div class="a" style="left:0;top:18.5px;width:144px;height:2.5px;background:#a4a4a4"></div></div><div class="t" style="left:1778.75px;top:386.00px;font-size:15px;color:#f2f2f2;letter-spacing:-0.750px;word-spacing:0.750px;">Meas 3</div><div class="a" style="left:1888.5px;top:387.8px;width:22.5px;height:13.2px;background:#22c8d3;border-radius:7px;border:1px solid #2a2a2a"></div><div class="t" style="left:1898.00px;top:391.00px;font-size:10px;color:#111;">2</div><div class="t" style="left:1778.20px;top:406.00px;font-size:15px;color:#1a1a1a;letter-spacing:-1.225px;">Top</div><div class="t" style="left:1778.60px;top:425.00px;font-size:15px;color:#1a1a1a;letter-spacing:-0.100px;word-spacing:0.100px;">μ': 16.90 V</div><div class="a" style="left:1773px;top:450px;width:144px;height:57px;background:#c9c9c9;border-radius:5px;overflow:hidden"><div class="a" style="left:0;top:0;width:144px;height:18.5px;background:#575757"></div><div class="a" style="left:0;top:18.5px;width:144px;height:2.5px;background:#a4a4a4"></div></div><div class="t" style="left:1778.75px;top:451.00px;font-size:15px;color:#f2f2f2;letter-spacing:-0.750px;word-spacing:0.750px;">Meas 4</div><div class="a" style="left:1888.5px;top:452.8px;width:22.5px;height:13.2px;background:#22c8d3;border-radius:7px;border:1px solid #2a2a2a"></div><div class="t" style="left:1898.00px;top:456.00px;font-size:10px;color:#111;">2</div><div class="t" style="left:1778.20px;top:471.00px;font-size:15px;color:#1a1a1a;letter-spacing:-2.083px;">Base</div><div class="t" style="left:1778.60px;top:490.00px;font-size:15px;color:#1a1a1a;letter-spacing:-0.100px;word-spacing:0.100px;">μ': -2.942 V</div><div class="a" style="left:1773px;top:515px;width:144px;height:57px;background:#c9c9c9;border-radius:5px;overflow:hidden"><div class="a" style="left:0;top:0;width:144px;height:18.5px;background:#575757"></div><div class="a" style="left:0;top:18.5px;width:144px;height:2.5px;background:#a4a4a4"></div></div><div class="t" style="left:1778.75px;top:516.00px;font-size:15px;color:#f2f2f2;letter-spacing:-0.750px;word-spacing:0.750px;">Meas 5</div><div class="a" style="left:1888.5px;top:517.8px;width:22.5px;height:13.2px;background:#e3405e;border-radius:7px;border:1px solid #2a2a2a"></div><div class="t" style="left:1898.00px;top:521.00px;font-size:10px;color:#ffffff;">3</div><div class="t" style="left:1778.20px;top:536.00px;font-size:15px;color:#1a1a1a;letter-spacing:-1.225px;">Top</div><div class="t" style="left:1778.60px;top:555.00px;font-size:15px;color:#1a1a1a;letter-spacing:-0.100px;word-spacing:0.100px;">μ': 19.74 V</div><div class="a" style="left:1773px;top:580px;width:144px;height:57px;background:#c9c9c9;border-radius:5px;overflow:hidden"><div class="a" style="left:0;top:0;width:144px;height:18.5px;background:#000"></div><div class="a" style="left:0;top:18.5px;width:144px;height:2.5px;background:#a4a4a4"></div></div><div class="t" style="left:1778.75px;top:581.00px;font-size:15px;color:#f2f2f2;letter-spacing:-0.750px;word-spacing:0.750px;">Meas 6</div><div class="a" style="left:1888.5px;top:582.8px;width:22.5px;height:13.2px;background:#e3405e;border-radius:7px;border:1px solid #2a2a2a"></div><div class="t" style="left:1898.00px;top:586.00px;font-size:10px;color:#ffffff;">3</div><div class="t" style="left:1778.20px;top:601.00px;font-size:15px;color:#1a1a1a;letter-spacing:-2.083px;">Base</div><div class="t" style="left:1778.60px;top:620.00px;font-size:15px;color:#1a1a1a;letter-spacing:-0.100px;word-spacing:0.100px;">μ': 19.69 V</div><div class="a" style="left:3px;top:1001px;width:90px;height:76px;background:#c9c9c9;border-radius:5px;overflow:hidden"><div class="a" style="left:0;top:0;width:90px;height:18.8px;background:#f8ee3a"></div><div class="a" style="left:0;top:18.8px;width:90px;height:2px;background:#a0a0a0"></div></div><div class="t" style="left:8.70px;top:1002.00px;font-size:15px;color:#1a1a1a;letter-spacing:-1.175px;word-spacing:1.175px;">Ch 1</div><div class="t" style="left:9.40px;top:1022.00px;font-size:15px;color:#1a1a1a;letter-spacing:-0.575px;word-spacing:0.575px;">10 V/div</div><svg class="a" style="left:9px;top:1041px" width="18" height="14" viewBox="0 0 18 14"><path d="M2 11 V8 Q2 1.5 8 1.5 Q14 1.5 14 7.5" fill="none" stroke="#222" stroke-width="1.1"/><circle cx="8" cy="4.8" r="2.6" fill="none" stroke="#222" stroke-width="1.1"/><rect x="0.8" y="7.8" width="2.6" height="5.2" rx="1.2" fill="#f4f4f4" stroke="#222" stroke-width="0.8"/><rect x="11.8" y="7.3" width="3.8" height="6.2" fill="#f4f4f4" stroke="#222" stroke-width="0.8"/></svg><div class="t" style="left:9.40px;top:1060.00px;font-size:15px;color:#1a1a1a;letter-spacing:-1.400px;word-spacing:1.400px;">1 GHz</div><div class="a" style="left:98px;top:1001px;width:90px;height:76px;background:#c9c9c9;border-radius:5px;overflow:hidden"><div class="a" style="left:0;top:0;width:90px;height:18.8px;background:#1f3e40"></div><div class="a" style="left:0;top:18.8px;width:90px;height:2px;background:#a0a0a0"></div></div><div class="t" style="left:103.70px;top:1002.00px;font-size:15px;color:#2ed2dc;letter-spacing:-1.175px;word-spacing:1.175px;">Ch 2</div><div class="t" style="left:104.40px;top:1022.00px;font-size:15px;color:#1a1a1a;letter-spacing:-0.575px;word-spacing:0.575px;">10 V/div</div><svg class="a" style="left:104px;top:1041px" width="18" height="14" viewBox="0 0 18 14"><path d="M2 11 V8 Q2 1.5 8 1.5 Q14 1.5 14 7.5" fill="none" stroke="#222" stroke-width="1.1"/><circle cx="8" cy="4.8" r="2.6" fill="none" stroke="#222" stroke-width="1.1"/><rect x="0.8" y="7.8" width="2.6" height="5.2" rx="1.2" fill="#f4f4f4" stroke="#222" stroke-width="0.8"/><rect x="11.8" y="7.3" width="3.8" height="6.2" fill="#f4f4f4" stroke="#222" stroke-width="0.8"/></svg><div class="t" style="left:104.40px;top:1060.00px;font-size:15px;color:#1a1a1a;letter-spacing:-1.400px;word-spacing:1.400px;">1 GHz</div><div class="a" style="left:193px;top:1001px;width:90px;height:76px;background:#c9c9c9;border-radius:5px;overflow:hidden"><div class="a" style="left:0;top:0;width:90px;height:18.8px;background:#452126"></div><div class="a" style="left:0;top:18.8px;width:90px;height:2px;background:#a0a0a0"></div></div><div class="t" style="left:198.70px;top:1002.00px;font-size:15px;color:#f4f4f4;letter-spacing:-1.175px;word-spacing:1.175px;">Ch 3</div><div class="t" style="left:199.40px;top:1022.00px;font-size:15px;color:#1a1a1a;letter-spacing:-0.575px;word-spacing:0.575px;">20 V/div</div><svg class="a" style="left:199px;top:1041px" width="18" height="14" viewBox="0 0 18 14"><path d="M2 11 V8 Q2 1.5 8 1.5 Q14 1.5 14 7.5" fill="none" stroke="#222" stroke-width="1.1"/><circle cx="8" cy="4.8" r="2.6" fill="none" stroke="#222" stroke-width="1.1"/><rect x="0.8" y="7.8" width="2.6" height="5.2" rx="1.2" fill="#f4f4f4" stroke="#222" stroke-width="0.8"/><rect x="11.8" y="7.3" width="3.8" height="6.2" fill="#f4f4f4" stroke="#222" stroke-width="0.8"/></svg><div class="t" style="left:199.40px;top:1060.00px;font-size:15px;color:#1a1a1a;letter-spacing:-1.400px;word-spacing:1.400px;">1 GHz</div><div class="a" style="left:288px;top:1001px;width:90px;height:76px;background:#8a8a8a;border-radius:5px;overflow:hidden"><div class="a" style="left:0;top:0;width:90px;height:18.8px;background:#618434"></div><div class="a" style="left:0;top:18.8px;width:90px;height:2px;background:#a0a0a0"></div></div><div class="t" style="left:293.70px;top:1002.00px;font-size:15px;color:#1a2210;letter-spacing:-1.175px;word-spacing:1.175px;">Ch 4</div><div class="t" style="left:294.40px;top:1022.00px;font-size:15px;color:#2a2a2a;letter-spacing:-0.575px;word-spacing:0.575px;">10 V/div</div><div class="t" style="left:294.40px;top:1041.00px;font-size:15px;color:#2a2a2a;letter-spacing:-1.125px;word-spacing:1.125px;">1 MΩ</div><div class="t" style="left:293.90px;top:1060.00px;font-size:15px;color:#2a2a2a;letter-spacing:-0.480px;word-spacing:0.480px;">500 MHz</div><div class="t" style="left:360.00px;top:1060.00px;font-size:9.5px;color:#222;">B</div><div class="t" style="left:365.25px;top:1063.00px;font-size:9px;color:#222;">w</div><div class="a" style="left:383px;top:1001px;width:90px;height:76px;background:#8a8a8a;border-radius:5px;overflow:hidden"><div class="a" style="left:0;top:0;width:90px;height:18.8px;background:#8f5a28"></div><div class="a" style="left:0;top:18.8px;width:90px;height:2px;background:#a0a0a0"></div></div><div class="t" style="left:389.00px;top:1002.00px;font-size:15px;color:#1a1208;letter-spacing:0.312px;word-spacing:-0.312px;">Math 1</div><div class="t" style="left:390.00px;top:1022.00px;font-size:15px;color:#2a2a2a;">1</div><div class="a" style="left:1129.3px;top:999.3px;width:39.5px;height:77px;border-radius:8px;border:1px solid #776c64;background:linear-gradient(#3d3d3f 0%,#2e2e2e 18%,#2b2b2b 85%,#1c1c1c 100%)"></div><div class="a" style="left:1133.3px;top:1006.8px;width:31.5px;height:2.2px;background:#8e2ea8"></div><div class="t" style="left:1136.05px;top:1019.00px;font-size:16px;color:#ececec;letter-spacing:-1.250px;">Add</div><div class="t" style="left:1134.85px;top:1035.00px;font-size:16px;color:#ececec;letter-spacing:-1.925px;">New</div><div class="t" style="left:1132.95px;top:1051.00px;font-size:16px;color:#ececec;letter-spacing:-1.100px;">Math</div><div class="a" style="left:1174.3px;top:999.3px;width:39.5px;height:77px;border-radius:8px;border:1px solid #776c64;background:linear-gradient(#3d3d3f 0%,#2e2e2e 18%,#2b2b2b 85%,#1c1c1c 100%)"></div><div class="a" style="left:1178.3px;top:1006.8px;width:31.5px;height:2.2px;background:#c8c8e0"></div><div class="t" style="left:1181.05px;top:1019.00px;font-size:16px;color:#ececec;letter-spacing:-1.250px;">Add</div><div class="t" style="left:1179.85px;top:1035.00px;font-size:16px;color:#ececec;letter-spacing:-1.925px;">New</div><div class="t" style="left:1184.25px;top:1051.00px;font-size:16px;color:#ececec;letter-spacing:-2.700px;">Ref</div><div class="a" style="left:1219.3px;top:999.3px;width:39.5px;height:77px;border-radius:8px;border:1px solid #776c64;background:linear-gradient(#3d3d3f 0%,#2e2e2e 18%,#2b2b2b 85%,#1c1c1c 100%)"></div><div class="a" style="left:1223.3px;top:1006.8px;width:31.5px;height:2.2px;background:#d050f0"></div><div class="t" style="left:1226.05px;top:1019.00px;font-size:16px;color:#ececec;letter-spacing:-1.250px;">Add</div><div class="t" style="left:1224.85px;top:1035.00px;font-size:16px;color:#ececec;letter-spacing:-1.925px;">New</div><div class="t" style="left:1228.25px;top:1051.00px;font-size:16px;color:#ececec;letter-spacing:-2.950px;">Bus</div><div class="a" style="left:1269px;top:999px;width:1px;height:78px;background:#6d655f"></div><div class="a" style="left:1811px;top:999px;width:1px;height:78px;background:#6d655f"></div><div class="a" style="left:1281px;top:1001px;width:198px;height:75.5px;background:#c9c9c9;border-radius:5px;overflow:hidden;border:1px solid #141414"><div class="a" style="left:0;top:0;width:198px;height:18.5px;background:#575757"></div><div class="a" style="left:0;top:18.5px;width:198px;height:2.2px;background:#a4a4a4"></div></div><div class="t" style="left:1286.50px;top:1003.00px;font-size:16px;color:#f0f0f0;letter-spacing:0.078px;">Horizontal</div><div class="t" style="left:1286.50px;top:1022.00px;font-size:15px;color:#1a1a1a;letter-spacing:-0.594px;word-spacing:0.594px;">100 μs/div</div><div class="t" style="left:1392.60px;top:1022.00px;font-size:15px;color:#1a1a1a;letter-spacing:-2.050px;word-spacing:2.050px;">1 ms</div><div class="t" style="left:1285.70px;top:1041.00px;font-size:15px;color:#1a1a1a;letter-spacing:-1.150px;word-spacing:1.150px;">SR: 1.25 GS/s</div><div class="t" style="left:1391.50px;top:1041.00px;font-size:15px;color:#1a1a1a;letter-spacing:-0.236px;word-spacing:0.236px;">800 ps/pt</div><div class="t" style="left:1285.70px;top:1059.00px;font-size:15px;color:#1a1a1a;letter-spacing:-0.580px;word-spacing:0.580px;">RL: 1.25 Mpts</div><div class="t" style="left:1405.70px;top:1059.00px;font-size:15px;color:#1a1a1a;letter-spacing:-0.250px;">50%</div><svg class="a" style="left:1389px;top:1059px" width="14" height="16" viewBox="0 0 14 16"><path d="M2.5 2 H11 V10.5 H8.3 L6.75 13.3 L5.2 10.5 H2.5 Z" fill="#111" stroke="#f39a1e" stroke-width="1.5"/><path d="M4.6 4 H8.9 V5.4 H7.5 V9 H6 V5.4 H4.6 Z" fill="#eee"/></svg><div class="a" style="left:1486px;top:1001px;width:158.5px;height:75.5px;background:#c9c9c9;border-radius:5px;overflow:hidden;border:1px solid #141414"><div class="a" style="left:0;top:0;width:158.5px;height:18.5px;background:#575757"></div><div class="a" style="left:0;top:18.5px;width:158.5px;height:2.2px;background:#a4a4a4"></div></div><div class="t" style="left:1491.25px;top:1003.00px;font-size:16px;color:#f0f0f0;letter-spacing:-0.250px;">Trigger</div><div class="a" style="left:1490.3px;top:1023.25px;width:29px;height:15.2px;background:#22d0d8;border:1px solid #1a1a1a;border-radius:5.5px"></div><div class="t" style="left:1502.00px;top:1023.00px;font-size:14px;color:#111;">2</div><svg class="a" style="left:1528px;top:1023px" width="20" height="14" viewBox="0 0 20 14"><path d="M2 2.2 H6.7 L13.9 11.5 H17.6" fill="none" stroke="#2e2e7a" stroke-width="1.2"/></svg><div class="t" style="left:1556.90px;top:1022.00px;font-size:15px;color:#1a1a1a;letter-spacing:-0.833px;word-spacing:0.833px;">7.6 V</div><div class="a" style="left:1651px;top:1001px;width:148px;height:75.5px;background:#c9c9c9;border-radius:5px;overflow:hidden;border:1px solid #141414"><div class="a" style="left:0;top:0;width:148px;height:18.5px;background:#575757"></div><div class="a" style="left:0;top:18.5px;width:148px;height:2.2px;background:#a4a4a4"></div></div><div class="t" style="left:1656.50px;top:1003.00px;font-size:16px;color:#f0f0f0;letter-spacing:-0.040px;">Acquisition</div><div class="t" style="left:1655.50px;top:1022.00px;font-size:15px;color:#1a1a1a;letter-spacing:-0.200px;">Auto,</div><div class="t" style="left:1736.20px;top:1022.00px;font-size:15px;color:#1a1a1a;letter-spacing:-0.675px;">Analyze</div><div class="t" style="left:1655.50px;top:1041.00px;font-size:15px;color:#1a1a1a;letter-spacing:-0.500px;word-spacing:0.500px;">Sample: 12 bits</div><div class="t" style="left:1655.50px;top:1060.00px;font-size:15px;color:#1a1a1a;letter-spacing:-0.580px;word-spacing:0.580px;">32 Acqs</div><div class="a" style="left:1822.4px;top:999.3px;width:89.3px;height:35px;background:#12d212;border-radius:6px;border:1px solid #6a6a6a"></div><div class="t" style="left:1835.20px;top:1009.00px;font-size:13.5px;color:#ffffff;font-weight:bold;letter-spacing:0.175px;">Triggered</div><div class="a" style="left:1822.2px;top:1040.2px;width:89.7px;height:35.8px;background:#c9c9c9;border-radius:6px"></div><div class="t" style="left:1826.50px;top:1041.00px;font-size:15px;color:#1a1a1a;letter-spacing:-0.137px;word-spacing:0.137px;">26 Apr 2023</div><div class="t" style="left:1825.70px;top:1058.00px;font-size:15px;color:#1a1a1a;letter-spacing:-0.072px;word-spacing:0.072px;">12:24:24 AM</div></body></html>
